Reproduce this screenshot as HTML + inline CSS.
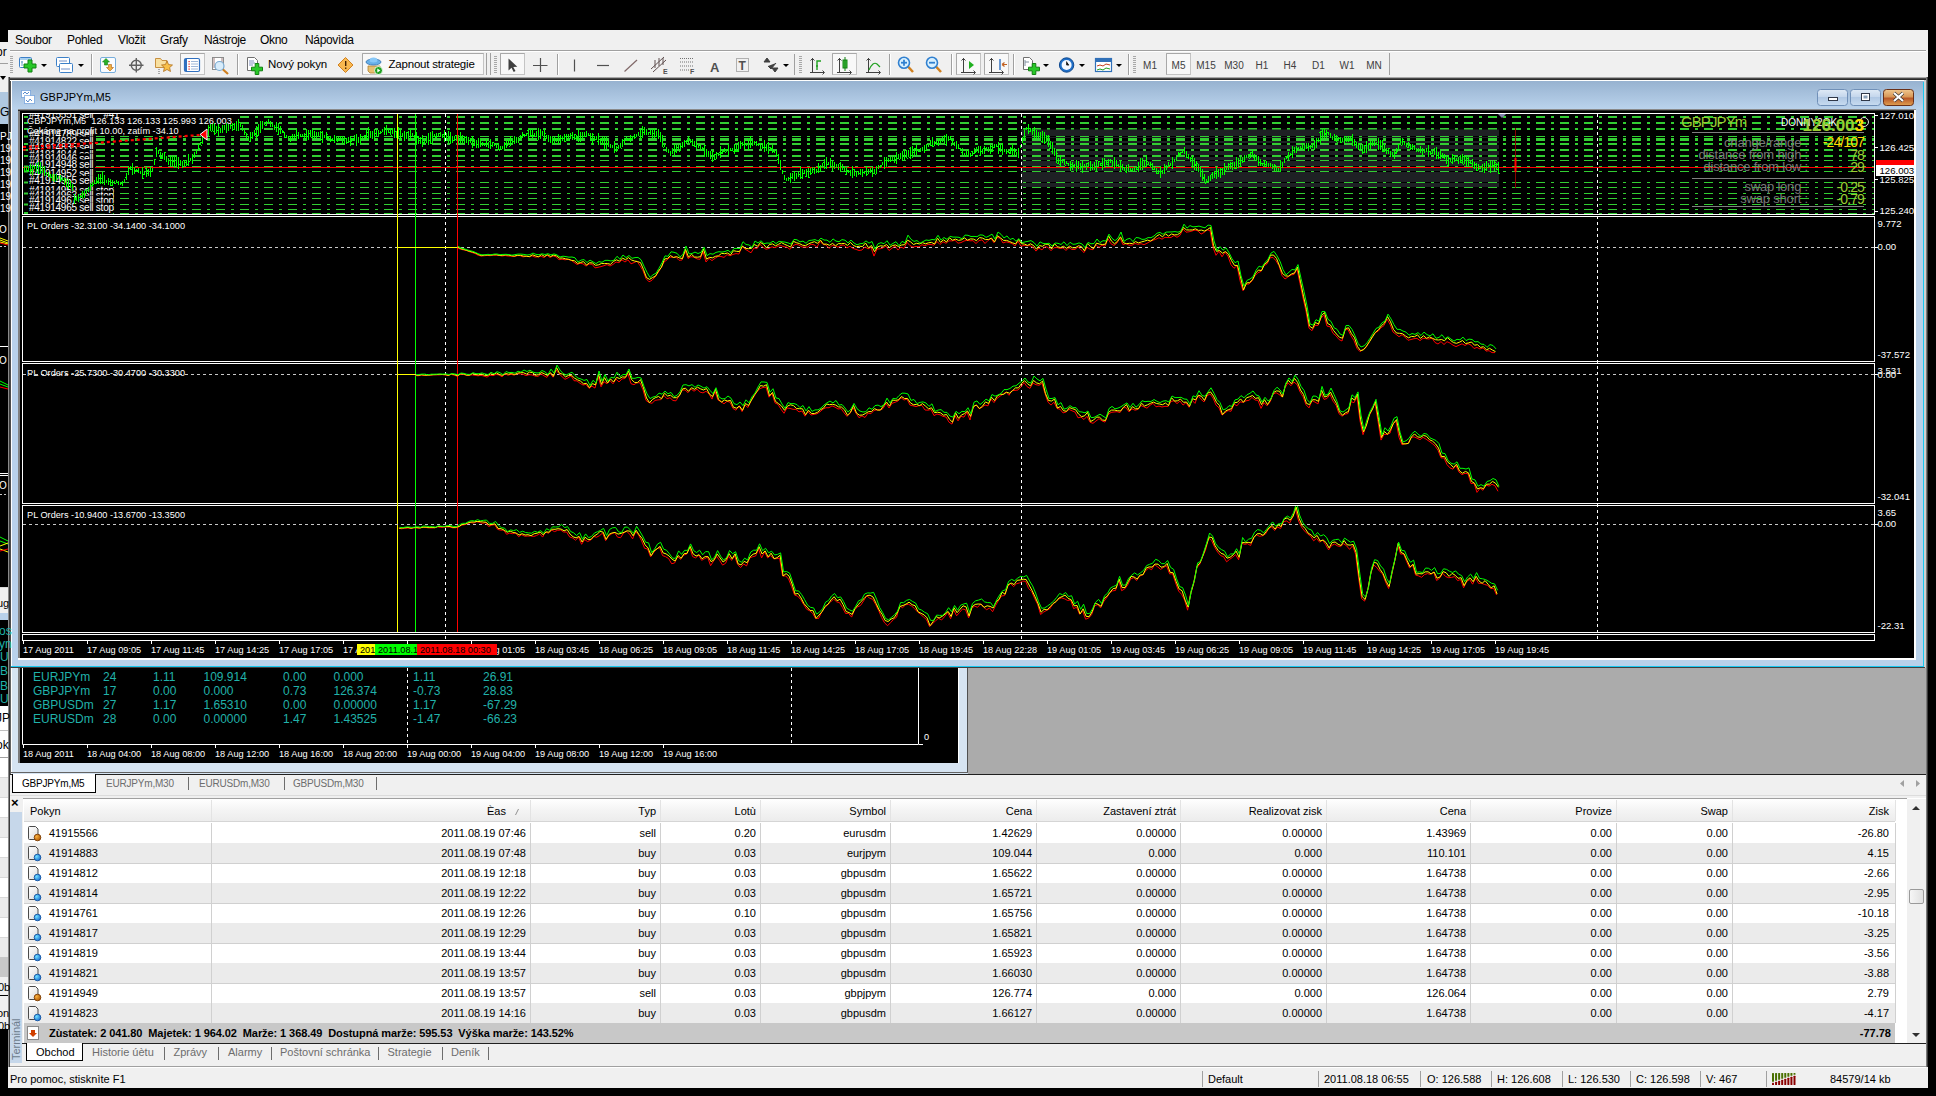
<!DOCTYPE html>
<html><head><meta charset="utf-8">
<style>
*{margin:0;padding:0;box-sizing:border-box}
html,body{width:1936px;height:1096px;overflow:hidden;background:#000;font-family:"Liberation Sans",sans-serif;position:relative}
.a{position:absolute}
.t{z-index:2;position:absolute;white-space:pre;line-height:1;font-family:"Liberation Sans",sans-serif}
svg{position:absolute;left:0;top:0;z-index:1}
</style></head><body>
<div class="a" style="left:0px;top:42px;width:8px;height:50px;background:#f0f0f0;"></div>
<div class="t" style="left:-4px;top:45.84px;font-size:12px;color:#000;font-weight:normal;">or</div>
<div class="a" style="left:0px;top:63px;width:8px;height:1px;background:#a0a0a0;"></div>
<div class="a" style="left:0px;top:92px;width:8px;height:32px;background:#b0c8e0;"></div>
<div class="t" style="left:0px;top:105.84px;font-size:12px;color:#000;font-weight:normal;">G</div>
<div class="t" style="left:0px;top:131.53px;font-size:10px;color:#fff;font-weight:normal;">PJ</div>
<div class="t" style="left:0px;top:143.53px;font-size:10px;color:#fff;font-weight:normal;">19</div>
<div class="t" style="left:0px;top:155.53px;font-size:10px;color:#fff;font-weight:normal;">19</div>
<div class="t" style="left:0px;top:167.53px;font-size:10px;color:#fff;font-weight:normal;">19</div>
<div class="t" style="left:0px;top:179.53px;font-size:10px;color:#fff;font-weight:normal;">19</div>
<div class="t" style="left:0px;top:191.53px;font-size:10px;color:#fff;font-weight:normal;">19</div>
<div class="t" style="left:0px;top:203.53px;font-size:10px;color:#fff;font-weight:normal;">19</div>
<div class="t" style="left:-1px;top:224.53px;font-size:10px;color:#fff;font-weight:normal;">O</div>
<div class="a" style="left:0px;top:346px;width:8px;height:1px;background:#fff;"></div>
<div class="t" style="left:-1px;top:355.54px;font-size:10px;color:#fff;font-weight:normal;">O</div>
<div class="a" style="left:0px;top:473px;width:8px;height:1px;background:#fff;"></div>
<div class="a" style="left:0px;top:475px;width:8px;height:1px;background:#fff;"></div>
<div class="t" style="left:-1px;top:480.54px;font-size:10px;color:#fff;font-weight:normal;">O</div>
<div class="a" style="left:0px;top:587px;width:8px;height:26px;background:#f0f0f0;"></div>
<div class="t" style="left:-3px;top:597.69px;font-size:11px;color:#000;font-weight:normal;">ug</div>
<div class="a" style="left:0px;top:587px;width:8px;height:1px;background:#d8d8d8;"></div>
<div class="a" style="left:0px;top:613px;width:8px;height:7px;background:#b9d1ea;"></div>
<div class="t" style="left:-1px;top:625.34px;font-size:12px;color:#20b2aa;font-weight:normal;">os</div>
<div class="t" style="left:-1px;top:638.34px;font-size:12px;color:#20b2aa;font-weight:normal;">yn</div>
<div class="t" style="left:0px;top:651.34px;font-size:12px;color:#20b2aa;font-weight:normal;">U</div>
<div class="t" style="left:0px;top:665.34px;font-size:12px;color:#20b2aa;font-weight:normal;">B</div>
<div class="t" style="left:0px;top:680.34px;font-size:12px;color:#20b2aa;font-weight:normal;">B</div>
<div class="t" style="left:0px;top:693.34px;font-size:12px;color:#20b2aa;font-weight:normal;">U</div>
<div class="a" style="left:0px;top:706px;width:8px;height:24px;background:#ffffff;"></div>
<div class="t" style="left:-4px;top:711.84px;font-size:12px;color:#000;font-weight:normal;">JP</div>
<div class="a" style="left:0px;top:730px;width:8px;height:1px;background:#c0c0c0;"></div>
<div class="a" style="left:0px;top:731px;width:8px;height:26px;background:#ffffff;"></div>
<div class="t" style="left:-4px;top:738.84px;font-size:12px;color:#000;font-weight:normal;">ok</div>
<div class="a" style="left:0px;top:757px;width:8px;height:1px;background:#a0a0a0;"></div>
<div class="a" style="left:0px;top:758px;width:8px;height:19px;background:#ffffff;"></div>
<div class="a" style="left:0px;top:777px;width:8px;height:1px;background:#d8d8d8;"></div>
<div class="a" style="left:0px;top:778px;width:8px;height:19px;background:#ebebeb;"></div>
<div class="a" style="left:0px;top:797px;width:8px;height:1px;background:#d8d8d8;"></div>
<div class="a" style="left:0px;top:798px;width:8px;height:19px;background:#ffffff;"></div>
<div class="a" style="left:0px;top:817px;width:8px;height:1px;background:#d8d8d8;"></div>
<div class="a" style="left:0px;top:818px;width:8px;height:19px;background:#ebebeb;"></div>
<div class="a" style="left:0px;top:837px;width:8px;height:1px;background:#d8d8d8;"></div>
<div class="a" style="left:0px;top:838px;width:8px;height:19px;background:#ffffff;"></div>
<div class="a" style="left:0px;top:857px;width:8px;height:1px;background:#d8d8d8;"></div>
<div class="a" style="left:0px;top:858px;width:8px;height:19px;background:#ebebeb;"></div>
<div class="a" style="left:0px;top:877px;width:8px;height:1px;background:#d8d8d8;"></div>
<div class="a" style="left:0px;top:878px;width:8px;height:19px;background:#ffffff;"></div>
<div class="a" style="left:0px;top:897px;width:8px;height:1px;background:#d8d8d8;"></div>
<div class="a" style="left:0px;top:898px;width:8px;height:19px;background:#ebebeb;"></div>
<div class="a" style="left:0px;top:917px;width:8px;height:1px;background:#d8d8d8;"></div>
<div class="a" style="left:0px;top:918px;width:8px;height:19px;background:#ffffff;"></div>
<div class="a" style="left:0px;top:937px;width:8px;height:1px;background:#d8d8d8;"></div>
<div class="a" style="left:0px;top:938px;width:8px;height:19px;background:#ebebeb;"></div>
<div class="a" style="left:0px;top:957px;width:8px;height:1px;background:#d8d8d8;"></div>
<div class="a" style="left:0px;top:957px;width:8px;height:20px;background:#c8c8c8;"></div>
<div class="a" style="left:0px;top:977px;width:8px;height:52px;background:#f0f0f0;"></div>
<div class="t" style="left:-2px;top:981.69px;font-size:11px;color:#000;font-weight:normal;">0b</div>
<div class="a" style="left:0px;top:995px;width:8px;height:1px;background:#000;"></div>
<div class="t" style="left:-3px;top:1007.69px;font-size:11px;color:#000;font-weight:normal;">on</div>
<div class="t" style="left:-2px;top:1020.69px;font-size:11px;color:#000;font-weight:normal;">0b</div>
<div class="a" style="left:8px;top:30px;width:1920px;height:1058px;background:#f0f0f0;"></div>
<div class="a" style="left:8px;top:77px;width:1px;height:990px;background:#8a8a8a;"></div>
<div class="a" style="left:9px;top:77px;width:1px;height:990px;background:#3a3a3a;"></div>
<div class="a" style="left:1926px;top:77px;width:1px;height:990px;background:#7a7a7a;"></div>
<div class="a" style="left:1927px;top:77px;width:1px;height:990px;background:#3a3a3a;"></div>
<div class="t" style="left:15px;top:34.34px;font-size:12px;color:#000;font-weight:normal;letter-spacing:-0.35px">Soubor</div>
<div class="t" style="left:67px;top:34.34px;font-size:12px;color:#000;font-weight:normal;letter-spacing:-0.35px">Pohled</div>
<div class="t" style="left:118px;top:34.34px;font-size:12px;color:#000;font-weight:normal;letter-spacing:-0.35px">Vložit</div>
<div class="t" style="left:160px;top:34.34px;font-size:12px;color:#000;font-weight:normal;letter-spacing:-0.35px">Grafy</div>
<div class="t" style="left:204px;top:34.34px;font-size:12px;color:#000;font-weight:normal;letter-spacing:-0.35px">Nástroje</div>
<div class="t" style="left:260px;top:34.34px;font-size:12px;color:#000;font-weight:normal;letter-spacing:-0.35px">Okno</div>
<div class="t" style="left:305px;top:34.34px;font-size:12px;color:#000;font-weight:normal;letter-spacing:-0.35px">Nápovìda</div>
<div class="a" style="left:10px;top:50px;width:1916px;height:1px;background:#a0a0a0;"></div>
<div class="a" style="left:10px;top:51px;width:1916px;height:1px;background:#ffffff;"></div>
<div class="a" style="left:10px;top:77px;width:1916px;height:1px;background:#a8a8a8;"></div>
<div class="a" style="left:10px;top:78px;width:1916px;height:1px;background:#4a4a4a;"></div>
<div class="a" style="left:10px;top:79px;width:1916px;height:1px;background:#2a2a2a;"></div>
<div class="a" style="left:10px;top:80px;width:1916px;height:694px;background:#ababab;"></div>
<div class="a" style="left:10px;top:666px;width:958px;height:108px;background:#d6e4f2;"></div>
<div class="a" style="left:10px;top:666px;width:1px;height:108px;background:#646464;"></div>
<div class="a" style="left:11px;top:666px;width:1px;height:108px;background:#ffffff;"></div>
<div class="a" style="left:18px;top:668px;width:2px;height:95px;background:#7a7a7a;"></div>
<div class="a" style="left:20px;top:667px;width:938px;height:96px;background:#000;"></div>
<div class="a" style="left:958px;top:667px;width:1px;height:96px;background:#ffffff;"></div>
<div class="a" style="left:959px;top:667px;width:8px;height:106px;background:#d6e4f2;"></div>
<div class="a" style="left:967px;top:667px;width:1px;height:106px;background:#505050;"></div>
<div class="a" style="left:10px;top:772px;width:958px;height:1px;background:#646464;"></div>
<div class="a" style="left:10px;top:80px;width:1916px;height:588px;background:#b9d1ea;"></div>
<div class="a" style="left:12px;top:81px;width:1912px;height:28px;background:linear-gradient(#97b2d0,#bad3ec);"></div>
<div class="a" style="left:10px;top:80px;width:1px;height:588px;background:#4c4c4c;"></div>
<div class="a" style="left:11px;top:80px;width:1px;height:587px;background:#ffffff;"></div>
<div class="a" style="left:10px;top:80px;width:1915px;height:1px;background:#ffffff;"></div>
<div class="a" style="left:1923px;top:82px;width:1px;height:585px;background:#18c8f0;"></div>
<div class="a" style="left:1924px;top:80px;width:2px;height:588px;background:#d0d0d0;"></div>
<div class="a" style="left:11px;top:666px;width:1913px;height:1px;background:#18c8f0;"></div>
<div class="a" style="left:10px;top:667px;width:1915px;height:1px;background:#404040;"></div>
<div class="a" style="left:18px;top:110px;width:2px;height:550px;background:#808080;"></div>
<div class="a" style="left:18px;top:109px;width:1898px;height:1px;background:#8a8a8a;"></div>
<div class="a" style="left:18px;top:110px;width:1898px;height:1px;background:#2a2a2a;"></div>
<div class="a" style="left:20px;top:111px;width:1894px;height:547px;background:#000;"></div>
<div class="a" style="left:18px;top:658px;width:1898px;height:2px;background:#ffffff;"></div>
<div class="a" style="left:1914px;top:110px;width:2px;height:550px;background:#ffffff;"></div>
<div class="t" style="left:40px;top:92.19px;font-size:11px;color:#000;font-weight:normal;">GBPJPYm,M5</div>
<div class="a" style="left:10px;top:774px;width:1916px;height:1px;background:#202020;"></div>
<div class="a" style="left:12px;top:774px;width:84px;height:19px;background:#fff;border:1px solid #000;border-top:none"></div>
<div class="t" style="left:22px;top:778.53px;font-size:10px;color:#000;font-weight:normal;letter-spacing:-0.2px">GBPJPYm,M5</div>
<div class="t" style="left:106px;top:778.53px;font-size:10px;color:#6d6d6d;font-weight:normal;letter-spacing:-0.2px">EURJPYm,M30</div>
<div class="t" style="left:199px;top:778.53px;font-size:10px;color:#6d6d6d;font-weight:normal;letter-spacing:-0.2px">EURUSDm,M30</div>
<div class="t" style="left:293px;top:778.53px;font-size:10px;color:#6d6d6d;font-weight:normal;letter-spacing:-0.2px">GBPUSDm,M30</div>
<div class="a" style="left:188px;top:777px;width:1px;height:13px;background:#6d6d6d;"></div>
<div class="a" style="left:284px;top:777px;width:1px;height:13px;background:#6d6d6d;"></div>
<div class="a" style="left:376px;top:777px;width:1px;height:13px;background:#6d6d6d;"></div>
<div class="a" style="left:10px;top:795px;width:1916px;height:1px;background:#dcdcdc;"></div>
<div class="t" style="left:11px;top:796.00px;font-size:13px;color:#000;font-weight:bold;">×</div>
<div class="a" style="left:10px;top:812px;width:12px;height:251px;background:#c6d7ea;"></div>
<div class="t" style="left:-21px;top:1017px;width:75px;transform:rotate(-90deg);font-size:11px;color:#6d7c8c;text-align:left">Terminál</div>
<div class="a" style="left:23px;top:798px;width:1903px;height:245px;background:#fff;"></div>
<div class="a" style="left:23px;top:798px;width:1884px;height:1px;background:#a0a0a0;"></div>
<div class="a" style="left:24px;top:799px;width:1871px;height:22px;background:linear-gradient(#ffffff,#f4f4f4 50%,#ececec);"></div>
<div class="a" style="left:24px;top:821px;width:1871px;height:1px;background:#d5d5d5;"></div>
<div class="a" style="left:211px;top:800px;width:1px;height:21px;background:#e3e3e3;"></div>
<div class="a" style="left:530px;top:800px;width:1px;height:21px;background:#e3e3e3;"></div>
<div class="a" style="left:660px;top:800px;width:1px;height:21px;background:#e3e3e3;"></div>
<div class="a" style="left:760px;top:800px;width:1px;height:21px;background:#e3e3e3;"></div>
<div class="a" style="left:890px;top:800px;width:1px;height:21px;background:#e3e3e3;"></div>
<div class="a" style="left:1036px;top:800px;width:1px;height:21px;background:#e3e3e3;"></div>
<div class="a" style="left:1180px;top:800px;width:1px;height:21px;background:#e3e3e3;"></div>
<div class="a" style="left:1326px;top:800px;width:1px;height:21px;background:#e3e3e3;"></div>
<div class="a" style="left:1470px;top:800px;width:1px;height:21px;background:#e3e3e3;"></div>
<div class="a" style="left:1616px;top:800px;width:1px;height:21px;background:#e3e3e3;"></div>
<div class="a" style="left:1732px;top:800px;width:1px;height:21px;background:#e3e3e3;"></div>
<div class="a" style="left:1895px;top:800px;width:1px;height:21px;background:#e3e3e3;"></div>
<div class="t" style="left:30px;top:805.69px;font-size:11px;color:#000;font-weight:normal;">Pokyn</div>
<div class="t" style="right:1430px;top:805.69px;font-size:11px;color:#000;font-weight:normal;">Èas</div>
<div class="t" style="right:1280px;top:805.69px;font-size:11px;color:#000;font-weight:normal;">Typ</div>
<div class="t" style="right:1180px;top:805.69px;font-size:11px;color:#000;font-weight:normal;">Lotù</div>
<div class="t" style="right:1050px;top:805.69px;font-size:11px;color:#000;font-weight:normal;">Symbol</div>
<div class="t" style="right:904px;top:805.69px;font-size:11px;color:#000;font-weight:normal;">Cena</div>
<div class="t" style="right:760px;top:805.69px;font-size:11px;color:#000;font-weight:normal;">Zastavení ztrát</div>
<div class="t" style="right:614px;top:805.69px;font-size:11px;color:#000;font-weight:normal;">Realizovat zisk</div>
<div class="t" style="right:470px;top:805.69px;font-size:11px;color:#000;font-weight:normal;">Cena</div>
<div class="t" style="right:324px;top:805.69px;font-size:11px;color:#000;font-weight:normal;">Provize</div>
<div class="t" style="right:208px;top:805.69px;font-size:11px;color:#000;font-weight:normal;">Swap</div>
<div class="t" style="right:47px;top:805.69px;font-size:11px;color:#000;font-weight:normal;">Zisk</div>
<div class="a" style="left:24px;top:843px;width:1871px;height:1px;background:#d0d0d0;"></div>
<div class="a" style="left:211px;top:823px;width:1px;height:20px;background:#d0d0d0;"></div>
<div class="a" style="left:530px;top:823px;width:1px;height:20px;background:#d0d0d0;"></div>
<div class="a" style="left:660px;top:823px;width:1px;height:20px;background:#d0d0d0;"></div>
<div class="a" style="left:760px;top:823px;width:1px;height:20px;background:#d0d0d0;"></div>
<div class="a" style="left:890px;top:823px;width:1px;height:20px;background:#d0d0d0;"></div>
<div class="a" style="left:1036px;top:823px;width:1px;height:20px;background:#d0d0d0;"></div>
<div class="a" style="left:1180px;top:823px;width:1px;height:20px;background:#d0d0d0;"></div>
<div class="a" style="left:1326px;top:823px;width:1px;height:20px;background:#d0d0d0;"></div>
<div class="a" style="left:1470px;top:823px;width:1px;height:20px;background:#d0d0d0;"></div>
<div class="a" style="left:1616px;top:823px;width:1px;height:20px;background:#d0d0d0;"></div>
<div class="a" style="left:1732px;top:823px;width:1px;height:20px;background:#d0d0d0;"></div>
<div class="a" style="left:1895px;top:823px;width:1px;height:20px;background:#d0d0d0;"></div>
<div class="t" style="left:49px;top:828.19px;font-size:11px;color:#000;font-weight:normal;">41915566</div>
<div class="t" style="right:1410px;top:828.19px;font-size:11px;color:#000;font-weight:normal;">2011.08.19 07:46</div>
<div class="t" style="right:1280px;top:828.19px;font-size:11px;color:#000;font-weight:normal;">sell</div>
<div class="t" style="right:1180px;top:828.19px;font-size:11px;color:#000;font-weight:normal;">0.20</div>
<div class="t" style="right:1050px;top:828.19px;font-size:11px;color:#000;font-weight:normal;">eurusdm</div>
<div class="t" style="right:904px;top:828.19px;font-size:11px;color:#000;font-weight:normal;">1.42629</div>
<div class="t" style="right:760px;top:828.19px;font-size:11px;color:#000;font-weight:normal;">0.00000</div>
<div class="t" style="right:614px;top:828.19px;font-size:11px;color:#000;font-weight:normal;">0.00000</div>
<div class="t" style="right:470px;top:828.19px;font-size:11px;color:#000;font-weight:normal;">1.43969</div>
<div class="t" style="right:324px;top:828.19px;font-size:11px;color:#000;font-weight:normal;">0.00</div>
<div class="t" style="right:208px;top:828.19px;font-size:11px;color:#000;font-weight:normal;">0.00</div>
<div class="t" style="right:47px;top:828.19px;font-size:11px;color:#000;font-weight:normal;">-26.80</div>
<div class="a" style="left:24px;top:843px;width:1871px;height:20px;background:#ebebeb;"></div>
<div class="a" style="left:24px;top:863px;width:1871px;height:1px;background:#d0d0d0;"></div>
<div class="a" style="left:211px;top:843px;width:1px;height:20px;background:#d0d0d0;"></div>
<div class="a" style="left:530px;top:843px;width:1px;height:20px;background:#d0d0d0;"></div>
<div class="a" style="left:660px;top:843px;width:1px;height:20px;background:#d0d0d0;"></div>
<div class="a" style="left:760px;top:843px;width:1px;height:20px;background:#d0d0d0;"></div>
<div class="a" style="left:890px;top:843px;width:1px;height:20px;background:#d0d0d0;"></div>
<div class="a" style="left:1036px;top:843px;width:1px;height:20px;background:#d0d0d0;"></div>
<div class="a" style="left:1180px;top:843px;width:1px;height:20px;background:#d0d0d0;"></div>
<div class="a" style="left:1326px;top:843px;width:1px;height:20px;background:#d0d0d0;"></div>
<div class="a" style="left:1470px;top:843px;width:1px;height:20px;background:#d0d0d0;"></div>
<div class="a" style="left:1616px;top:843px;width:1px;height:20px;background:#d0d0d0;"></div>
<div class="a" style="left:1732px;top:843px;width:1px;height:20px;background:#d0d0d0;"></div>
<div class="a" style="left:1895px;top:843px;width:1px;height:20px;background:#d0d0d0;"></div>
<div class="t" style="left:49px;top:848.19px;font-size:11px;color:#000;font-weight:normal;">41914883</div>
<div class="t" style="right:1410px;top:848.19px;font-size:11px;color:#000;font-weight:normal;">2011.08.19 07:48</div>
<div class="t" style="right:1280px;top:848.19px;font-size:11px;color:#000;font-weight:normal;">buy</div>
<div class="t" style="right:1180px;top:848.19px;font-size:11px;color:#000;font-weight:normal;">0.03</div>
<div class="t" style="right:1050px;top:848.19px;font-size:11px;color:#000;font-weight:normal;">eurjpym</div>
<div class="t" style="right:904px;top:848.19px;font-size:11px;color:#000;font-weight:normal;">109.044</div>
<div class="t" style="right:760px;top:848.19px;font-size:11px;color:#000;font-weight:normal;">0.000</div>
<div class="t" style="right:614px;top:848.19px;font-size:11px;color:#000;font-weight:normal;">0.000</div>
<div class="t" style="right:470px;top:848.19px;font-size:11px;color:#000;font-weight:normal;">110.101</div>
<div class="t" style="right:324px;top:848.19px;font-size:11px;color:#000;font-weight:normal;">0.00</div>
<div class="t" style="right:208px;top:848.19px;font-size:11px;color:#000;font-weight:normal;">0.00</div>
<div class="t" style="right:47px;top:848.19px;font-size:11px;color:#000;font-weight:normal;">4.15</div>
<div class="a" style="left:24px;top:883px;width:1871px;height:1px;background:#d0d0d0;"></div>
<div class="a" style="left:211px;top:863px;width:1px;height:20px;background:#d0d0d0;"></div>
<div class="a" style="left:530px;top:863px;width:1px;height:20px;background:#d0d0d0;"></div>
<div class="a" style="left:660px;top:863px;width:1px;height:20px;background:#d0d0d0;"></div>
<div class="a" style="left:760px;top:863px;width:1px;height:20px;background:#d0d0d0;"></div>
<div class="a" style="left:890px;top:863px;width:1px;height:20px;background:#d0d0d0;"></div>
<div class="a" style="left:1036px;top:863px;width:1px;height:20px;background:#d0d0d0;"></div>
<div class="a" style="left:1180px;top:863px;width:1px;height:20px;background:#d0d0d0;"></div>
<div class="a" style="left:1326px;top:863px;width:1px;height:20px;background:#d0d0d0;"></div>
<div class="a" style="left:1470px;top:863px;width:1px;height:20px;background:#d0d0d0;"></div>
<div class="a" style="left:1616px;top:863px;width:1px;height:20px;background:#d0d0d0;"></div>
<div class="a" style="left:1732px;top:863px;width:1px;height:20px;background:#d0d0d0;"></div>
<div class="a" style="left:1895px;top:863px;width:1px;height:20px;background:#d0d0d0;"></div>
<div class="t" style="left:49px;top:868.19px;font-size:11px;color:#000;font-weight:normal;">41914812</div>
<div class="t" style="right:1410px;top:868.19px;font-size:11px;color:#000;font-weight:normal;">2011.08.19 12:18</div>
<div class="t" style="right:1280px;top:868.19px;font-size:11px;color:#000;font-weight:normal;">buy</div>
<div class="t" style="right:1180px;top:868.19px;font-size:11px;color:#000;font-weight:normal;">0.03</div>
<div class="t" style="right:1050px;top:868.19px;font-size:11px;color:#000;font-weight:normal;">gbpusdm</div>
<div class="t" style="right:904px;top:868.19px;font-size:11px;color:#000;font-weight:normal;">1.65622</div>
<div class="t" style="right:760px;top:868.19px;font-size:11px;color:#000;font-weight:normal;">0.00000</div>
<div class="t" style="right:614px;top:868.19px;font-size:11px;color:#000;font-weight:normal;">0.00000</div>
<div class="t" style="right:470px;top:868.19px;font-size:11px;color:#000;font-weight:normal;">1.64738</div>
<div class="t" style="right:324px;top:868.19px;font-size:11px;color:#000;font-weight:normal;">0.00</div>
<div class="t" style="right:208px;top:868.19px;font-size:11px;color:#000;font-weight:normal;">0.00</div>
<div class="t" style="right:47px;top:868.19px;font-size:11px;color:#000;font-weight:normal;">-2.66</div>
<div class="a" style="left:24px;top:883px;width:1871px;height:20px;background:#ebebeb;"></div>
<div class="a" style="left:24px;top:903px;width:1871px;height:1px;background:#d0d0d0;"></div>
<div class="a" style="left:211px;top:883px;width:1px;height:20px;background:#d0d0d0;"></div>
<div class="a" style="left:530px;top:883px;width:1px;height:20px;background:#d0d0d0;"></div>
<div class="a" style="left:660px;top:883px;width:1px;height:20px;background:#d0d0d0;"></div>
<div class="a" style="left:760px;top:883px;width:1px;height:20px;background:#d0d0d0;"></div>
<div class="a" style="left:890px;top:883px;width:1px;height:20px;background:#d0d0d0;"></div>
<div class="a" style="left:1036px;top:883px;width:1px;height:20px;background:#d0d0d0;"></div>
<div class="a" style="left:1180px;top:883px;width:1px;height:20px;background:#d0d0d0;"></div>
<div class="a" style="left:1326px;top:883px;width:1px;height:20px;background:#d0d0d0;"></div>
<div class="a" style="left:1470px;top:883px;width:1px;height:20px;background:#d0d0d0;"></div>
<div class="a" style="left:1616px;top:883px;width:1px;height:20px;background:#d0d0d0;"></div>
<div class="a" style="left:1732px;top:883px;width:1px;height:20px;background:#d0d0d0;"></div>
<div class="a" style="left:1895px;top:883px;width:1px;height:20px;background:#d0d0d0;"></div>
<div class="t" style="left:49px;top:888.19px;font-size:11px;color:#000;font-weight:normal;">41914814</div>
<div class="t" style="right:1410px;top:888.19px;font-size:11px;color:#000;font-weight:normal;">2011.08.19 12:22</div>
<div class="t" style="right:1280px;top:888.19px;font-size:11px;color:#000;font-weight:normal;">buy</div>
<div class="t" style="right:1180px;top:888.19px;font-size:11px;color:#000;font-weight:normal;">0.03</div>
<div class="t" style="right:1050px;top:888.19px;font-size:11px;color:#000;font-weight:normal;">gbpusdm</div>
<div class="t" style="right:904px;top:888.19px;font-size:11px;color:#000;font-weight:normal;">1.65721</div>
<div class="t" style="right:760px;top:888.19px;font-size:11px;color:#000;font-weight:normal;">0.00000</div>
<div class="t" style="right:614px;top:888.19px;font-size:11px;color:#000;font-weight:normal;">0.00000</div>
<div class="t" style="right:470px;top:888.19px;font-size:11px;color:#000;font-weight:normal;">1.64738</div>
<div class="t" style="right:324px;top:888.19px;font-size:11px;color:#000;font-weight:normal;">0.00</div>
<div class="t" style="right:208px;top:888.19px;font-size:11px;color:#000;font-weight:normal;">0.00</div>
<div class="t" style="right:47px;top:888.19px;font-size:11px;color:#000;font-weight:normal;">-2.95</div>
<div class="a" style="left:24px;top:923px;width:1871px;height:1px;background:#d0d0d0;"></div>
<div class="a" style="left:211px;top:903px;width:1px;height:20px;background:#d0d0d0;"></div>
<div class="a" style="left:530px;top:903px;width:1px;height:20px;background:#d0d0d0;"></div>
<div class="a" style="left:660px;top:903px;width:1px;height:20px;background:#d0d0d0;"></div>
<div class="a" style="left:760px;top:903px;width:1px;height:20px;background:#d0d0d0;"></div>
<div class="a" style="left:890px;top:903px;width:1px;height:20px;background:#d0d0d0;"></div>
<div class="a" style="left:1036px;top:903px;width:1px;height:20px;background:#d0d0d0;"></div>
<div class="a" style="left:1180px;top:903px;width:1px;height:20px;background:#d0d0d0;"></div>
<div class="a" style="left:1326px;top:903px;width:1px;height:20px;background:#d0d0d0;"></div>
<div class="a" style="left:1470px;top:903px;width:1px;height:20px;background:#d0d0d0;"></div>
<div class="a" style="left:1616px;top:903px;width:1px;height:20px;background:#d0d0d0;"></div>
<div class="a" style="left:1732px;top:903px;width:1px;height:20px;background:#d0d0d0;"></div>
<div class="a" style="left:1895px;top:903px;width:1px;height:20px;background:#d0d0d0;"></div>
<div class="t" style="left:49px;top:908.19px;font-size:11px;color:#000;font-weight:normal;">41914761</div>
<div class="t" style="right:1410px;top:908.19px;font-size:11px;color:#000;font-weight:normal;">2011.08.19 12:26</div>
<div class="t" style="right:1280px;top:908.19px;font-size:11px;color:#000;font-weight:normal;">buy</div>
<div class="t" style="right:1180px;top:908.19px;font-size:11px;color:#000;font-weight:normal;">0.10</div>
<div class="t" style="right:1050px;top:908.19px;font-size:11px;color:#000;font-weight:normal;">gbpusdm</div>
<div class="t" style="right:904px;top:908.19px;font-size:11px;color:#000;font-weight:normal;">1.65756</div>
<div class="t" style="right:760px;top:908.19px;font-size:11px;color:#000;font-weight:normal;">0.00000</div>
<div class="t" style="right:614px;top:908.19px;font-size:11px;color:#000;font-weight:normal;">0.00000</div>
<div class="t" style="right:470px;top:908.19px;font-size:11px;color:#000;font-weight:normal;">1.64738</div>
<div class="t" style="right:324px;top:908.19px;font-size:11px;color:#000;font-weight:normal;">0.00</div>
<div class="t" style="right:208px;top:908.19px;font-size:11px;color:#000;font-weight:normal;">0.00</div>
<div class="t" style="right:47px;top:908.19px;font-size:11px;color:#000;font-weight:normal;">-10.18</div>
<div class="a" style="left:24px;top:923px;width:1871px;height:20px;background:#ebebeb;"></div>
<div class="a" style="left:24px;top:943px;width:1871px;height:1px;background:#d0d0d0;"></div>
<div class="a" style="left:211px;top:923px;width:1px;height:20px;background:#d0d0d0;"></div>
<div class="a" style="left:530px;top:923px;width:1px;height:20px;background:#d0d0d0;"></div>
<div class="a" style="left:660px;top:923px;width:1px;height:20px;background:#d0d0d0;"></div>
<div class="a" style="left:760px;top:923px;width:1px;height:20px;background:#d0d0d0;"></div>
<div class="a" style="left:890px;top:923px;width:1px;height:20px;background:#d0d0d0;"></div>
<div class="a" style="left:1036px;top:923px;width:1px;height:20px;background:#d0d0d0;"></div>
<div class="a" style="left:1180px;top:923px;width:1px;height:20px;background:#d0d0d0;"></div>
<div class="a" style="left:1326px;top:923px;width:1px;height:20px;background:#d0d0d0;"></div>
<div class="a" style="left:1470px;top:923px;width:1px;height:20px;background:#d0d0d0;"></div>
<div class="a" style="left:1616px;top:923px;width:1px;height:20px;background:#d0d0d0;"></div>
<div class="a" style="left:1732px;top:923px;width:1px;height:20px;background:#d0d0d0;"></div>
<div class="a" style="left:1895px;top:923px;width:1px;height:20px;background:#d0d0d0;"></div>
<div class="t" style="left:49px;top:928.19px;font-size:11px;color:#000;font-weight:normal;">41914817</div>
<div class="t" style="right:1410px;top:928.19px;font-size:11px;color:#000;font-weight:normal;">2011.08.19 12:29</div>
<div class="t" style="right:1280px;top:928.19px;font-size:11px;color:#000;font-weight:normal;">buy</div>
<div class="t" style="right:1180px;top:928.19px;font-size:11px;color:#000;font-weight:normal;">0.03</div>
<div class="t" style="right:1050px;top:928.19px;font-size:11px;color:#000;font-weight:normal;">gbpusdm</div>
<div class="t" style="right:904px;top:928.19px;font-size:11px;color:#000;font-weight:normal;">1.65821</div>
<div class="t" style="right:760px;top:928.19px;font-size:11px;color:#000;font-weight:normal;">0.00000</div>
<div class="t" style="right:614px;top:928.19px;font-size:11px;color:#000;font-weight:normal;">0.00000</div>
<div class="t" style="right:470px;top:928.19px;font-size:11px;color:#000;font-weight:normal;">1.64738</div>
<div class="t" style="right:324px;top:928.19px;font-size:11px;color:#000;font-weight:normal;">0.00</div>
<div class="t" style="right:208px;top:928.19px;font-size:11px;color:#000;font-weight:normal;">0.00</div>
<div class="t" style="right:47px;top:928.19px;font-size:11px;color:#000;font-weight:normal;">-3.25</div>
<div class="a" style="left:24px;top:963px;width:1871px;height:1px;background:#d0d0d0;"></div>
<div class="a" style="left:211px;top:943px;width:1px;height:20px;background:#d0d0d0;"></div>
<div class="a" style="left:530px;top:943px;width:1px;height:20px;background:#d0d0d0;"></div>
<div class="a" style="left:660px;top:943px;width:1px;height:20px;background:#d0d0d0;"></div>
<div class="a" style="left:760px;top:943px;width:1px;height:20px;background:#d0d0d0;"></div>
<div class="a" style="left:890px;top:943px;width:1px;height:20px;background:#d0d0d0;"></div>
<div class="a" style="left:1036px;top:943px;width:1px;height:20px;background:#d0d0d0;"></div>
<div class="a" style="left:1180px;top:943px;width:1px;height:20px;background:#d0d0d0;"></div>
<div class="a" style="left:1326px;top:943px;width:1px;height:20px;background:#d0d0d0;"></div>
<div class="a" style="left:1470px;top:943px;width:1px;height:20px;background:#d0d0d0;"></div>
<div class="a" style="left:1616px;top:943px;width:1px;height:20px;background:#d0d0d0;"></div>
<div class="a" style="left:1732px;top:943px;width:1px;height:20px;background:#d0d0d0;"></div>
<div class="a" style="left:1895px;top:943px;width:1px;height:20px;background:#d0d0d0;"></div>
<div class="t" style="left:49px;top:948.19px;font-size:11px;color:#000;font-weight:normal;">41914819</div>
<div class="t" style="right:1410px;top:948.19px;font-size:11px;color:#000;font-weight:normal;">2011.08.19 13:44</div>
<div class="t" style="right:1280px;top:948.19px;font-size:11px;color:#000;font-weight:normal;">buy</div>
<div class="t" style="right:1180px;top:948.19px;font-size:11px;color:#000;font-weight:normal;">0.03</div>
<div class="t" style="right:1050px;top:948.19px;font-size:11px;color:#000;font-weight:normal;">gbpusdm</div>
<div class="t" style="right:904px;top:948.19px;font-size:11px;color:#000;font-weight:normal;">1.65923</div>
<div class="t" style="right:760px;top:948.19px;font-size:11px;color:#000;font-weight:normal;">0.00000</div>
<div class="t" style="right:614px;top:948.19px;font-size:11px;color:#000;font-weight:normal;">0.00000</div>
<div class="t" style="right:470px;top:948.19px;font-size:11px;color:#000;font-weight:normal;">1.64738</div>
<div class="t" style="right:324px;top:948.19px;font-size:11px;color:#000;font-weight:normal;">0.00</div>
<div class="t" style="right:208px;top:948.19px;font-size:11px;color:#000;font-weight:normal;">0.00</div>
<div class="t" style="right:47px;top:948.19px;font-size:11px;color:#000;font-weight:normal;">-3.56</div>
<div class="a" style="left:24px;top:963px;width:1871px;height:20px;background:#ebebeb;"></div>
<div class="a" style="left:24px;top:983px;width:1871px;height:1px;background:#d0d0d0;"></div>
<div class="a" style="left:211px;top:963px;width:1px;height:20px;background:#d0d0d0;"></div>
<div class="a" style="left:530px;top:963px;width:1px;height:20px;background:#d0d0d0;"></div>
<div class="a" style="left:660px;top:963px;width:1px;height:20px;background:#d0d0d0;"></div>
<div class="a" style="left:760px;top:963px;width:1px;height:20px;background:#d0d0d0;"></div>
<div class="a" style="left:890px;top:963px;width:1px;height:20px;background:#d0d0d0;"></div>
<div class="a" style="left:1036px;top:963px;width:1px;height:20px;background:#d0d0d0;"></div>
<div class="a" style="left:1180px;top:963px;width:1px;height:20px;background:#d0d0d0;"></div>
<div class="a" style="left:1326px;top:963px;width:1px;height:20px;background:#d0d0d0;"></div>
<div class="a" style="left:1470px;top:963px;width:1px;height:20px;background:#d0d0d0;"></div>
<div class="a" style="left:1616px;top:963px;width:1px;height:20px;background:#d0d0d0;"></div>
<div class="a" style="left:1732px;top:963px;width:1px;height:20px;background:#d0d0d0;"></div>
<div class="a" style="left:1895px;top:963px;width:1px;height:20px;background:#d0d0d0;"></div>
<div class="t" style="left:49px;top:968.19px;font-size:11px;color:#000;font-weight:normal;">41914821</div>
<div class="t" style="right:1410px;top:968.19px;font-size:11px;color:#000;font-weight:normal;">2011.08.19 13:57</div>
<div class="t" style="right:1280px;top:968.19px;font-size:11px;color:#000;font-weight:normal;">buy</div>
<div class="t" style="right:1180px;top:968.19px;font-size:11px;color:#000;font-weight:normal;">0.03</div>
<div class="t" style="right:1050px;top:968.19px;font-size:11px;color:#000;font-weight:normal;">gbpusdm</div>
<div class="t" style="right:904px;top:968.19px;font-size:11px;color:#000;font-weight:normal;">1.66030</div>
<div class="t" style="right:760px;top:968.19px;font-size:11px;color:#000;font-weight:normal;">0.00000</div>
<div class="t" style="right:614px;top:968.19px;font-size:11px;color:#000;font-weight:normal;">0.00000</div>
<div class="t" style="right:470px;top:968.19px;font-size:11px;color:#000;font-weight:normal;">1.64738</div>
<div class="t" style="right:324px;top:968.19px;font-size:11px;color:#000;font-weight:normal;">0.00</div>
<div class="t" style="right:208px;top:968.19px;font-size:11px;color:#000;font-weight:normal;">0.00</div>
<div class="t" style="right:47px;top:968.19px;font-size:11px;color:#000;font-weight:normal;">-3.88</div>
<div class="a" style="left:24px;top:1003px;width:1871px;height:1px;background:#d0d0d0;"></div>
<div class="a" style="left:211px;top:983px;width:1px;height:20px;background:#d0d0d0;"></div>
<div class="a" style="left:530px;top:983px;width:1px;height:20px;background:#d0d0d0;"></div>
<div class="a" style="left:660px;top:983px;width:1px;height:20px;background:#d0d0d0;"></div>
<div class="a" style="left:760px;top:983px;width:1px;height:20px;background:#d0d0d0;"></div>
<div class="a" style="left:890px;top:983px;width:1px;height:20px;background:#d0d0d0;"></div>
<div class="a" style="left:1036px;top:983px;width:1px;height:20px;background:#d0d0d0;"></div>
<div class="a" style="left:1180px;top:983px;width:1px;height:20px;background:#d0d0d0;"></div>
<div class="a" style="left:1326px;top:983px;width:1px;height:20px;background:#d0d0d0;"></div>
<div class="a" style="left:1470px;top:983px;width:1px;height:20px;background:#d0d0d0;"></div>
<div class="a" style="left:1616px;top:983px;width:1px;height:20px;background:#d0d0d0;"></div>
<div class="a" style="left:1732px;top:983px;width:1px;height:20px;background:#d0d0d0;"></div>
<div class="a" style="left:1895px;top:983px;width:1px;height:20px;background:#d0d0d0;"></div>
<div class="t" style="left:49px;top:988.19px;font-size:11px;color:#000;font-weight:normal;">41914949</div>
<div class="t" style="right:1410px;top:988.19px;font-size:11px;color:#000;font-weight:normal;">2011.08.19 13:57</div>
<div class="t" style="right:1280px;top:988.19px;font-size:11px;color:#000;font-weight:normal;">sell</div>
<div class="t" style="right:1180px;top:988.19px;font-size:11px;color:#000;font-weight:normal;">0.03</div>
<div class="t" style="right:1050px;top:988.19px;font-size:11px;color:#000;font-weight:normal;">gbpjpym</div>
<div class="t" style="right:904px;top:988.19px;font-size:11px;color:#000;font-weight:normal;">126.774</div>
<div class="t" style="right:760px;top:988.19px;font-size:11px;color:#000;font-weight:normal;">0.000</div>
<div class="t" style="right:614px;top:988.19px;font-size:11px;color:#000;font-weight:normal;">0.000</div>
<div class="t" style="right:470px;top:988.19px;font-size:11px;color:#000;font-weight:normal;">126.064</div>
<div class="t" style="right:324px;top:988.19px;font-size:11px;color:#000;font-weight:normal;">0.00</div>
<div class="t" style="right:208px;top:988.19px;font-size:11px;color:#000;font-weight:normal;">0.00</div>
<div class="t" style="right:47px;top:988.19px;font-size:11px;color:#000;font-weight:normal;">2.79</div>
<div class="a" style="left:24px;top:1003px;width:1871px;height:20px;background:#ebebeb;"></div>
<div class="a" style="left:24px;top:1023px;width:1871px;height:1px;background:#d0d0d0;"></div>
<div class="a" style="left:211px;top:1003px;width:1px;height:20px;background:#d0d0d0;"></div>
<div class="a" style="left:530px;top:1003px;width:1px;height:20px;background:#d0d0d0;"></div>
<div class="a" style="left:660px;top:1003px;width:1px;height:20px;background:#d0d0d0;"></div>
<div class="a" style="left:760px;top:1003px;width:1px;height:20px;background:#d0d0d0;"></div>
<div class="a" style="left:890px;top:1003px;width:1px;height:20px;background:#d0d0d0;"></div>
<div class="a" style="left:1036px;top:1003px;width:1px;height:20px;background:#d0d0d0;"></div>
<div class="a" style="left:1180px;top:1003px;width:1px;height:20px;background:#d0d0d0;"></div>
<div class="a" style="left:1326px;top:1003px;width:1px;height:20px;background:#d0d0d0;"></div>
<div class="a" style="left:1470px;top:1003px;width:1px;height:20px;background:#d0d0d0;"></div>
<div class="a" style="left:1616px;top:1003px;width:1px;height:20px;background:#d0d0d0;"></div>
<div class="a" style="left:1732px;top:1003px;width:1px;height:20px;background:#d0d0d0;"></div>
<div class="a" style="left:1895px;top:1003px;width:1px;height:20px;background:#d0d0d0;"></div>
<div class="t" style="left:49px;top:1008.19px;font-size:11px;color:#000;font-weight:normal;">41914823</div>
<div class="t" style="right:1410px;top:1008.19px;font-size:11px;color:#000;font-weight:normal;">2011.08.19 14:16</div>
<div class="t" style="right:1280px;top:1008.19px;font-size:11px;color:#000;font-weight:normal;">buy</div>
<div class="t" style="right:1180px;top:1008.19px;font-size:11px;color:#000;font-weight:normal;">0.03</div>
<div class="t" style="right:1050px;top:1008.19px;font-size:11px;color:#000;font-weight:normal;">gbpusdm</div>
<div class="t" style="right:904px;top:1008.19px;font-size:11px;color:#000;font-weight:normal;">1.66127</div>
<div class="t" style="right:760px;top:1008.19px;font-size:11px;color:#000;font-weight:normal;">0.00000</div>
<div class="t" style="right:614px;top:1008.19px;font-size:11px;color:#000;font-weight:normal;">0.00000</div>
<div class="t" style="right:470px;top:1008.19px;font-size:11px;color:#000;font-weight:normal;">1.64738</div>
<div class="t" style="right:324px;top:1008.19px;font-size:11px;color:#000;font-weight:normal;">0.00</div>
<div class="t" style="right:208px;top:1008.19px;font-size:11px;color:#000;font-weight:normal;">0.00</div>
<div class="t" style="right:47px;top:1008.19px;font-size:11px;color:#000;font-weight:normal;">-4.17</div>
<div class="a" style="left:24px;top:1023px;width:1871px;height:20px;background:#c8c8c8;"></div>
<div class="t" style="left:49px;top:1027.69px;font-size:11px;color:#000;font-weight:bold;letter-spacing:-0.08px">Zùstatek: 2 041.80&nbsp; Majetek: 1 964.02&nbsp; Marže: 1 368.49&nbsp; Dostupná marže: 595.53&nbsp; Výška marže: 143.52%</div>
<div class="t" style="right:45px;top:1027.69px;font-size:11px;color:#000;font-weight:bold;">-77.78</div>
<div class="a" style="left:1907px;top:799px;width:19px;height:244px;background:#f0f0f0;"></div>
<div class="a" style="left:1909px;top:889px;width:15px;height:15px;background:linear-gradient(90deg,#f6f6f6,#e0e0e0);border:1px solid #9a9a9a;border-radius:2px"></div>
<div class="a" style="left:22px;top:1043px;width:1904px;height:1px;background:#202020;"></div>
<div class="a" style="left:26px;top:1043px;width:57px;height:18px;background:#fff;border:1px solid #000;border-top:none"></div>
<div class="t" style="left:36px;top:1046.69px;font-size:11px;color:#000;font-weight:normal;">Obchod</div>
<div class="t" style="left:92px;top:1046.69px;font-size:11px;color:#6d6d6d;font-weight:normal;">Historie úètu</div>
<div class="t" style="left:173.5px;top:1046.69px;font-size:11px;color:#6d6d6d;font-weight:normal;">Zprávy</div>
<div class="t" style="left:228px;top:1046.69px;font-size:11px;color:#6d6d6d;font-weight:normal;">Alarmy</div>
<div class="t" style="left:280px;top:1046.69px;font-size:11px;color:#6d6d6d;font-weight:normal;">Poštovní schránka</div>
<div class="t" style="left:387.5px;top:1046.69px;font-size:11px;color:#6d6d6d;font-weight:normal;">Strategie</div>
<div class="t" style="left:451px;top:1046.69px;font-size:11px;color:#6d6d6d;font-weight:normal;">Deník</div>
<div class="a" style="left:164px;top:1047px;width:1px;height:13px;background:#6d6d6d;"></div>
<div class="a" style="left:218px;top:1047px;width:1px;height:13px;background:#6d6d6d;"></div>
<div class="a" style="left:271px;top:1047px;width:1px;height:13px;background:#6d6d6d;"></div>
<div class="a" style="left:378px;top:1047px;width:1px;height:13px;background:#6d6d6d;"></div>
<div class="a" style="left:442px;top:1047px;width:1px;height:13px;background:#6d6d6d;"></div>
<div class="a" style="left:488px;top:1047px;width:1px;height:13px;background:#6d6d6d;"></div>
<div class="a" style="left:10px;top:1066px;width:1916px;height:1px;background:#a0a0a0;"></div>
<div class="a" style="left:10px;top:1067px;width:1916px;height:1px;background:#ffffff;"></div>
<div class="t" style="left:10px;top:1073.69px;font-size:11px;color:#000;font-weight:normal;">Pro pomoc, stisknìte F1</div>
<div class="a" style="left:1202px;top:1071px;width:1px;height:16px;background:#a0a0a0;"></div>
<div class="a" style="left:1318px;top:1071px;width:1px;height:16px;background:#a0a0a0;"></div>
<div class="a" style="left:1420px;top:1071px;width:1px;height:16px;background:#a0a0a0;"></div>
<div class="a" style="left:1491px;top:1071px;width:1px;height:16px;background:#a0a0a0;"></div>
<div class="a" style="left:1562px;top:1071px;width:1px;height:16px;background:#a0a0a0;"></div>
<div class="a" style="left:1630px;top:1071px;width:1px;height:16px;background:#a0a0a0;"></div>
<div class="a" style="left:1700px;top:1071px;width:1px;height:16px;background:#a0a0a0;"></div>
<div class="a" style="left:1766px;top:1071px;width:1px;height:16px;background:#a0a0a0;"></div>
<div class="t" style="left:1208px;top:1073.69px;font-size:11px;color:#000;font-weight:normal;">Default</div>
<div class="t" style="left:1324px;top:1073.69px;font-size:11px;color:#000;font-weight:normal;">2011.08.18 06:55</div>
<div class="t" style="left:1427px;top:1073.69px;font-size:11px;color:#000;font-weight:normal;">O: 126.588</div>
<div class="t" style="left:1497px;top:1073.69px;font-size:11px;color:#000;font-weight:normal;">H: 126.608</div>
<div class="t" style="left:1568px;top:1073.69px;font-size:11px;color:#000;font-weight:normal;">L: 126.530</div>
<div class="t" style="left:1636px;top:1073.69px;font-size:11px;color:#000;font-weight:normal;">C: 126.598</div>
<div class="t" style="left:1706px;top:1073.69px;font-size:11px;color:#000;font-weight:normal;">V: 467</div>
<div class="t" style="left:1830px;top:1073.69px;font-size:11px;color:#000;font-weight:normal;">84579/14 kb</div>
<div class="t" style="left:27px;top:116.71px;font-size:9.2px;color:#fff;font-weight:normal;">GBPJPYm,M5  126.133 126.133 125.993 126.003</div>
<div class="a" style="left:23px;top:114px;width:200px;height:4px;overflow:hidden;z-index:2"><div style="position:absolute;white-space:pre;line-height:1;font-size:10px;color:#fff;left:6px;top:-4px;letter-spacing:-0.25px">#41915551 sell    #41</div></div>
<div class="t" style="left:27px;top:127.21px;font-size:9.2px;color:#fff;font-weight:normal;">Čekáme na profit 10.00, zatím -34.10</div>
<div class="t" style="left:1681px;top:114.30px;font-size:15px;color:#9acd32;font-weight:normal;letter-spacing:-0.9px">GBPJPYm</div>
<div class="t" style="left:1781px;top:117.53px;font-size:10px;color:#fff;font-weight:normal;">DONNY2OK</div>
<div class="t" style="right:72px;top:116.61px;font-size:17px;color:#9acd32;font-weight:bold;">126.003</div>
<div class="t" style="right:72px;top:116.61px;font-size:17px;color:#ffd700;font-weight:bold;">3</div>
<div class="t" style="right:128px;top:135.80px;font-size:13px;color:#7a7a7a;font-weight:normal;letter-spacing:-0.2px">change/range :</div>
<div class="t" style="right:72px;top:135.45px;font-size:14px;color:#ffd700;font-weight:normal;letter-spacing:-0.9px">-24/107</div>
<div class="t" style="right:128px;top:148.00px;font-size:13px;color:#7a7a7a;font-weight:normal;letter-spacing:-0.2px">distance from high :</div>
<div class="t" style="right:72px;top:147.65px;font-size:14px;color:#9acd32;font-weight:normal;letter-spacing:-0.9px">78</div>
<div class="t" style="right:128px;top:160.10px;font-size:13px;color:#7a7a7a;font-weight:normal;letter-spacing:-0.2px">distance from low :</div>
<div class="t" style="right:72px;top:159.75px;font-size:14px;color:#9acd32;font-weight:normal;letter-spacing:-0.9px">29</div>
<div class="t" style="right:128px;top:180.10px;font-size:13px;color:#7a7a7a;font-weight:normal;letter-spacing:-0.2px">swap long :</div>
<div class="t" style="right:72px;top:179.75px;font-size:14px;color:#9acd32;font-weight:normal;letter-spacing:-0.9px">-0.25</div>
<div class="t" style="right:128px;top:192.20px;font-size:13px;color:#7a7a7a;font-weight:normal;letter-spacing:-0.2px">swap short :</div>
<div class="t" style="right:72px;top:191.85px;font-size:14px;color:#9acd32;font-weight:normal;letter-spacing:-0.9px">-0.79</div>
<div class="a" style="left:1876px;top:160px;width:38px;height:5px;background:#ff0000;"></div>
<div class="a" style="left:1876px;top:165px;width:38px;height:11px;background:#fff;"></div>
<div class="t" style="left:1879.5px;top:111.07px;font-size:9.6px;color:#fff;font-weight:normal;">127.010</div>
<div class="t" style="left:1879.5px;top:142.77px;font-size:9.6px;color:#fff;font-weight:normal;">126.425</div>
<div class="t" style="left:1879.5px;top:174.87px;font-size:9.6px;color:#fff;font-weight:normal;">125.825</div>
<div class="t" style="left:1879.5px;top:206.47px;font-size:9.6px;color:#fff;font-weight:normal;">125.240</div>
<div class="t" style="left:1879.5px;top:166.17px;font-size:9.6px;color:#000;font-weight:normal;">126.003</div>
<div class="t" style="left:1877.5px;top:218.77px;font-size:9.6px;color:#fff;font-weight:normal;">9.772</div>
<div class="t" style="left:1877.5px;top:241.97px;font-size:9.6px;color:#fff;font-weight:normal;">0.00</div>
<div class="t" style="left:1877.5px;top:349.97px;font-size:9.6px;color:#fff;font-weight:normal;">-37.572</div>
<div class="t" style="left:1877.5px;top:365.57px;font-size:9.6px;color:#fff;font-weight:normal;">3.531</div>
<div class="t" style="left:1877.5px;top:370.07px;font-size:9.6px;color:#fff;font-weight:normal;">0.00</div>
<div class="t" style="left:1877.5px;top:491.87px;font-size:9.6px;color:#fff;font-weight:normal;">-32.041</div>
<div class="t" style="left:1877.5px;top:507.67px;font-size:9.6px;color:#fff;font-weight:normal;">3.65</div>
<div class="t" style="left:1877.5px;top:519.27px;font-size:9.6px;color:#fff;font-weight:normal;">0.00</div>
<div class="t" style="left:1877.5px;top:620.57px;font-size:9.6px;color:#fff;font-weight:normal;">-22.31</div>
<div class="t" style="left:27px;top:221.71px;font-size:9.2px;color:#fff;font-weight:normal;">PL Orders -32.3100 -34.1400 -34.1000</div>
<div class="t" style="left:27px;top:368.71px;font-size:9.2px;color:#fff;font-weight:normal;">PL Orders -25.7300 -30.4700 -30.3300</div>
<div class="t" style="left:27px;top:510.71px;font-size:9.2px;color:#fff;font-weight:normal;">PL Orders -10.9400 -13.6700 -13.3500</div>
<div class="t" style="left:23px;top:645.51px;font-size:9.2px;color:#fff;font-weight:normal;">17 Aug 2011</div>
<div class="t" style="left:87px;top:645.51px;font-size:9.2px;color:#fff;font-weight:normal;">17 Aug 09:05</div>
<div class="t" style="left:151px;top:645.51px;font-size:9.2px;color:#fff;font-weight:normal;">17 Aug 11:45</div>
<div class="t" style="left:215px;top:645.51px;font-size:9.2px;color:#fff;font-weight:normal;">17 Aug 14:25</div>
<div class="t" style="left:279px;top:645.51px;font-size:9.2px;color:#fff;font-weight:normal;">17 Aug 17:05</div>
<div class="t" style="left:343px;top:645.51px;font-size:9.2px;color:#fff;font-weight:normal;">17 Aug 19:45</div>
<div class="t" style="left:407px;top:645.51px;font-size:9.2px;color:#fff;font-weight:normal;">17 Aug 22:25</div>
<div class="t" style="left:471px;top:645.51px;font-size:9.2px;color:#fff;font-weight:normal;">18 Aug 01:05</div>
<div class="t" style="left:535px;top:645.51px;font-size:9.2px;color:#fff;font-weight:normal;">18 Aug 03:45</div>
<div class="t" style="left:599px;top:645.51px;font-size:9.2px;color:#fff;font-weight:normal;">18 Aug 06:25</div>
<div class="t" style="left:663px;top:645.51px;font-size:9.2px;color:#fff;font-weight:normal;">18 Aug 09:05</div>
<div class="t" style="left:727px;top:645.51px;font-size:9.2px;color:#fff;font-weight:normal;">18 Aug 11:45</div>
<div class="t" style="left:791px;top:645.51px;font-size:9.2px;color:#fff;font-weight:normal;">18 Aug 14:25</div>
<div class="t" style="left:855px;top:645.51px;font-size:9.2px;color:#fff;font-weight:normal;">18 Aug 17:05</div>
<div class="t" style="left:919px;top:645.51px;font-size:9.2px;color:#fff;font-weight:normal;">18 Aug 19:45</div>
<div class="t" style="left:983px;top:645.51px;font-size:9.2px;color:#fff;font-weight:normal;">18 Aug 22:28</div>
<div class="t" style="left:1047px;top:645.51px;font-size:9.2px;color:#fff;font-weight:normal;">19 Aug 01:05</div>
<div class="t" style="left:1111px;top:645.51px;font-size:9.2px;color:#fff;font-weight:normal;">19 Aug 03:45</div>
<div class="t" style="left:1175px;top:645.51px;font-size:9.2px;color:#fff;font-weight:normal;">19 Aug 06:25</div>
<div class="t" style="left:1239px;top:645.51px;font-size:9.2px;color:#fff;font-weight:normal;">19 Aug 09:05</div>
<div class="t" style="left:1303px;top:645.51px;font-size:9.2px;color:#fff;font-weight:normal;">19 Aug 11:45</div>
<div class="t" style="left:1367px;top:645.51px;font-size:9.2px;color:#fff;font-weight:normal;">19 Aug 14:25</div>
<div class="t" style="left:1431px;top:645.51px;font-size:9.2px;color:#fff;font-weight:normal;">19 Aug 17:05</div>
<div class="t" style="left:1495px;top:645.51px;font-size:9.2px;color:#fff;font-weight:normal;">19 Aug 19:45</div>
<div class="a" style="left:357px;top:644px;width:18px;height:11px;background:#ffff00;"></div>
<div class="a" style="left:375px;top:644px;width:42px;height:11px;background:#00ff00;"></div>
<div class="a" style="left:417px;top:644px;width:80px;height:11px;background:#ff0000;"></div>
<div class="a" style="left:357px;top:644px;width:18px;height:11px;overflow:hidden;z-index:3;background:#ffff00"><div style="position:absolute;white-space:pre;line-height:1;font-size:9.2px;color:#000;top:1.5px;left:3px">2011.08.18 00:30</div></div>
<div class="a" style="left:375px;top:644px;width:42px;height:11px;overflow:hidden;z-index:3;background:#00ff00"><div style="position:absolute;white-space:pre;line-height:1;font-size:9.2px;color:#000;top:1.5px;left:3px">2011.08.18 00:30</div></div>
<div class="a" style="left:417px;top:644px;width:80px;height:11px;overflow:hidden;z-index:3;background:#ff0000"><div style="position:absolute;white-space:pre;line-height:1;font-size:9.2px;color:#000;top:1.5px;left:3px">2011.08.18 00:30</div></div>
<div class="t" style="left:33px;top:670.84px;font-size:12px;color:#20b2aa;font-weight:normal;">EURJPYm</div>
<div class="t" style="left:103px;top:670.84px;font-size:12px;color:#20b2aa;font-weight:normal;">24</div>
<div class="t" style="left:153px;top:670.84px;font-size:12px;color:#20b2aa;font-weight:normal;">1.11</div>
<div class="t" style="left:203.5px;top:670.84px;font-size:12px;color:#20b2aa;font-weight:normal;">109.914</div>
<div class="t" style="left:283px;top:670.84px;font-size:12px;color:#20b2aa;font-weight:normal;">0.00</div>
<div class="t" style="left:333.5px;top:670.84px;font-size:12px;color:#20b2aa;font-weight:normal;">0.000</div>
<div class="t" style="left:413px;top:670.84px;font-size:12px;color:#20b2aa;font-weight:normal;">1.11</div>
<div class="t" style="left:483px;top:670.84px;font-size:12px;color:#20b2aa;font-weight:normal;">26.91</div>
<div class="t" style="left:33px;top:684.84px;font-size:12px;color:#20b2aa;font-weight:normal;">GBPJPYm</div>
<div class="t" style="left:103px;top:684.84px;font-size:12px;color:#20b2aa;font-weight:normal;">17</div>
<div class="t" style="left:153px;top:684.84px;font-size:12px;color:#20b2aa;font-weight:normal;">0.00</div>
<div class="t" style="left:203.5px;top:684.84px;font-size:12px;color:#20b2aa;font-weight:normal;">0.000</div>
<div class="t" style="left:283px;top:684.84px;font-size:12px;color:#20b2aa;font-weight:normal;">0.73</div>
<div class="t" style="left:333.5px;top:684.84px;font-size:12px;color:#20b2aa;font-weight:normal;">126.374</div>
<div class="t" style="left:413px;top:684.84px;font-size:12px;color:#20b2aa;font-weight:normal;">-0.73</div>
<div class="t" style="left:483px;top:684.84px;font-size:12px;color:#20b2aa;font-weight:normal;">28.83</div>
<div class="t" style="left:33px;top:698.84px;font-size:12px;color:#20b2aa;font-weight:normal;">GBPUSDm</div>
<div class="t" style="left:103px;top:698.84px;font-size:12px;color:#20b2aa;font-weight:normal;">27</div>
<div class="t" style="left:153px;top:698.84px;font-size:12px;color:#20b2aa;font-weight:normal;">1.17</div>
<div class="t" style="left:203.5px;top:698.84px;font-size:12px;color:#20b2aa;font-weight:normal;">1.65310</div>
<div class="t" style="left:283px;top:698.84px;font-size:12px;color:#20b2aa;font-weight:normal;">0.00</div>
<div class="t" style="left:333.5px;top:698.84px;font-size:12px;color:#20b2aa;font-weight:normal;">0.00000</div>
<div class="t" style="left:413px;top:698.84px;font-size:12px;color:#20b2aa;font-weight:normal;">1.17</div>
<div class="t" style="left:483px;top:698.84px;font-size:12px;color:#20b2aa;font-weight:normal;">-67.29</div>
<div class="t" style="left:33px;top:712.84px;font-size:12px;color:#20b2aa;font-weight:normal;">EURUSDm</div>
<div class="t" style="left:103px;top:712.84px;font-size:12px;color:#20b2aa;font-weight:normal;">28</div>
<div class="t" style="left:153px;top:712.84px;font-size:12px;color:#20b2aa;font-weight:normal;">0.00</div>
<div class="t" style="left:203.5px;top:712.84px;font-size:12px;color:#20b2aa;font-weight:normal;">0.00000</div>
<div class="t" style="left:283px;top:712.84px;font-size:12px;color:#20b2aa;font-weight:normal;">1.47</div>
<div class="t" style="left:333.5px;top:712.84px;font-size:12px;color:#20b2aa;font-weight:normal;">1.43525</div>
<div class="t" style="left:413px;top:712.84px;font-size:12px;color:#20b2aa;font-weight:normal;">-1.47</div>
<div class="t" style="left:483px;top:712.84px;font-size:12px;color:#20b2aa;font-weight:normal;">-66.23</div>
<div class="t" style="left:23px;top:749.51px;font-size:9.2px;color:#fff;font-weight:normal;">18 Aug 2011</div>
<div class="t" style="left:87px;top:749.51px;font-size:9.2px;color:#fff;font-weight:normal;">18 Aug 04:00</div>
<div class="t" style="left:151px;top:749.51px;font-size:9.2px;color:#fff;font-weight:normal;">18 Aug 08:00</div>
<div class="t" style="left:215px;top:749.51px;font-size:9.2px;color:#fff;font-weight:normal;">18 Aug 12:00</div>
<div class="t" style="left:279px;top:749.51px;font-size:9.2px;color:#fff;font-weight:normal;">18 Aug 16:00</div>
<div class="t" style="left:343px;top:749.51px;font-size:9.2px;color:#fff;font-weight:normal;">18 Aug 20:00</div>
<div class="t" style="left:407px;top:749.51px;font-size:9.2px;color:#fff;font-weight:normal;">19 Aug 00:00</div>
<div class="t" style="left:471px;top:749.51px;font-size:9.2px;color:#fff;font-weight:normal;">19 Aug 04:00</div>
<div class="t" style="left:535px;top:749.51px;font-size:9.2px;color:#fff;font-weight:normal;">19 Aug 08:00</div>
<div class="t" style="left:599px;top:749.51px;font-size:9.2px;color:#fff;font-weight:normal;">19 Aug 12:00</div>
<div class="t" style="left:663px;top:749.51px;font-size:9.2px;color:#fff;font-weight:normal;">19 Aug 16:00</div>
<div class="t" style="left:924px;top:733.21px;font-size:9.2px;color:#fff;font-weight:normal;">0</div>
<div class="t" style="left:268px;top:59.07px;font-size:11.5px;color:#000;font-weight:normal;letter-spacing:-0.1px">Nový pokyn</div>
<div class="t" style="left:388.5px;top:59.07px;font-size:11.5px;color:#000;font-weight:normal;letter-spacing:-0.2px">Zapnout strategie</div>
<svg width="1936" height="1096" viewBox="0 0 1936 1096">
<path d="M0 76 L6 76 L3 80 Z" fill="#000"/>
<path d="M0 238 l8 3 M0 240 l8 3 M0 242 l8 2" stroke-width="1" fill="none" stroke="#ff0"/><path d="M0 243 l8 2" stroke="#f00"/><path d="M0 246.5 h8" stroke="#ccc" stroke-dasharray="2 2"/>
<path d="M0 381 l8 4 M0 384 l8 3" stroke="#0f0" fill="none"/><path d="M0 387 l8 2" stroke="#f00"/>
<path d="M0 494.5 h8" stroke="#ccc" stroke-dasharray="2 2"/><path d="M0 537 l8 4 M0 541 l8 3" stroke="#0f0" fill="none"/><path d="M0 546 l8 -3 M0 549 l8 3" stroke="#ff0" fill="none"/><path d="M0 551 l8 -2" stroke="#f00"/>
<defs><linearGradient id="tg" x1="0" y1="0" x2="0" y2="1"><stop offset="0" stop-color="#99b4d1"/><stop offset="1" stop-color="#bad2ea"/></linearGradient></defs>
<rect x="21.5" y="90.5" width="9" height="7" fill="#fff" stroke="#4080d0" stroke-dasharray="1 1"/><rect x="24.5" y="95.5" width="10" height="8" fill="#fff" stroke="#4080d0" stroke-dasharray="1 1"/><path d="M23 94 l2 -2 l2 2 l2 -2 M26 100 l2 2 l2 -3 l2 2" stroke="#3070c0" fill="none" stroke-width="0.8"/>
<defs><linearGradient id="bt" x1="0" y1="0" x2="0" y2="1"><stop offset="0" stop-color="#dfeaf6"/><stop offset="0.45" stop-color="#c5d7ec"/><stop offset="0.5" stop-color="#b0c8e4"/><stop offset="1" stop-color="#c8dcf0"/></linearGradient><linearGradient id="bc" x1="0" y1="0" x2="0" y2="1"><stop offset="0" stop-color="#f0c890"/><stop offset="0.45" stop-color="#d89858"/><stop offset="0.55" stop-color="#b85828"/><stop offset="1" stop-color="#e0a050"/></linearGradient></defs>
<rect x="1817.5" y="89.5" width="30" height="16" rx="3" fill="url(#bt)" stroke="#7090b8"/><rect x="1850.5" y="89.5" width="30" height="16" rx="3" fill="url(#bt)" stroke="#7090b8"/><rect x="1883.5" y="89.5" width="30" height="16" rx="3" fill="url(#bc)" stroke="#6a3018"/>
<rect x="1828.5" y="97.5" width="9" height="3" fill="#fff" stroke="#303848"/><rect x="1861.5" y="93.5" width="8" height="7" fill="#fff" stroke="#303848" stroke-width="1"/><rect x="1863.5" y="95.5" width="4" height="3" fill="#8aa0b8"/>
<path d="M1894 93 l9 8 M1903 93 l-9 8" stroke="#303030" stroke-width="3.4"/><path d="M1894 93 l9 8 M1903 93 l-9 8" stroke="#ffffff" stroke-width="2.2"/>
<path d="M1904 780 L1900 783.5 L1904 787 Z" fill="#a0a0a0"/><path d="M1916 780 L1920 783.5 L1916 787 Z" fill="#a0a0a0"/>
<path d="M515.5 815 l3 -6" stroke="#909090" stroke-width="1"/>
<path d="M28.5 827.5 q0 -1 1 -1 h6 l2.5 2.5 v9.5 q0 1 -1 1 h-7.5 q-1 0 -1 -1 Z" fill="url(#pg)" stroke="#4a4a4a" stroke-width="1"/><circle cx="37.5" cy="837.5" r="3.3" fill="url(#bo)" stroke="#7a3a00" stroke-width="0.9"/>
<path d="M28.5 847.5 q0 -1 1 -1 h6 l2.5 2.5 v9.5 q0 1 -1 1 h-7.5 q-1 0 -1 -1 Z" fill="url(#pg)" stroke="#4a4a4a" stroke-width="1"/><circle cx="37.5" cy="857.5" r="3.3" fill="url(#bb)" stroke="#1050a0" stroke-width="0.9"/>
<path d="M28.5 867.5 q0 -1 1 -1 h6 l2.5 2.5 v9.5 q0 1 -1 1 h-7.5 q-1 0 -1 -1 Z" fill="url(#pg)" stroke="#4a4a4a" stroke-width="1"/><circle cx="37.5" cy="877.5" r="3.3" fill="url(#bb)" stroke="#1050a0" stroke-width="0.9"/>
<path d="M28.5 887.5 q0 -1 1 -1 h6 l2.5 2.5 v9.5 q0 1 -1 1 h-7.5 q-1 0 -1 -1 Z" fill="url(#pg)" stroke="#4a4a4a" stroke-width="1"/><circle cx="37.5" cy="897.5" r="3.3" fill="url(#bb)" stroke="#1050a0" stroke-width="0.9"/>
<path d="M28.5 907.5 q0 -1 1 -1 h6 l2.5 2.5 v9.5 q0 1 -1 1 h-7.5 q-1 0 -1 -1 Z" fill="url(#pg)" stroke="#4a4a4a" stroke-width="1"/><circle cx="37.5" cy="917.5" r="3.3" fill="url(#bb)" stroke="#1050a0" stroke-width="0.9"/>
<path d="M28.5 927.5 q0 -1 1 -1 h6 l2.5 2.5 v9.5 q0 1 -1 1 h-7.5 q-1 0 -1 -1 Z" fill="url(#pg)" stroke="#4a4a4a" stroke-width="1"/><circle cx="37.5" cy="937.5" r="3.3" fill="url(#bb)" stroke="#1050a0" stroke-width="0.9"/>
<path d="M28.5 947.5 q0 -1 1 -1 h6 l2.5 2.5 v9.5 q0 1 -1 1 h-7.5 q-1 0 -1 -1 Z" fill="url(#pg)" stroke="#4a4a4a" stroke-width="1"/><circle cx="37.5" cy="957.5" r="3.3" fill="url(#bb)" stroke="#1050a0" stroke-width="0.9"/>
<path d="M28.5 967.5 q0 -1 1 -1 h6 l2.5 2.5 v9.5 q0 1 -1 1 h-7.5 q-1 0 -1 -1 Z" fill="url(#pg)" stroke="#4a4a4a" stroke-width="1"/><circle cx="37.5" cy="977.5" r="3.3" fill="url(#bb)" stroke="#1050a0" stroke-width="0.9"/>
<path d="M28.5 987.5 q0 -1 1 -1 h6 l2.5 2.5 v9.5 q0 1 -1 1 h-7.5 q-1 0 -1 -1 Z" fill="url(#pg)" stroke="#4a4a4a" stroke-width="1"/><circle cx="37.5" cy="997.5" r="3.3" fill="url(#bo)" stroke="#7a3a00" stroke-width="0.9"/>
<path d="M28.5 1007.5 q0 -1 1 -1 h6 l2.5 2.5 v9.5 q0 1 -1 1 h-7.5 q-1 0 -1 -1 Z" fill="url(#pg)" stroke="#4a4a4a" stroke-width="1"/><circle cx="37.5" cy="1017.5" r="3.3" fill="url(#bb)" stroke="#1050a0" stroke-width="0.9"/>
<defs><linearGradient id="pg" x1="0" y1="0" x2="1" y2="1"><stop offset="0" stop-color="#ffffff"/><stop offset="1" stop-color="#dcdcdc"/></linearGradient><radialGradient id="bo" cx="0.35" cy="0.35" r="0.7"><stop offset="0" stop-color="#f8b040"/><stop offset="1" stop-color="#b05800"/></radialGradient><radialGradient id="bb" cx="0.35" cy="0.35" r="0.7"><stop offset="0" stop-color="#70e0ff"/><stop offset="1" stop-color="#1a6ed0"/></radialGradient></defs>
<rect x="27.5" y="1026.5" width="11" height="13" fill="#fff" stroke="#888"/><path d="M31 1030 h4 v3 h2 l-4 4 l-4 -4 h2 Z" fill="#d04000"/>
<path d="M1912 810 L1916 806 L1920 810 Z" fill="#303030"/><path d="M1912 1033 L1916 1037 L1920 1033 Z" fill="#303030"/>
<rect x="1772.00" y="1073" width="2" height="8.7" rx="0.5" fill="#4a7000"/><rect x="1772.00" y="1082.8" width="2" height="2.2" rx="0.5" fill="#8b0000"/>
<rect x="1775.07" y="1073" width="2" height="7.7" rx="0.5" fill="#4a7000"/><rect x="1775.07" y="1081.8" width="2" height="3.2" rx="0.5" fill="#8b0000"/>
<rect x="1778.14" y="1073" width="2" height="6.7" rx="0.5" fill="#4a7000"/><rect x="1778.14" y="1080.8" width="2" height="4.2" rx="0.5" fill="#8b0000"/>
<rect x="1781.21" y="1073" width="2" height="5.7" rx="0.5" fill="#4a7000"/><rect x="1781.21" y="1079.8" width="2" height="5.2" rx="0.5" fill="#8b0000"/>
<rect x="1784.28" y="1073" width="2" height="4.7" rx="0.5" fill="#4a7000"/><rect x="1784.28" y="1078.8" width="2" height="6.2" rx="0.5" fill="#8b0000"/>
<rect x="1787.35" y="1073" width="2" height="3.7" rx="0.5" fill="#4a7000"/><rect x="1787.35" y="1077.8" width="2" height="7.2" rx="0.5" fill="#8b0000"/>
<rect x="1790.42" y="1073" width="2" height="2.7" rx="0.5" fill="#4a7000"/><rect x="1790.42" y="1076.8" width="2" height="8.2" rx="0.5" fill="#8b0000"/>
<rect x="1793.49" y="1073" width="2" height="1.7" rx="0.5" fill="#4a7000"/><rect x="1793.49" y="1075.8" width="2" height="9.2" rx="0.5" fill="#8b0000"/>
<line x1="240" y1="117" x2="1874" y2="117" stroke="#32cd32" stroke-width="2" stroke-dasharray="9 6 3 6" stroke-dashoffset="0" shape-rendering="crispEdges"/>
<line x1="240" y1="123" x2="1874" y2="123" stroke="#32cd32" stroke-width="2" stroke-dasharray="9 6 3 6" stroke-dashoffset="0" shape-rendering="crispEdges"/>
<line x1="240" y1="129" x2="1874" y2="129" stroke="#32cd32" stroke-width="2" stroke-dasharray="9 6 3 6" stroke-dashoffset="0" shape-rendering="crispEdges"/>
<line x1="95" y1="136.5" x2="1874" y2="136.5" stroke="#32cd32" stroke-width="1" stroke-dasharray="9 6 3 6" stroke-dashoffset="23" shape-rendering="crispEdges"/>
<line x1="95" y1="139.5" x2="1874" y2="139.5" stroke="#32cd32" stroke-width="3" stroke-dasharray="9 6 3 6" stroke-dashoffset="23" shape-rendering="crispEdges"/>
<line x1="95" y1="144" x2="1874" y2="144" stroke="#32cd32" stroke-width="2" stroke-dasharray="9 6 3 6" stroke-dashoffset="23" shape-rendering="crispEdges"/>
<line x1="95" y1="150" x2="1874" y2="150" stroke="#32cd32" stroke-width="2" stroke-dasharray="9 6 3 6" stroke-dashoffset="23" shape-rendering="crispEdges"/>
<line x1="95" y1="156" x2="1874" y2="156" stroke="#32cd32" stroke-width="2" stroke-dasharray="9 6 3 6" stroke-dashoffset="23" shape-rendering="crispEdges"/>
<line x1="95" y1="160.5" x2="1874" y2="160.5" stroke="#32cd32" stroke-width="1" stroke-dasharray="9 6 3 6" stroke-dashoffset="23" shape-rendering="crispEdges"/>
<line x1="95" y1="166.5" x2="1874" y2="166.5" stroke="#32cd32" stroke-width="1" stroke-dasharray="9 6 3 6" stroke-dashoffset="23" shape-rendering="crispEdges"/>
<line x1="95" y1="171.5" x2="1874" y2="171.5" stroke="#32cd32" stroke-width="1" stroke-dasharray="9 6 3 6" stroke-dashoffset="23" shape-rendering="crispEdges"/>
<line x1="95" y1="182.5" x2="1874" y2="182.5" stroke="#32cd32" stroke-width="1" stroke-dasharray="9 6 3 6" stroke-dashoffset="23" shape-rendering="crispEdges"/>
<line x1="95" y1="187.5" x2="1874" y2="187.5" stroke="#32cd32" stroke-width="1" stroke-dasharray="9 6 3 6" stroke-dashoffset="23" shape-rendering="crispEdges"/>
<line x1="95" y1="193.5" x2="1874" y2="193.5" stroke="#32cd32" stroke-width="1" stroke-dasharray="9 6 3 6" stroke-dashoffset="23" shape-rendering="crispEdges"/>
<line x1="95" y1="198.5" x2="1874" y2="198.5" stroke="#32cd32" stroke-width="1" stroke-dasharray="9 6 3 6" stroke-dashoffset="23" shape-rendering="crispEdges"/>
<line x1="95" y1="204.5" x2="1874" y2="204.5" stroke="#32cd32" stroke-width="1" stroke-dasharray="9 6 3 6" stroke-dashoffset="23" shape-rendering="crispEdges"/>
<line x1="95" y1="209.5" x2="1874" y2="209.5" stroke="#32cd32" stroke-width="1" stroke-dasharray="9 6 3 6" stroke-dashoffset="23" shape-rendering="crispEdges"/>
<line x1="95" y1="213" x2="1874" y2="213" stroke="#32cd32" stroke-width="1" stroke-dasharray="9 6 3 6" stroke-dashoffset="23" shape-rendering="crispEdges"/>
<line x1="24" y1="117" x2="28" y2="117" stroke="#32cd32" stroke-width="2"/>
<line x1="24" y1="123" x2="28" y2="123" stroke="#32cd32" stroke-width="2"/>
<line x1="24" y1="129" x2="28" y2="129" stroke="#32cd32" stroke-width="2"/>
<line x1="24" y1="136.5" x2="28" y2="136.5" stroke="#32cd32" stroke-width="2"/>
<line x1="24" y1="144" x2="28" y2="144" stroke="#32cd32" stroke-width="2"/>
<line x1="24" y1="150" x2="28" y2="150" stroke="#32cd32" stroke-width="2"/>
<line x1="24" y1="156" x2="28" y2="156" stroke="#32cd32" stroke-width="2"/>
<line x1="24" y1="166.5" x2="28" y2="166.5" stroke="#32cd32" stroke-width="2"/>
<line x1="24" y1="171.5" x2="28" y2="171.5" stroke="#32cd32" stroke-width="2"/>
<line x1="24" y1="182.5" x2="28" y2="182.5" stroke="#32cd32" stroke-width="2"/>
<line x1="24" y1="193.5" x2="28" y2="193.5" stroke="#32cd32" stroke-width="2"/>
<line x1="24" y1="204.5" x2="28" y2="204.5" stroke="#32cd32" stroke-width="2"/>
<line x1="24" y1="213" x2="28" y2="213" stroke="#32cd32" stroke-width="2"/>
<rect x="1021" y="129.5" width="478" height="58" fill="#1e2124"/>
<line x1="1021" y1="136.5" x2="1499" y2="136.5" stroke="#000" stroke-width="1" shape-rendering="crispEdges"/>
<line x1="1021" y1="136.5" x2="1499" y2="136.5" stroke="#32cd32" stroke-width="1" stroke-dasharray="9 6 3 6" stroke-dashoffset="13" shape-rendering="crispEdges"/>
<line x1="1021" y1="139.5" x2="1499" y2="139.5" stroke="#000" stroke-width="3" shape-rendering="crispEdges"/>
<line x1="1021" y1="139.5" x2="1499" y2="139.5" stroke="#32cd32" stroke-width="3" stroke-dasharray="9 6 3 6" stroke-dashoffset="13" shape-rendering="crispEdges"/>
<line x1="1021" y1="144" x2="1499" y2="144" stroke="#000" stroke-width="2" shape-rendering="crispEdges"/>
<line x1="1021" y1="144" x2="1499" y2="144" stroke="#32cd32" stroke-width="2" stroke-dasharray="9 6 3 6" stroke-dashoffset="13" shape-rendering="crispEdges"/>
<line x1="1021" y1="150" x2="1499" y2="150" stroke="#000" stroke-width="2" shape-rendering="crispEdges"/>
<line x1="1021" y1="150" x2="1499" y2="150" stroke="#32cd32" stroke-width="2" stroke-dasharray="9 6 3 6" stroke-dashoffset="13" shape-rendering="crispEdges"/>
<line x1="1021" y1="156" x2="1499" y2="156" stroke="#000" stroke-width="2" shape-rendering="crispEdges"/>
<line x1="1021" y1="156" x2="1499" y2="156" stroke="#32cd32" stroke-width="2" stroke-dasharray="9 6 3 6" stroke-dashoffset="13" shape-rendering="crispEdges"/>
<line x1="1021" y1="160.5" x2="1499" y2="160.5" stroke="#000" stroke-width="1" shape-rendering="crispEdges"/>
<line x1="1021" y1="160.5" x2="1499" y2="160.5" stroke="#32cd32" stroke-width="1" stroke-dasharray="9 6 3 6" stroke-dashoffset="13" shape-rendering="crispEdges"/>
<line x1="1021" y1="166.5" x2="1499" y2="166.5" stroke="#000" stroke-width="1" shape-rendering="crispEdges"/>
<line x1="1021" y1="166.5" x2="1499" y2="166.5" stroke="#32cd32" stroke-width="1" stroke-dasharray="9 6 3 6" stroke-dashoffset="13" shape-rendering="crispEdges"/>
<line x1="1021" y1="171.5" x2="1499" y2="171.5" stroke="#000" stroke-width="1" shape-rendering="crispEdges"/>
<line x1="1021" y1="171.5" x2="1499" y2="171.5" stroke="#32cd32" stroke-width="1" stroke-dasharray="9 6 3 6" stroke-dashoffset="13" shape-rendering="crispEdges"/>
<line x1="1021" y1="182.5" x2="1499" y2="182.5" stroke="#000" stroke-width="1" shape-rendering="crispEdges"/>
<line x1="1021" y1="182.5" x2="1499" y2="182.5" stroke="#32cd32" stroke-width="1" stroke-dasharray="9 6 3 6" stroke-dashoffset="13" shape-rendering="crispEdges"/>
<line x1="1021" y1="187.5" x2="1499" y2="187.5" stroke="#000" stroke-width="1" shape-rendering="crispEdges"/>
<line x1="1021" y1="187.5" x2="1499" y2="187.5" stroke="#32cd32" stroke-width="1" stroke-dasharray="9 6 3 6" stroke-dashoffset="13" shape-rendering="crispEdges"/>
<line x1="95" y1="167.5" x2="1874" y2="167.5" stroke="#ff0000" stroke-width="1" shape-rendering="crispEdges"/>
<line x1="22" y1="167.5" x2="40" y2="167.5" stroke="#ff0000" stroke-width="1"/>
<rect x="29" y="129.5" width="66" height="11" fill="#000"/>
<text x="29" y="138" font-size="10" fill="#fff" letter-spacing="-0.25" font-family="Liberation Sans">#41914789 sell</text>
<rect x="29" y="136.5" width="66" height="11" fill="#000"/>
<text x="29" y="145" font-size="10" fill="#fff" letter-spacing="-0.25" font-family="Liberation Sans">#41914822 sell</text>
<rect x="29" y="142.5" width="66" height="11" fill="#000"/>
<text x="29" y="151" font-size="10" fill="#fff" letter-spacing="-0.25" font-family="Liberation Sans">#41914835 sell</text>
<rect x="29" y="149.1" width="66" height="11" fill="#000"/>
<text x="29" y="157.6" font-size="10" fill="#fff" letter-spacing="-0.25" font-family="Liberation Sans">#41914944 sell</text>
<rect x="29" y="153.5" width="66" height="11" fill="#000"/>
<text x="29" y="162" font-size="10" fill="#fff" letter-spacing="-0.25" font-family="Liberation Sans">#41914946 sell</text>
<rect x="29" y="159.5" width="66" height="11" fill="#000"/>
<text x="29" y="168" font-size="10" fill="#fff" letter-spacing="-0.25" font-family="Liberation Sans">#41914948 sell</text>
<rect x="29" y="168.5" width="66" height="11" fill="#000"/>
<text x="29" y="177" font-size="10" fill="#fff" letter-spacing="-0.25" font-family="Liberation Sans">#41914952 sell</text>
<rect x="29" y="175.9" width="66" height="11" fill="#000"/>
<text x="29" y="184.4" font-size="10" fill="#fff" letter-spacing="-0.25" font-family="Liberation Sans">#41914955 sell</text>
<rect x="29" y="185.2" width="84" height="11" fill="#000"/>
<text x="29" y="193.7" font-size="10" fill="#fff" letter-spacing="-0.25" font-family="Liberation Sans">#41914959 sell stop</text>
<rect x="29" y="190.5" width="84" height="11" fill="#000"/>
<text x="29" y="199" font-size="10" fill="#fff" letter-spacing="-0.25" font-family="Liberation Sans">#41914963 sell stop</text>
<rect x="29" y="195.5" width="84" height="11" fill="#000"/>
<text x="29" y="204" font-size="10" fill="#fff" letter-spacing="-0.25" font-family="Liberation Sans">#41914967 sell stop</text>
<rect x="29" y="202.8" width="84" height="11" fill="#000"/>
<text x="29" y="211.3" font-size="10" fill="#fff" letter-spacing="-0.25" font-family="Liberation Sans">#41914965 sell stop</text>
<path d="M24.5 167V172M26.5 167V171M28.5 166V172M27 170.5h1M30.5 164V174M31 170.5h1M32.5 165V175M34.5 166V169M33 166.5h1M36.5 163V173M38.5 162V174M39 166.5h1M40.5 162V174M39 173.5h1M42.5 166V173M44.5 166V176M46.5 172V175M48.5 172V177M49 175.5h1M50.5 174V178M51 177.5h1M52.5 174V181M51 177.5h1M54.5 174V182M56.5 174V181M58.5 176V179M60.5 175V182M62.5 177V181M61 179.5h1M64.5 178V185M65 178.5h1M66.5 179V187M67 186.5h1M68.5 179V189M70.5 181V188M72.5 184V191M73 186.5h1M74.5 194V204M75 198.5h1M76.5 196V201M75 199.5h1M78.5 194V202M79 197.5h1M80.5 195V198M81 196.5h1M82.5 191V199M81 193.5h1M84.5 191V198M83 194.5h1M86.5 189V194M85 190.5h1M88.5 187V192M90.5 183V191M92.5 182V187M91 185.5h1M93 184.5h1M94.5 180V184M93 184.5h1M95 183.5h1M96.5 177V184M95 183.5h1M97 181.5h1M98.5 174V184M97 182.5h1M99 178.5h1M100.5 174V184M101 178.5h1M102.5 172V184M104.5 175V185M106.5 180V183M108.5 178V185M110.5 179V186M109 181.5h1M111 185.5h1M112.5 180V186M114.5 181V184M115 183.5h1M116.5 180V183M118.5 181V185M117 182.5h1M120.5 182V185M121 183.5h1M122.5 181V186M121 183.5h1M124.5 179V182M126.5 173V180M125 177.5h1M128.5 167V175M129 168.5h1M130.5 166V170M129 168.5h1M131 169.5h1M132.5 163V175M131 167.5h1M134.5 167V174M135 170.5h1M136.5 169V172M138.5 168V173M137 170.5h1M140.5 171V174M142.5 167V179M143 178.5h1M144.5 172V175M143 174.5h1M146.5 167V177M145 168.5h1M147 170.5h1M148.5 169V176M147 173.5h1M150.5 167V177M152.5 168V172M154.5 159V165M155 159.5h1M156.5 147V157M155 148.5h1M158.5 150V154M160.5 152V159M161 157.5h1M162.5 153V159M161 158.5h1M164.5 152V160M165 152.5h1M166.5 156V162M168.5 158V165M170.5 156V166M172.5 156V166M174.5 156V168M173 161.5h1M176.5 156V168M178.5 157V169M180.5 160V166M179 164.5h1M182.5 161V168M184.5 160V167M185 162.5h1M186.5 160V166M185 162.5h1M187 164.5h1M188.5 154V166M189 161.5h1M190.5 158V161M192.5 154V164M194.5 152V158M196.5 150V154M198.5 144V150M199 148.5h1M200.5 142V145M201 145.5h1M202.5 134V144M201 142.5h1M203 136.5h1M204.5 136V139M206.5 134V137M205 135.5h1M208.5 125V137M210.5 124V131M209 127.5h1M212.5 124V131M211 131.5h1M214.5 123V135M213 131.5h1M216.5 126V133M215 133.5h1M217 130.5h1M218.5 124V136M219 127.5h1M220.5 128V133M222.5 125V133M224.5 125V130M226.5 123V133M228.5 124V131M230.5 124V129M232.5 123V131M231 125.5h1M233 124.5h1M234.5 123V130M233 129.5h1M236.5 121V131M238.5 119V131M239 122.5h1M240.5 123V127M242.5 125V131M244.5 130V135M245 132.5h1M246.5 133V138M247 134.5h1M248.5 137V140M250.5 132V142M249 141.5h1M251 137.5h1M252.5 132V139M254.5 130V136M255 134.5h1M256.5 126V138M255 133.5h1M257 135.5h1M258.5 124V136M257 127.5h1M260.5 121V133M262.5 121V129M264.5 122V125M265 125.5h1M266.5 121V126M265 125.5h1M268.5 119V123M269 122.5h1M270.5 121V127M272.5 123V127M274.5 125V130M276.5 122V132M275 127.5h1M277 127.5h1M278.5 123V135M277 134.5h1M280.5 126V134M282.5 130V133M283 131.5h1M284.5 132V138M283 132.5h1M286.5 135V138M285 137.5h1M288.5 136V139M289 136.5h1M290.5 136V142M292.5 134V140M291 136.5h1M293 136.5h1M294.5 134V138M296.5 129V141M298.5 132V139M297 135.5h1M300.5 134V137M302.5 134V137M301 136.5h1M303 136.5h1M304.5 133V139M306.5 129V141M305 134.5h1M308.5 130V140M307 136.5h1M310.5 130V137M309 133.5h1M312.5 129V139M311 137.5h1M314.5 131V139M316.5 132V138M318.5 132V137M320.5 131V141M321 132.5h1M322.5 131V143M321 139.5h1M324.5 135V138M326.5 132V140M327 134.5h1M328.5 136V140M327 137.5h1M330.5 136V142M329 136.5h1M331 140.5h1M332.5 138V141M331 139.5h1M333 140.5h1M334.5 135V143M336.5 136V141M337 140.5h1M338.5 137V141M337 141.5h1M339 139.5h1M340.5 136V140M342.5 136V144M344.5 137V144M346.5 138V144M345 138.5h1M347 142.5h1M348.5 137V143M349 141.5h1M350.5 136V146M351 141.5h1M352.5 138V141M351 139.5h1M353 139.5h1M354.5 135V141M356.5 134V146M358.5 137V143M360.5 134V144M362.5 136V139M361 136.5h1M364.5 135V138M365 137.5h1M366.5 130V140M365 135.5h1M367 138.5h1M368.5 127V139M367 132.5h1M369 129.5h1M370.5 131V138M372.5 131V139M374.5 129V141M376.5 130V137M375 133.5h1M378.5 130V137M380.5 131V134M379 133.5h1M382.5 129V132M381 132.5h1M384.5 127V135M385 128.5h1M386.5 125V135M388.5 129V133M389 132.5h1M390.5 128V135M389 128.5h1M391 135.5h1M392.5 128V134M394.5 128V138M396.5 131V138M395 131.5h1M398.5 127V139M400.5 130V140M402.5 133V137M404.5 131V141M406.5 132V139M408.5 131V139M407 132.5h1M410.5 129V141M412.5 133V137M413 136.5h1M414.5 135V139M415 135.5h1M416.5 132V144M415 143.5h1M417 136.5h1M418.5 136V144M417 137.5h1M419 138.5h1M420.5 137V144M419 140.5h1M422.5 135V147M421 138.5h1M423 142.5h1M424.5 140V144M426.5 136V143M428.5 133V145M429 140.5h1M430.5 132V144M431 143.5h1M432.5 131V143M434.5 134V137M433 136.5h1M435 136.5h1M436.5 133V138M435 137.5h1M438.5 133V137M439 133.5h1M440.5 132V136M439 133.5h1M442.5 134V138M443 136.5h1M444.5 130V142M443 134.5h1M446.5 133V141M448.5 131V143M450.5 132V144M449 137.5h1M452.5 136V143M454.5 136V141M453 140.5h1M455 139.5h1M456.5 135V140M455 135.5h1M458.5 135V143M460.5 132V144M459 139.5h1M461 137.5h1M462.5 135V143M464.5 136V144M466.5 136V143M465 137.5h1M468.5 137V145M469 140.5h1M470.5 138V143M472.5 136V148M473 141.5h1M474.5 139V146M473 145.5h1M476.5 140V148M477 144.5h1M478.5 138V148M480.5 139V147M482.5 142V146M483 143.5h1M484.5 143V146M483 143.5h1M485 143.5h1M486.5 139V147M488.5 142V148M490.5 139V149M489 141.5h1M491 145.5h1M492.5 142V147M493 142.5h1M494.5 143V146M496.5 143V148M498.5 143V150M499 150.5h1M500.5 146V150M499 149.5h1M502.5 146V149M501 149.5h1M504.5 142V150M506.5 140V148M505 143.5h1M507 145.5h1M508.5 139V145M509 140.5h1M510.5 136V146M509 146.5h1M512.5 138V144M513 141.5h1M514.5 136V144M516.5 137V143M518.5 137V143M520.5 135V139M521 139.5h1M522.5 132V138M521 137.5h1M523 134.5h1M524.5 134V137M523 135.5h1M525 135.5h1M526.5 133V136M527 133.5h1M528.5 128V140M527 130.5h1M530.5 129V137M531 135.5h1M532.5 129V139M534.5 133V136M533 135.5h1M536.5 131V136M535 136.5h1M538.5 128V140M537 140.5h1M540.5 129V139M539 136.5h1M542.5 131V136M544.5 129V141M545 133.5h1M546.5 135V139M548.5 135V142M550.5 136V143M552.5 137V145M554.5 137V144M556.5 138V142M555 138.5h1M558.5 134V144M560.5 135V143M559 136.5h1M562.5 136V141M561 138.5h1M563 138.5h1M564.5 134V142M565 136.5h1M566.5 134V141M565 141.5h1M568.5 134V141M570.5 133V139M571 135.5h1M572.5 132V140M573 137.5h1M574.5 134V140M575 134.5h1M576.5 135V140M575 138.5h1M577 137.5h1M578.5 130V142M580.5 132V142M582.5 132V139M584.5 132V137M585 136.5h1M586.5 131V137M588.5 133V136M590.5 133V141M589 135.5h1M592.5 133V145M593 134.5h1M594.5 136V141M593 136.5h1M595 139.5h1M596.5 136V140M598.5 133V145M597 141.5h1M599 136.5h1M600.5 138V143M599 139.5h1M602.5 137V145M601 144.5h1M604.5 137V149M606.5 137V149M608.5 141V147M607 143.5h1M610.5 144V148M612.5 145V148M614.5 141V153M615 150.5h1M616.5 146V152M618.5 145V149M617 147.5h1M620.5 143V148M621 148.5h1M622.5 139V147M623 140.5h1M624.5 138V144M626.5 137V140M627 139.5h1M628.5 138V141M627 140.5h1M629 139.5h1M630.5 135V142M631 139.5h1M632.5 136V139M631 138.5h1M633 136.5h1M634.5 134V139M635 137.5h1M636.5 134V137M638.5 132V136M640.5 129V139M641 138.5h1M642.5 126V138M643 132.5h1M644.5 127V135M643 129.5h1M646.5 129V135M648.5 132V135M649 132.5h1M650.5 130V135M652.5 129V139M653 133.5h1M654.5 128V138M656.5 131V137M655 136.5h1M658.5 129V139M659 136.5h1M660.5 132V142M662.5 135V147M664.5 144V147M663 147.5h1M666.5 147V152M668.5 149V153M670.5 151V156M672.5 148V154M674.5 144V156M675 151.5h1M676.5 145V153M675 149.5h1M678.5 145V149M677 147.5h1M680.5 143V151M679 151.5h1M681 146.5h1M682.5 142V148M684.5 140V147M685 141.5h1M686.5 140V144M687 141.5h1M688.5 137V143M690.5 139V143M691 141.5h1M692.5 139V146M694.5 141V147M693 145.5h1M695 146.5h1M696.5 141V149M698.5 144V148M699 145.5h1M700.5 145V150M699 145.5h1M702.5 147V151M703 148.5h1M704.5 145V157M705 145.5h1M706.5 149V157M708.5 151V157M710.5 151V159M712.5 150V162M713 151.5h1M714.5 154V160M715 159.5h1M716.5 152V159M715 154.5h1M717 153.5h1M718.5 153V156M719 154.5h1M720.5 146V158M719 152.5h1M721 152.5h1M722.5 150V154M721 153.5h1M724.5 148V152M723 151.5h1M725 149.5h1M726.5 149V152M725 152.5h1M728.5 144V156M730.5 148V151M732.5 148V151M731 150.5h1M733 151.5h1M734.5 144V154M735 151.5h1M736.5 145V152M735 150.5h1M738.5 142V152M737 151.5h1M740.5 141V149M742.5 142V146M741 143.5h1M743 144.5h1M744.5 140V150M746.5 143V146M748.5 138V150M750.5 136V148M752.5 140V146M754.5 141V145M756.5 141V146M755 142.5h1M757 144.5h1M758.5 143V146M760.5 143V149M762.5 143V149M764.5 140V152M763 147.5h1M766.5 144V151M765 147.5h1M768.5 142V154M767 143.5h1M770.5 147V151M769 147.5h1M771 148.5h1M772.5 145V153M773 151.5h1M774.5 150V153M773 151.5h1M776.5 150V157M777 155.5h1M778.5 154V164M777 159.5h1M780.5 160V170M782.5 170V174M783 171.5h1M784.5 175V180M786.5 178V181M788.5 177V181M789 178.5h1M790.5 173V183M791 177.5h1M792.5 173V179M794.5 171V181M796.5 173V179M798.5 172V177M799 174.5h1M800.5 167V179M801 177.5h1M802.5 169V179M804.5 170V174M803 173.5h1M806.5 169V177M805 176.5h1M808.5 168V178M807 171.5h1M809 177.5h1M810.5 168V175M811 173.5h1M812.5 167V173M813 169.5h1M814.5 167V174M816.5 169V173M818.5 163V173M819 171.5h1M820.5 165V172M819 167.5h1M822.5 163V168M824.5 159V169M823 162.5h1M826.5 157V169M825 167.5h1M827 164.5h1M828.5 162V165M830.5 158V168M829 167.5h1M832.5 161V171M834.5 162V169M836.5 164V168M838.5 164V170M840.5 162V172M839 163.5h1M842.5 164V170M843 167.5h1M844.5 167V171M843 171.5h1M846.5 167V175M845 174.5h1M848.5 170V173M847 170.5h1M850.5 170V176M849 171.5h1M852.5 166V178M853 169.5h1M854.5 169V176M856.5 171V177M858.5 171V175M859 173.5h1M860.5 169V175M862.5 169V177M864.5 171V174M863 172.5h1M866.5 166V176M868.5 169V174M867 174.5h1M870.5 168V173M872.5 167V177M871 170.5h1M874.5 169V174M873 173.5h1M875 174.5h1M876.5 166V174M878.5 165V169M880.5 165V168M881 165.5h1M882.5 162V165M884.5 157V169M886.5 157V167M885 160.5h1M888.5 158V162M887 160.5h1M890.5 157V162M891 160.5h1M892.5 157V161M894.5 155V163M895 159.5h1M896.5 152V164M898.5 154V159M897 158.5h1M900.5 153V159M899 159.5h1M902.5 151V161M904.5 150V160M906.5 150V158M907 158.5h1M908.5 150V157M909 157.5h1M910.5 147V159M909 148.5h1M912.5 146V158M911 155.5h1M914.5 148V155M913 152.5h1M915 148.5h1M916.5 145V155M918.5 149V152M917 149.5h1M920.5 148V152M919 151.5h1M922.5 147V151M924.5 145V153M925 150.5h1M926.5 144V151M928.5 144V147M930.5 140V146M932.5 137V147M931 145.5h1M933 146.5h1M934.5 141V146M935 143.5h1M936.5 141V145M935 142.5h1M938.5 138V146M937 144.5h1M939 140.5h1M940.5 139V143M942.5 137V142M944.5 135V143M945 136.5h1M946.5 134V146M945 144.5h1M948.5 136V141M949 139.5h1M950.5 136V140M951 140.5h1M952.5 139V145M951 145.5h1M953 140.5h1M954.5 142V146M956.5 141V149M958.5 144V149M959 148.5h1M960.5 148V151M962.5 148V155M961 152.5h1M964.5 153V157M966.5 150V157M968.5 150V157M970.5 153V157M971 155.5h1M972.5 151V156M971 151.5h1M974.5 148V154M973 153.5h1M975 151.5h1M976.5 147V152M975 152.5h1M978.5 146V153M980.5 146V156M979 155.5h1M981 151.5h1M982.5 149V154M984.5 146V154M983 148.5h1M986.5 147V150M985 148.5h1M988.5 147V152M990.5 144V154M991 146.5h1M992.5 145V152M991 151.5h1M993 150.5h1M994.5 144V148M993 147.5h1M996.5 144V147M998.5 142V154M997 146.5h1M1000.5 144V152M999 148.5h1M1002.5 143V155M1004.5 149V152M1006.5 149V154M1008.5 150V153M1007 151.5h1M1009 152.5h1M1010.5 147V154M1009 153.5h1M1011 150.5h1M1012.5 144V156M1011 148.5h1M1013 149.5h1M1014.5 148V156M1013 150.5h1M1015 151.5h1M1016.5 152V155M1018.5 148V158M1020.5 145V148M1022.5 137V143M1021 138.5h1M1023 143.5h1M1024.5 129V139M1023 139.5h1M1026.5 127V130M1027 128.5h1M1028.5 124V134M1029 131.5h1M1030.5 128V132M1029 128.5h1M1032.5 129V135M1034.5 127V139M1033 130.5h1M1036.5 130V138M1038.5 132V138M1040.5 132V139M1042.5 131V143M1041 141.5h1M1044.5 132V144M1046.5 135V142M1045 142.5h1M1047 136.5h1M1048.5 135V147M1050.5 141V149M1049 148.5h1M1052.5 142V154M1051 151.5h1M1054.5 148V156M1056.5 151V163M1057 153.5h1M1058.5 158V164M1057 163.5h1M1060.5 155V167M1059 164.5h1M1062.5 159V163M1064.5 159V165M1063 159.5h1M1065 165.5h1M1066.5 161V164M1067 163.5h1M1068.5 163V166M1070.5 161V171M1069 167.5h1M1071 167.5h1M1072.5 162V170M1071 164.5h1M1073 165.5h1M1074.5 164V168M1076.5 160V172M1078.5 161V169M1077 166.5h1M1080.5 163V170M1082.5 161V173M1081 167.5h1M1084.5 164V168M1086.5 163V170M1088.5 162V167M1087 163.5h1M1090.5 161V171M1091 167.5h1M1092.5 164V170M1094.5 162V170M1096.5 161V171M1095 171.5h1M1098.5 161V167M1099 161.5h1M1100.5 163V166M1101 163.5h1M1102.5 158V170M1101 165.5h1M1104.5 158V168M1106.5 160V165M1107 164.5h1M1108.5 159V166M1107 162.5h1M1110.5 159V163M1112.5 160V167M1114.5 157V169M1116.5 160V167M1118.5 164V167M1117 165.5h1M1120.5 160V172M1121 166.5h1M1122.5 164V170M1123 167.5h1M1124.5 167V171M1126.5 165V173M1125 171.5h1M1128.5 164V171M1130.5 168V171M1132.5 168V172M1131 170.5h1M1134.5 167V171M1136.5 166V170M1137 167.5h1M1138.5 162V172M1137 169.5h1M1139 166.5h1M1140.5 158V170M1139 166.5h1M1142.5 158V170M1144.5 160V168M1146.5 155V167M1147 161.5h1M1148.5 162V165M1147 164.5h1M1149 165.5h1M1150.5 162V167M1151 164.5h1M1152.5 163V170M1151 167.5h1M1153 169.5h1M1154.5 167V170M1156.5 168V174M1157 173.5h1M1158.5 170V174M1160.5 166V178M1161 171.5h1M1162.5 170V174M1164.5 164V174M1165 166.5h1M1166.5 165V170M1168.5 162V167M1167 167.5h1M1170.5 163V166M1169 165.5h1M1172.5 157V169M1171 167.5h1M1174.5 159V162M1176.5 157V160M1178.5 152V157M1179 154.5h1M1180.5 152V156M1179 153.5h1M1182.5 150V153M1181 152.5h1M1184.5 147V154M1186.5 151V158M1188.5 154V159M1187 157.5h1M1190.5 157V162M1192.5 156V168M1191 158.5h1M1194.5 158V170M1195 165.5h1M1196.5 161V171M1195 164.5h1M1197 163.5h1M1198.5 164V172M1200.5 167V177M1202.5 169V181M1203 178.5h1M1204.5 174V182M1203 177.5h1M1205 182.5h1M1206.5 179V183M1205 183.5h1M1207 181.5h1M1208.5 176V182M1210.5 175V181M1212.5 172V179M1211 174.5h1M1214.5 171V178M1215 173.5h1M1216.5 167V179M1218.5 169V177M1220.5 168V178M1221 169.5h1M1222.5 168V175M1224.5 163V175M1226.5 166V170M1225 170.5h1M1228.5 163V170M1229 164.5h1M1230.5 162V169M1232.5 162V170M1231 163.5h1M1234.5 162V169M1236.5 157V169M1235 168.5h1M1238.5 158V168M1239 163.5h1M1240.5 157V167M1241 160.5h1M1242.5 157V163M1243 161.5h1M1244.5 155V162M1246.5 155V158M1248.5 154V158M1249 154.5h1M1250.5 152V158M1249 158.5h1M1252.5 150V157M1251 152.5h1M1254.5 154V160M1253 157.5h1M1256.5 156V161M1258.5 156V166M1259 162.5h1M1260.5 159V166M1262.5 163V166M1261 163.5h1M1263 163.5h1M1264.5 160V167M1266.5 161V167M1265 164.5h1M1268.5 163V167M1270.5 163V167M1272.5 164V169M1274.5 164V171M1275 165.5h1M1276.5 166V172M1278.5 168V171M1279 171.5h1M1280.5 160V172M1282.5 162V168M1284.5 158V163M1286.5 156V159M1285 156.5h1M1287 157.5h1M1288.5 152V160M1290.5 153V156M1292.5 146V158M1291 154.5h1M1294.5 147V153M1293 150.5h1M1296.5 146V153M1298.5 147V150M1297 148.5h1M1300.5 146V149M1301 148.5h1M1302.5 143V150M1304.5 145V151M1306.5 143V149M1307 147.5h1M1308.5 143V151M1310.5 145V149M1309 146.5h1M1312.5 143V148M1311 146.5h1M1314.5 140V150M1316.5 138V148M1317 140.5h1M1318.5 138V142M1319 140.5h1M1320.5 131V143M1319 132.5h1M1321 131.5h1M1322.5 129V139M1324.5 128V138M1325 134.5h1M1326.5 130V138M1325 133.5h1M1328.5 132V135M1327 132.5h1M1330.5 133V138M1332.5 136V140M1334.5 134V141M1335 140.5h1M1336.5 135V142M1337 142.5h1M1338.5 137V141M1339 138.5h1M1340.5 137V143M1341 142.5h1M1342.5 138V142M1344.5 136V143M1346.5 137V142M1347 140.5h1M1348.5 136V142M1347 140.5h1M1350.5 137V141M1349 140.5h1M1351 140.5h1M1352.5 134V146M1354.5 139V146M1355 141.5h1M1356.5 142V148M1355 144.5h1M1358.5 143V150M1360.5 145V150M1362.5 144V154M1364.5 145V153M1363 152.5h1M1366.5 141V153M1365 145.5h1M1368.5 143V150M1369 144.5h1M1370.5 141V149M1372.5 140V146M1371 143.5h1M1374.5 141V146M1376.5 142V145M1377 144.5h1M1378.5 138V150M1380.5 140V150M1382.5 140V152M1381 146.5h1M1383 140.5h1M1384.5 144V152M1383 151.5h1M1386.5 148V154M1388.5 148V154M1387 150.5h1M1389 148.5h1M1390.5 151V157M1389 156.5h1M1392.5 152V157M1394.5 151V159M1395 153.5h1M1396.5 148V154M1395 152.5h1M1397 151.5h1M1398.5 144V150M1399 144.5h1M1400.5 138V144M1399 144.5h1M1402.5 138V145M1401 145.5h1M1403 139.5h1M1404.5 141V145M1403 141.5h1M1406.5 143V147M1407 147.5h1M1408.5 142V148M1409 145.5h1M1410.5 144V150M1411 148.5h1M1412.5 144V150M1414.5 145V150M1413 146.5h1M1416.5 148V152M1418.5 148V152M1420.5 146V153M1422.5 148V156M1424.5 149V153M1426.5 148V152M1428.5 145V157M1430.5 151V155M1429 151.5h1M1431 153.5h1M1432.5 149V154M1434.5 148V155M1436.5 147V159M1438.5 152V159M1437 155.5h1M1439 157.5h1M1440.5 151V159M1442.5 153V158M1441 155.5h1M1444.5 154V159M1443 157.5h1M1446.5 156V164M1448.5 156V166M1447 165.5h1M1449 158.5h1M1450.5 158V162M1452.5 154V164M1451 162.5h1M1453 155.5h1M1454.5 155V162M1453 158.5h1M1456.5 158V161M1458.5 157V164M1457 160.5h1M1460.5 155V163M1459 156.5h1M1461 162.5h1M1462.5 154V164M1461 160.5h1M1463 164.5h1M1464.5 156V164M1463 156.5h1M1466.5 156V166M1468.5 157V167M1467 158.5h1M1470.5 161V164M1469 162.5h1M1472.5 159V167M1471 163.5h1M1474.5 162V169M1473 167.5h1M1475 164.5h1M1476.5 163V171M1478.5 164V170M1477 170.5h1M1480.5 166V169M1479 168.5h1M1482.5 164V172M1484.5 163V173M1486.5 161V171M1485 169.5h1M1488.5 163V168M1489 165.5h1M1490.5 161V173M1492.5 161V168M1493 166.5h1M1494.5 161V171M1493 165.5h1M1495 162.5h1M1496.5 163V170M1495 164.5h1M1497 169.5h1M1498.5 162V174M1497 164.5h1M1499 173.5h1" stroke="#00ff00" stroke-width="1" fill="none" shape-rendering="crispEdges"/>
<polyline points="23,147 95,143 200,135" fill="none" stroke="#ff0000" stroke-width="2.2" stroke-dasharray="3 3"/>
<polyline points="23,150 80,146" fill="none" stroke="#ff0000" stroke-width="1.5" stroke-dasharray="3 3"/>
<path d="M200 134.5 L207 129 L207 140 Z" fill="#ff0000" stroke="#fff" stroke-width="1"/>
<line x1="1515.5" y1="128" x2="1515.5" y2="188" stroke="#8b0000" stroke-width="1"/>
<line x1="1515.5" y1="158" x2="1515.5" y2="172" stroke="#ff0000" stroke-width="2"/>
<path d="M1498 114 L1506 114 L1502 118 Z" fill="#8080a8"/>
<rect x="22.5" y="113.5" width="1852" height="101.0" fill="none" stroke="#fff" stroke-width="1"/>
<rect x="22.5" y="216.5" width="1852" height="145.0" fill="none" stroke="#fff" stroke-width="1"/>
<rect x="22.5" y="363.5" width="1852" height="140.0" fill="none" stroke="#fff" stroke-width="1"/>
<rect x="22.5" y="505.5" width="1852" height="127.0" fill="none" stroke="#fff" stroke-width="1"/>
<rect x="22.5" y="634.5" width="1852" height="6" fill="none" stroke="#fff" stroke-width="1"/>
<line x1="397.5" y1="114" x2="397.5" y2="632" stroke="#ffff00" stroke-width="1"/>
<line x1="415.5" y1="114" x2="415.5" y2="632" stroke="#00ff00" stroke-width="1"/>
<line x1="457.5" y1="114" x2="457.5" y2="632" stroke="#ff0000" stroke-width="1"/>
<line x1="445.5" y1="114" x2="445.5" y2="640" stroke="#fff" stroke-width="1" stroke-dasharray="3 3"/>
<line x1="1021.5" y1="114" x2="1021.5" y2="640" stroke="#fff" stroke-width="1" stroke-dasharray="3 3"/>
<line x1="1597.5" y1="114" x2="1597.5" y2="640" stroke="#fff" stroke-width="1" stroke-dasharray="3 3"/>
<line x1="23" y1="247.5" x2="1874" y2="247.5" stroke="#c8c8c8" stroke-width="1" stroke-dasharray="3 3"/>
<line x1="23" y1="374.5" x2="1874" y2="374.5" stroke="#c8c8c8" stroke-width="1" stroke-dasharray="3 3"/>
<line x1="23" y1="524.5" x2="1874" y2="524.5" stroke="#c8c8c8" stroke-width="1" stroke-dasharray="3 3"/>
<line x1="397" y1="247.5" x2="457" y2="247.5" stroke="#ffff00" stroke-width="1" shape-rendering="crispEdges"/>
<line x1="397" y1="374.5" x2="415" y2="374.5" stroke="#ffff00" stroke-width="1" shape-rendering="crispEdges"/>
<defs><clipPath id="c2"><rect x="23" y="217" width="1851" height="144"/></clipPath><clipPath id="c3"><rect x="23" y="364" width="1851" height="139"/></clipPath><clipPath id="c4"><rect x="23" y="506" width="1851" height="126"/></clipPath></defs>
<g clip-path="url(#c2)">
<polyline points="457.0,247.6 460.0,249.0 463.0,249.8 466.0,250.3 469.0,251.6 472.0,252.5 475.0,253.5 478.0,255.2 481.0,256.0 484.0,255.8 487.0,255.4 490.0,255.7 493.0,255.1 496.0,255.2 499.0,255.4 502.0,256.0 505.0,255.5 508.0,256.0 511.0,256.2 514.0,256.6 517.0,255.6 520.0,255.6 523.0,256.9 526.0,256.3 529.0,256.5 532.0,255.8 535.0,257.1 538.0,256.8 541.0,256.1 544.0,257.6 547.0,255.1 550.0,257.5 553.0,255.9 556.0,256.8 559.0,259.7 562.0,259.2 565.0,259.8 568.0,259.3 571.0,260.2 574.0,262.3 577.0,264.5 580.0,263.3 583.0,263.8 586.0,266.1 589.0,264.0 592.0,264.2 595.0,267.9 598.0,267.3 601.0,266.6 604.0,265.7 607.0,264.6 610.0,266.0 613.0,264.4 616.0,262.0 619.0,262.7 622.0,259.9 625.0,262.0 628.0,259.8 631.0,263.8 634.0,262.6 637.0,261.2 640.0,265.7 643.0,270.7 646.0,278.5 649.0,281.8 652.0,280.3 655.0,277.0 658.0,272.8 661.0,267.8 664.0,262.0 667.0,259.9 670.0,257.1 673.0,257.3 676.0,257.2 679.0,260.3 682.0,260.0 685.0,250.4 688.0,258.5 691.0,256.6 694.0,257.2 697.0,258.9 700.0,259.3 703.0,251.7 706.0,262.0 709.0,258.4 712.0,260.6 715.0,258.3 718.0,256.4 721.0,256.5 724.0,257.4 727.0,254.6 730.0,255.8 733.0,254.4 736.0,253.6 739.0,254.0 742.0,246.3 745.0,249.1 748.0,250.9 751.0,252.8 754.0,247.9 757.0,248.7 760.0,244.3 763.0,247.2 766.0,249.3 769.0,248.4 772.0,246.8 775.0,247.7 778.0,246.1 781.0,245.6 784.0,246.7 787.0,247.2 790.0,249.4 793.0,245.7 796.0,244.2 799.0,245.1 802.0,247.0 805.0,247.0 808.0,247.1 811.0,244.2 814.0,244.8 817.0,247.2 820.0,241.3 823.0,244.5 826.0,244.9 829.0,248.4 832.0,245.5 835.0,245.9 838.0,247.2 841.0,245.3 844.0,245.1 847.0,247.9 850.0,246.2 853.0,248.4 856.0,249.4 859.0,250.5 862.0,250.0 865.0,246.8 868.0,248.9 871.0,247.4 874.0,256.1 877.0,249.0 880.0,248.8 883.0,247.9 886.0,246.1 889.0,250.5 892.0,248.2 895.0,245.9 898.0,250.1 901.0,247.1 904.0,248.4 907.0,242.3 910.0,245.6 913.0,247.1 916.0,246.4 919.0,246.8 922.0,244.7 925.0,245.8 928.0,244.4 931.0,244.5 934.0,245.2 937.0,241.5 940.0,244.5 943.0,241.8 946.0,243.3 949.0,240.8 952.0,240.9 955.0,240.3 958.0,243.2 961.0,242.6 964.0,241.0 967.0,240.3 970.0,240.8 973.0,240.7 976.0,243.5 979.0,240.7 982.0,239.8 985.0,243.5 988.0,240.5 991.0,238.4 994.0,242.8 997.0,237.5 1000.0,238.0 1003.0,243.0 1006.0,241.8 1009.0,242.5 1012.0,243.5 1015.0,246.0 1018.0,241.2 1021.0,246.3 1024.0,245.4 1027.0,245.8 1030.0,245.6 1033.0,247.3 1036.0,251.1 1039.0,248.1 1042.0,249.9 1045.0,246.6 1048.0,247.3 1051.0,250.7 1054.0,247.7 1057.0,247.5 1060.0,248.5 1063.0,247.9 1066.0,250.4 1069.0,247.7 1072.0,249.5 1075.0,249.5 1078.0,246.9 1081.0,249.7 1084.0,252.6 1087.0,247.4 1090.0,249.1 1093.0,249.7 1096.0,244.8 1099.0,247.3 1102.0,245.3 1105.0,246.3 1108.0,238.7 1111.0,243.8 1114.0,245.5 1117.0,243.0 1120.0,237.8 1123.0,244.8 1126.0,243.6 1129.0,245.2 1132.0,245.2 1135.0,243.5 1138.0,244.4 1141.0,243.7 1144.0,244.7 1147.0,243.3 1150.0,241.5 1153.0,240.2 1156.0,239.2 1159.0,237.7 1162.0,239.2 1165.0,237.3 1168.0,237.6 1171.0,237.5 1174.0,235.5 1177.0,237.3 1180.0,235.3 1183.0,229.0 1186.0,232.2 1189.0,231.8 1192.0,231.0 1195.0,230.0 1198.0,230.9 1201.0,234.1 1204.0,232.5 1207.0,229.9 1210.0,230.5 1213.0,247.3 1216.0,255.3 1219.0,251.2 1222.0,256.8 1225.0,252.1 1228.0,256.3 1231.0,264.7 1234.0,268.3 1237.0,265.6 1240.0,280.5 1243.0,290.8 1246.0,284.1 1249.0,284.0 1252.0,280.9 1255.0,275.7 1258.0,272.7 1261.0,271.4 1264.0,265.7 1267.0,263.9 1270.0,257.8 1273.0,257.4 1276.0,260.8 1279.0,265.7 1282.0,275.4 1285.0,279.0 1288.0,276.9 1291.0,274.9 1294.0,274.5 1297.0,269.1 1300.0,283.5 1303.0,297.9 1306.0,311.2 1309.0,328.2 1312.0,330.7 1315.0,325.3 1318.0,325.5 1321.0,318.1 1324.0,315.1 1327.0,326.1 1330.0,326.7 1333.0,333.3 1336.0,335.8 1339.0,339.5 1342.0,341.0 1345.0,329.6 1348.0,329.6 1351.0,335.8 1354.0,340.6 1357.0,348.4 1360.0,351.7 1363.0,349.5 1366.0,347.5 1369.0,342.1 1372.0,336.7 1375.0,332.6 1378.0,331.4 1381.0,327.7 1384.0,325.6 1387.0,319.0 1390.0,324.3 1393.0,332.0 1396.0,334.3 1399.0,336.7 1402.0,334.7 1405.0,337.1 1408.0,340.3 1411.0,339.5 1414.0,338.7 1417.0,338.4 1420.0,340.6 1423.0,338.3 1426.0,338.7 1429.0,339.0 1432.0,338.1 1435.0,342.5 1438.0,344.0 1441.0,341.6 1444.0,344.5 1447.0,341.7 1450.0,343.0 1453.0,345.2 1456.0,346.6 1459.0,345.2 1462.0,343.8 1465.0,345.5 1468.0,343.7 1471.0,345.1 1474.0,348.5 1477.0,347.4 1480.0,349.0 1483.0,347.9 1486.0,351.1 1489.0,350.7 1492.0,352.6 1495.0,352.6" fill="none" stroke="#ff0000" stroke-width="1"/>
<polyline points="457.5,247.0 460.5,248.6 463.5,249.4 466.5,250.3 469.5,251.3 472.5,252.0 475.5,253.0 478.5,254.5 481.5,255.6 484.5,255.1 487.5,255.0 490.5,255.1 493.5,254.8 496.5,254.7 499.5,255.4 502.5,255.3 505.5,254.9 508.5,255.1 511.5,255.7 514.5,256.1 517.5,255.3 520.5,255.3 523.5,256.1 526.5,256.2 529.5,256.7 532.5,254.8 535.5,255.9 538.5,256.8 541.5,254.6 544.5,256.4 547.5,254.7 550.5,256.5 553.5,255.1 556.5,255.9 559.5,258.1 562.5,258.0 565.5,258.8 568.5,259.3 571.5,260.3 574.5,260.8 577.5,263.4 580.5,262.5 583.5,261.6 586.5,265.1 589.5,262.7 592.5,263.0 595.5,265.3 598.5,264.8 601.5,263.5 604.5,263.6 607.5,263.5 610.5,264.3 613.5,261.4 616.5,259.8 619.5,261.2 622.5,258.1 625.5,259.7 628.5,257.6 631.5,260.0 634.5,261.0 637.5,261.6 640.5,262.6 643.5,269.5 646.5,277.6 649.5,279.4 652.5,277.6 655.5,276.1 658.5,271.0 661.5,267.2 664.5,259.0 667.5,258.5 670.5,255.5 673.5,257.5 676.5,256.6 679.5,257.9 682.5,258.6 685.5,249.2 688.5,257.1 691.5,254.4 694.5,257.0 697.5,257.2 700.5,256.7 703.5,249.0 706.5,259.1 709.5,257.4 712.5,257.8 715.5,256.3 718.5,255.8 721.5,253.4 724.5,253.7 727.5,253.0 730.5,254.9 733.5,250.7 736.5,251.3 739.5,251.5 742.5,246.0 745.5,248.5 748.5,248.7 751.5,248.4 754.5,244.5 757.5,246.3 760.5,242.5 763.5,244.3 766.5,247.9 769.5,244.5 772.5,243.9 775.5,245.8 778.5,244.3 781.5,242.6 784.5,244.3 787.5,245.5 790.5,247.1 793.5,241.4 796.5,242.7 799.5,243.6 802.5,245.2 805.5,245.6 808.5,243.9 811.5,242.6 814.5,241.7 817.5,243.4 820.5,240.1 823.5,244.2 826.5,244.1 829.5,245.3 832.5,243.4 835.5,245.8 838.5,243.6 841.5,243.7 844.5,243.4 847.5,245.4 850.5,242.4 853.5,245.5 856.5,246.7 859.5,246.2 862.5,246.5 865.5,243.0 868.5,247.8 871.5,245.5 874.5,251.7 877.5,246.9 880.5,245.8 883.5,246.2 886.5,244.6 889.5,247.5 892.5,245.5 895.5,244.9 898.5,246.6 901.5,245.0 904.5,244.7 907.5,240.1 910.5,241.8 913.5,244.5 916.5,243.3 919.5,243.9 922.5,242.7 925.5,243.8 928.5,242.8 931.5,242.4 934.5,244.0 937.5,238.2 940.5,242.3 943.5,239.8 946.5,242.0 949.5,237.8 952.5,240.2 955.5,239.1 958.5,240.4 961.5,239.8 964.5,237.9 967.5,240.2 970.5,238.9 973.5,239.1 976.5,240.7 979.5,237.6 982.5,238.1 985.5,239.6 988.5,239.5 991.5,238.1 994.5,242.0 997.5,235.7 1000.5,237.9 1003.5,240.4 1006.5,240.4 1009.5,241.5 1012.5,242.8 1015.5,243.9 1018.5,239.5 1021.5,243.7 1024.5,244.1 1027.5,245.4 1030.5,243.8 1033.5,245.5 1036.5,249.2 1039.5,245.6 1042.5,246.3 1045.5,244.3 1048.5,244.2 1051.5,249.0 1054.5,243.7 1057.5,246.8 1060.5,247.5 1063.5,246.3 1066.5,248.3 1069.5,246.2 1072.5,247.8 1075.5,247.7 1078.5,245.7 1081.5,246.7 1084.5,250.9 1087.5,243.2 1090.5,246.5 1093.5,248.6 1096.5,243.1 1099.5,244.1 1102.5,244.5 1105.5,244.2 1108.5,235.7 1111.5,241.1 1114.5,243.8 1117.5,241.3 1120.5,236.8 1123.5,242.8 1126.5,243.7 1129.5,243.3 1132.5,243.6 1135.5,241.6 1138.5,242.9 1141.5,241.9 1144.5,241.1 1147.5,240.1 1150.5,241.0 1153.5,239.2 1156.5,236.1 1159.5,234.5 1162.5,236.9 1165.5,233.8 1168.5,236.1 1171.5,234.0 1174.5,234.9 1177.5,234.7 1180.5,232.6 1183.5,227.5 1186.5,229.9 1189.5,230.0 1192.5,229.9 1195.5,228.8 1198.5,230.4 1201.5,230.1 1204.5,231.1 1207.5,229.5 1210.5,227.4 1213.5,245.5 1216.5,251.3 1219.5,250.5 1222.5,253.2 1225.5,251.5 1228.5,254.3 1231.5,260.6 1234.5,265.4 1237.5,265.5 1240.5,276.9 1243.5,290.0 1246.5,282.9 1249.5,282.6 1252.5,279.8 1255.5,273.3 1258.5,270.0 1261.5,270.6 1264.5,264.1 1267.5,262.0 1270.5,255.2 1273.5,255.0 1276.5,258.4 1279.5,265.8 1282.5,273.5 1285.5,275.9 1288.5,276.1 1291.5,274.0 1294.5,272.9 1297.5,267.2 1300.5,281.9 1303.5,296.2 1306.5,309.7 1309.5,326.1 1312.5,328.3 1315.5,322.5 1318.5,324.1 1321.5,315.7 1324.5,312.5 1327.5,323.4 1330.5,325.0 1333.5,330.4 1336.5,334.0 1339.5,337.3 1342.5,338.2 1345.5,328.6 1348.5,327.8 1351.5,333.7 1354.5,337.7 1357.5,346.6 1360.5,350.6 1363.5,349.8 1366.5,346.1 1369.5,341.7 1372.5,336.9 1375.5,332.3 1378.5,329.7 1381.5,325.6 1384.5,323.1 1387.5,316.5 1390.5,321.9 1393.5,329.5 1396.5,333.0 1399.5,333.3 1402.5,333.7 1405.5,336.0 1408.5,337.8 1411.5,336.4 1414.5,336.7 1417.5,334.8 1420.5,338.4 1423.5,335.7 1426.5,338.3 1429.5,336.9 1432.5,338.3 1435.5,339.7 1438.5,340.0 1441.5,339.5 1444.5,340.8 1447.5,337.6 1450.5,340.4 1453.5,342.6 1456.5,343.3 1459.5,342.2 1462.5,340.5 1465.5,343.5 1468.5,342.9 1471.5,342.0 1474.5,345.2 1477.5,344.7 1480.5,347.4 1483.5,346.7 1486.5,349.9 1489.5,348.3 1492.5,350.1 1495.5,351.6" fill="none" stroke="#ffff00" stroke-width="1"/>
<polyline points="458.0,246.4 461.0,248.0 464.0,248.8 467.0,249.8 470.0,250.7 473.0,251.4 476.0,252.7 479.0,254.1 482.0,254.8 485.0,254.8 488.0,254.3 491.0,254.8 494.0,254.1 497.0,254.0 500.0,254.7 503.0,254.4 506.0,254.3 509.0,254.6 512.0,255.2 515.0,254.6 518.0,254.1 521.0,254.1 524.0,254.4 527.0,255.0 530.0,254.6 533.0,253.1 536.0,254.4 539.0,254.7 542.0,253.8 545.0,254.5 548.0,253.7 551.0,254.9 554.0,253.9 557.0,254.9 560.0,257.0 563.0,256.2 566.0,256.6 569.0,257.2 572.0,257.0 575.0,257.8 578.0,262.0 581.0,260.1 584.0,259.6 587.0,262.5 590.0,260.1 593.0,261.9 596.0,263.6 599.0,261.6 602.0,262.3 605.0,260.4 608.0,260.3 611.0,261.0 614.0,260.2 617.0,256.3 620.0,259.2 623.0,255.0 626.0,257.6 629.0,255.5 632.0,258.3 635.0,257.6 638.0,257.4 641.0,259.7 644.0,266.2 647.0,272.4 650.0,277.5 653.0,274.8 656.0,273.2 659.0,268.2 662.0,262.7 665.0,255.9 668.0,256.3 671.0,251.8 674.0,252.3 677.0,253.3 680.0,256.9 683.0,254.4 686.0,246.1 689.0,253.8 692.0,253.5 695.0,252.1 698.0,253.5 701.0,252.3 704.0,247.1 707.0,255.7 710.0,253.6 713.0,254.2 716.0,252.4 719.0,251.7 722.0,252.1 725.0,251.5 728.0,250.3 731.0,252.6 734.0,248.4 737.0,248.4 740.0,248.5 743.0,241.7 746.0,244.5 749.0,244.9 752.0,247.5 755.0,241.0 758.0,243.0 761.0,240.8 764.0,243.7 767.0,243.0 770.0,243.2 773.0,241.1 776.0,243.6 779.0,241.3 782.0,241.8 785.0,242.1 788.0,242.9 791.0,244.1 794.0,239.4 797.0,239.8 800.0,241.8 803.0,241.1 806.0,243.3 809.0,240.5 812.0,240.2 815.0,239.6 818.0,241.0 821.0,238.2 824.0,240.0 827.0,240.1 830.0,242.3 833.0,238.9 836.0,241.1 839.0,241.7 842.0,239.6 845.0,240.2 848.0,242.9 851.0,240.1 854.0,243.0 857.0,244.8 860.0,243.7 863.0,243.4 866.0,240.9 869.0,243.1 872.0,241.5 875.0,249.1 878.0,243.8 881.0,242.7 884.0,243.7 887.0,240.7 890.0,245.3 893.0,243.4 896.0,241.7 899.0,245.7 902.0,241.4 905.0,242.8 908.0,235.1 911.0,239.3 914.0,241.4 917.0,240.6 920.0,243.2 923.0,241.6 926.0,240.0 929.0,240.4 932.0,239.5 935.0,239.8 938.0,235.3 941.0,240.1 944.0,237.5 947.0,239.4 950.0,236.3 953.0,237.1 956.0,237.1 959.0,237.3 962.0,238.8 965.0,235.1 968.0,235.3 971.0,236.5 974.0,236.4 977.0,236.7 980.0,234.9 983.0,235.1 986.0,237.4 989.0,236.0 992.0,234.1 995.0,239.1 998.0,232.0 1001.0,234.3 1004.0,238.0 1007.0,235.9 1010.0,239.5 1013.0,238.3 1016.0,241.2 1019.0,238.6 1022.0,242.7 1025.0,241.9 1028.0,241.3 1031.0,240.6 1034.0,242.6 1037.0,246.2 1040.0,241.9 1043.0,243.4 1046.0,243.7 1049.0,243.2 1052.0,245.9 1055.0,243.0 1058.0,243.3 1061.0,244.5 1064.0,241.8 1067.0,245.6 1070.0,242.3 1073.0,244.3 1076.0,244.0 1079.0,242.9 1082.0,244.0 1085.0,247.6 1088.0,242.4 1091.0,243.8 1094.0,243.5 1097.0,239.0 1100.0,242.6 1103.0,240.7 1106.0,241.0 1109.0,234.1 1112.0,238.3 1115.0,240.7 1118.0,238.1 1121.0,232.0 1124.0,241.4 1127.0,239.2 1130.0,238.3 1133.0,241.7 1136.0,237.5 1139.0,237.9 1142.0,239.4 1145.0,239.2 1148.0,237.6 1151.0,237.7 1154.0,236.0 1157.0,233.2 1160.0,232.4 1163.0,234.3 1166.0,232.1 1169.0,232.0 1172.0,231.9 1175.0,231.6 1178.0,232.2 1181.0,230.9 1184.0,224.2 1187.0,228.1 1190.0,225.6 1193.0,226.9 1196.0,226.6 1199.0,226.1 1202.0,227.0 1205.0,227.8 1208.0,225.1 1211.0,225.5 1214.0,240.7 1217.0,250.6 1220.0,246.6 1223.0,250.3 1226.0,247.7 1229.0,252.7 1232.0,258.7 1235.0,262.7 1238.0,261.0 1241.0,275.7 1244.0,286.1 1247.0,280.4 1250.0,279.0 1253.0,276.8 1256.0,270.4 1259.0,266.2 1262.0,267.1 1265.0,262.6 1268.0,259.2 1271.0,253.1 1274.0,251.4 1277.0,255.8 1280.0,261.3 1283.0,269.5 1286.0,274.9 1289.0,272.2 1292.0,269.5 1295.0,269.9 1298.0,264.6 1301.0,278.3 1304.0,291.3 1307.0,305.8 1310.0,323.9 1313.0,325.1 1316.0,319.7 1319.0,321.2 1322.0,311.5 1325.0,311.6 1328.0,319.3 1331.0,321.4 1334.0,327.7 1337.0,329.3 1340.0,334.0 1343.0,335.3 1346.0,325.5 1349.0,325.5 1352.0,329.4 1355.0,335.8 1358.0,343.3 1361.0,347.0 1364.0,345.9 1367.0,342.8 1370.0,338.3 1373.0,333.5 1376.0,328.5 1379.0,327.1 1382.0,322.7 1385.0,321.1 1388.0,314.1 1391.0,318.9 1394.0,324.7 1397.0,329.3 1400.0,329.4 1403.0,331.1 1406.0,332.1 1409.0,335.2 1412.0,333.5 1415.0,334.4 1418.0,332.6 1421.0,335.5 1424.0,332.1 1427.0,334.6 1430.0,335.9 1433.0,333.8 1436.0,338.3 1439.0,337.4 1442.0,334.7 1445.0,338.7 1448.0,336.8 1451.0,339.1 1454.0,341.1 1457.0,339.3 1460.0,339.8 1463.0,337.1 1466.0,340.6 1469.0,339.1 1472.0,339.5 1475.0,341.9 1478.0,341.6 1481.0,344.1 1484.0,344.4 1487.0,347.4 1490.0,344.6 1493.0,345.5 1496.0,348.9" fill="none" stroke="#00ff00" stroke-width="1"/>
</g>
<g clip-path="url(#c3)">
<polyline points="415.0,375.4 418.0,375.8 421.0,375.1 424.0,375.4 427.0,375.5 430.0,375.3 433.0,374.8 436.0,374.8 439.0,374.9 442.0,374.6 445.0,375.0 448.0,375.5 451.0,374.4 454.0,375.1 457.0,376.2 460.0,374.5 463.0,374.1 466.0,375.3 469.0,375.4 472.0,374.8 475.0,375.3 478.0,375.8 481.0,375.3 484.0,376.1 487.0,377.1 490.0,375.2 493.0,375.6 496.0,374.5 499.0,374.9 502.0,376.8 505.0,373.9 508.0,375.2 511.0,374.3 514.0,375.1 517.0,373.8 520.0,373.8 523.0,374.3 526.0,375.6 529.0,374.7 532.0,374.9 535.0,376.0 538.0,376.4 541.0,373.8 544.0,375.8 547.0,377.4 550.0,373.0 553.0,377.2 556.0,369.9 559.0,373.7 562.0,376.6 565.0,379.3 568.0,377.9 571.0,375.7 574.0,380.7 577.0,380.9 580.0,383.3 583.0,385.0 586.0,384.4 589.0,388.4 592.0,386.1 595.0,388.1 598.0,376.1 601.0,386.8 604.0,381.7 607.0,383.8 610.0,380.6 613.0,383.8 616.0,379.1 619.0,382.0 622.0,378.9 625.0,378.5 628.0,373.9 631.0,383.7 634.0,384.7 637.0,382.7 640.0,382.8 643.0,389.9 646.0,400.4 649.0,402.6 652.0,403.3 655.0,400.4 658.0,399.9 661.0,399.6 664.0,395.5 667.0,398.8 670.0,397.7 673.0,400.5 676.0,400.8 679.0,395.9 682.0,390.1 685.0,389.9 688.0,392.7 691.0,389.0 694.0,391.2 697.0,389.2 700.0,392.1 703.0,392.9 706.0,391.3 709.0,393.9 712.0,399.1 715.0,391.4 718.0,400.1 721.0,401.6 724.0,403.8 727.0,401.3 730.0,402.2 733.0,408.5 736.0,410.2 739.0,405.9 742.0,411.6 745.0,405.1 748.0,407.5 751.0,400.9 754.0,396.6 757.0,391.5 760.0,388.6 763.0,387.5 766.0,387.1 769.0,397.2 772.0,393.6 775.0,402.9 778.0,404.4 781.0,409.2 784.0,413.3 787.0,408.0 790.0,408.4 793.0,409.3 796.0,409.4 799.0,411.9 802.0,411.0 805.0,416.2 808.0,411.5 811.0,415.0 814.0,414.4 817.0,413.8 820.0,411.8 823.0,409.2 826.0,407.7 829.0,407.7 832.0,405.9 835.0,407.1 838.0,409.0 841.0,408.6 844.0,412.7 847.0,416.4 850.0,413.3 853.0,407.6 856.0,413.1 859.0,417.7 862.0,415.9 865.0,417.5 868.0,413.1 871.0,413.7 874.0,410.4 877.0,409.8 880.0,410.1 883.0,408.6 886.0,403.4 889.0,408.0 892.0,403.3 895.0,402.3 898.0,401.0 901.0,397.7 904.0,400.0 907.0,399.1 910.0,405.1 913.0,405.8 916.0,406.6 919.0,405.6 922.0,405.5 925.0,410.0 928.0,410.2 931.0,409.5 934.0,415.6 937.0,414.0 940.0,414.8 943.0,416.4 946.0,417.0 949.0,422.2 952.0,424.1 955.0,415.4 958.0,420.9 961.0,416.4 964.0,417.1 967.0,412.0 970.0,420.0 973.0,408.1 976.0,404.9 979.0,408.6 982.0,407.3 985.0,405.0 988.0,405.8 991.0,399.1 994.0,402.6 997.0,398.4 1000.0,396.2 1003.0,394.1 1006.0,392.2 1009.0,395.3 1012.0,390.5 1015.0,390.4 1018.0,390.0 1021.0,386.9 1024.0,382.5 1027.0,386.6 1030.0,388.4 1033.0,383.1 1036.0,384.7 1039.0,385.3 1042.0,383.3 1045.0,393.5 1048.0,402.2 1051.0,405.1 1054.0,402.2 1057.0,408.5 1060.0,409.2 1063.0,412.9 1066.0,412.0 1069.0,409.4 1072.0,410.8 1075.0,412.0 1078.0,417.8 1081.0,417.1 1084.0,419.5 1087.0,416.3 1090.0,422.3 1093.0,423.3 1096.0,421.0 1099.0,418.7 1102.0,420.9 1105.0,422.1 1108.0,414.8 1111.0,412.4 1114.0,412.0 1117.0,411.7 1120.0,412.6 1123.0,407.8 1126.0,407.6 1129.0,411.9 1132.0,408.9 1135.0,410.2 1138.0,409.4 1141.0,405.5 1144.0,406.9 1147.0,408.2 1150.0,405.3 1153.0,403.3 1156.0,406.8 1159.0,406.1 1162.0,407.0 1165.0,406.3 1168.0,406.5 1171.0,401.4 1174.0,400.8 1177.0,403.6 1180.0,401.0 1183.0,405.1 1186.0,402.6 1189.0,407.3 1192.0,400.2 1195.0,403.4 1198.0,395.4 1201.0,399.3 1204.0,401.9 1207.0,395.8 1210.0,393.9 1213.0,398.0 1216.0,405.1 1219.0,407.8 1222.0,415.1 1225.0,412.8 1228.0,410.6 1231.0,411.3 1234.0,404.2 1237.0,405.8 1240.0,401.9 1243.0,402.4 1246.0,400.8 1249.0,400.3 1252.0,397.4 1255.0,400.0 1258.0,400.4 1261.0,408.4 1264.0,402.6 1267.0,405.8 1270.0,402.0 1273.0,394.3 1276.0,392.7 1279.0,394.4 1282.0,397.0 1285.0,387.8 1288.0,382.9 1291.0,385.7 1294.0,382.1 1297.0,384.5 1300.0,391.8 1303.0,396.6 1306.0,404.7 1309.0,407.9 1312.0,400.6 1315.0,402.1 1318.0,403.9 1321.0,392.9 1324.0,399.4 1327.0,398.5 1330.0,394.5 1333.0,401.2 1336.0,405.1 1339.0,413.7 1342.0,416.2 1345.0,414.2 1348.0,413.5 1351.0,401.7 1354.0,402.7 1357.0,396.9 1360.0,420.8 1363.0,434.7 1366.0,426.5 1369.0,416.0 1372.0,410.2 1375.0,402.6 1378.0,421.3 1381.0,440.1 1384.0,434.3 1387.0,434.4 1390.0,433.2 1393.0,423.7 1396.0,421.2 1399.0,437.3 1402.0,444.8 1405.0,443.6 1408.0,443.6 1411.0,437.5 1414.0,436.8 1417.0,438.2 1420.0,439.7 1423.0,437.3 1426.0,439.1 1429.0,441.2 1432.0,443.4 1435.0,445.9 1438.0,450.3 1441.0,457.9 1444.0,457.9 1447.0,464.6 1450.0,467.9 1453.0,469.2 1456.0,465.5 1459.0,472.1 1462.0,474.6 1465.0,473.3 1468.0,473.8 1471.0,483.6 1474.0,483.2 1477.0,492.4 1480.0,488.3 1483.0,490.3 1486.0,485.0 1489.0,486.1 1492.0,484.3 1495.0,485.8 1498.0,491.3" fill="none" stroke="#ff0000" stroke-width="1"/>
<polyline points="415.5,375.0 418.5,375.4 421.5,374.7 424.5,375.1 427.5,375.1 430.5,374.9 433.5,374.7 436.5,374.6 439.5,374.3 442.5,374.5 445.5,374.6 448.5,375.4 451.5,373.9 454.5,374.6 457.5,375.8 460.5,373.9 463.5,373.8 466.5,375.1 469.5,375.1 472.5,373.5 475.5,374.4 478.5,374.9 481.5,373.9 484.5,375.3 487.5,375.5 490.5,373.8 493.5,374.6 496.5,372.9 499.5,374.6 502.5,375.4 505.5,373.4 508.5,374.2 511.5,373.6 514.5,374.6 517.5,373.2 520.5,372.6 523.5,372.7 526.5,374.1 529.5,372.1 532.5,372.6 535.5,375.2 538.5,374.6 541.5,372.5 544.5,373.9 547.5,375.5 550.5,372.7 553.5,376.3 556.5,367.5 559.5,373.3 562.5,374.2 565.5,376.9 568.5,375.4 571.5,375.3 574.5,378.1 577.5,379.8 580.5,381.1 583.5,383.8 586.5,383.3 589.5,387.7 592.5,383.6 595.5,384.9 598.5,374.2 601.5,384.4 604.5,377.6 607.5,383.0 610.5,378.9 613.5,382.0 616.5,377.4 619.5,378.5 622.5,376.9 625.5,377.2 628.5,371.1 631.5,379.4 634.5,382.4 637.5,382.6 640.5,379.7 643.5,387.9 646.5,398.0 649.5,402.7 652.5,399.4 655.5,397.6 658.5,396.5 661.5,398.7 664.5,393.1 667.5,396.0 670.5,395.2 673.5,397.7 676.5,397.7 679.5,395.6 682.5,388.9 685.5,388.2 688.5,391.3 691.5,387.7 694.5,389.3 697.5,387.2 700.5,388.8 703.5,390.0 706.5,388.5 709.5,394.1 712.5,396.6 715.5,389.2 718.5,399.4 721.5,402.0 724.5,400.0 727.5,401.0 730.5,400.4 733.5,407.3 736.5,408.2 739.5,406.1 742.5,410.3 745.5,403.5 748.5,405.5 751.5,399.9 754.5,394.7 757.5,390.7 760.5,385.5 763.5,386.2 766.5,384.7 769.5,395.8 772.5,392.4 775.5,401.4 778.5,403.6 781.5,406.0 784.5,410.3 787.5,406.0 790.5,404.8 793.5,405.6 796.5,408.6 799.5,408.7 802.5,408.8 805.5,414.8 808.5,410.2 811.5,413.5 814.5,413.5 817.5,412.3 820.5,409.7 823.5,408.1 826.5,404.0 829.5,404.7 832.5,404.3 835.5,405.0 838.5,406.9 841.5,407.1 844.5,409.8 847.5,415.2 850.5,412.3 853.5,405.3 856.5,413.1 859.5,415.2 862.5,415.0 865.5,413.5 868.5,411.6 871.5,411.6 874.5,408.6 877.5,410.1 880.5,410.0 883.5,405.8 886.5,402.0 889.5,406.1 892.5,400.1 895.5,400.4 898.5,399.8 901.5,396.5 904.5,398.5 907.5,398.5 910.5,402.9 913.5,404.8 916.5,404.4 919.5,405.6 922.5,403.6 925.5,406.1 928.5,408.8 931.5,407.8 934.5,412.7 937.5,412.2 940.5,412.8 943.5,415.2 946.5,414.5 949.5,419.3 952.5,422.2 955.5,412.7 958.5,418.3 961.5,414.9 964.5,413.6 967.5,411.0 970.5,416.4 973.5,406.3 976.5,405.0 979.5,408.6 982.5,406.2 985.5,401.9 988.5,403.5 991.5,397.2 994.5,400.6 997.5,395.7 1000.5,394.3 1003.5,394.4 1006.5,392.2 1009.5,393.2 1012.5,390.7 1015.5,387.9 1018.5,387.9 1021.5,383.5 1024.5,380.7 1027.5,383.7 1030.5,385.9 1033.5,380.4 1036.5,382.9 1039.5,383.7 1042.5,381.1 1045.5,393.7 1048.5,400.5 1051.5,401.0 1054.5,399.1 1057.5,408.1 1060.5,406.4 1063.5,410.7 1066.5,411.3 1069.5,407.6 1072.5,408.7 1075.5,409.7 1078.5,414.0 1081.5,416.6 1084.5,415.9 1087.5,412.3 1090.5,421.5 1093.5,420.1 1096.5,417.1 1099.5,417.2 1102.5,420.0 1105.5,420.5 1108.5,412.4 1111.5,410.1 1114.5,410.1 1117.5,410.7 1120.5,411.0 1123.5,407.2 1126.5,404.6 1129.5,410.8 1132.5,406.6 1135.5,408.8 1138.5,408.7 1141.5,403.2 1144.5,406.0 1147.5,404.8 1150.5,403.3 1153.5,402.1 1156.5,403.5 1159.5,404.0 1162.5,404.7 1165.5,403.0 1168.5,405.6 1171.5,397.6 1174.5,401.1 1177.5,400.8 1180.5,399.1 1183.5,402.3 1186.5,402.0 1189.5,406.4 1192.5,398.6 1195.5,399.9 1198.5,395.2 1201.5,396.4 1204.5,400.4 1207.5,393.2 1210.5,391.9 1213.5,396.1 1216.5,402.3 1219.5,405.4 1222.5,414.6 1225.5,411.0 1228.5,409.6 1231.5,408.7 1234.5,402.7 1237.5,402.3 1240.5,398.9 1243.5,402.3 1246.5,397.8 1249.5,396.8 1252.5,395.5 1255.5,398.4 1258.5,397.7 1261.5,404.6 1264.5,399.7 1267.5,404.6 1270.5,399.8 1273.5,392.5 1276.5,390.9 1279.5,391.2 1282.5,397.1 1285.5,384.7 1288.5,380.3 1291.5,383.9 1294.5,378.4 1297.5,382.3 1300.5,390.0 1303.5,394.4 1306.5,403.4 1309.5,404.6 1312.5,399.7 1315.5,399.8 1318.5,401.4 1321.5,390.0 1324.5,397.0 1327.5,396.1 1330.5,392.1 1333.5,398.4 1336.5,403.5 1339.5,411.8 1342.5,415.2 1345.5,412.7 1348.5,411.5 1351.5,397.8 1354.5,400.1 1357.5,394.0 1360.5,419.2 1363.5,431.8 1366.5,424.9 1369.5,414.1 1372.5,408.9 1375.5,401.4 1378.5,419.4 1381.5,437.5 1384.5,431.5 1387.5,434.4 1390.5,429.7 1393.5,423.3 1396.5,419.6 1399.5,433.4 1402.5,443.8 1405.5,443.9 1408.5,443.3 1411.5,436.9 1414.5,433.9 1417.5,436.9 1420.5,437.3 1423.5,435.4 1426.5,436.3 1429.5,439.7 1432.5,441.1 1435.5,443.8 1438.5,448.0 1441.5,456.6 1444.5,456.4 1447.5,461.9 1450.5,464.3 1453.5,467.5 1456.5,464.2 1459.5,470.9 1462.5,473.2 1465.5,471.4 1468.5,472.9 1471.5,481.4 1474.5,483.2 1477.5,489.0 1480.5,487.7 1483.5,488.6 1486.5,484.2 1489.5,484.1 1492.5,481.4 1495.5,483.2 1498.5,487.3" fill="none" stroke="#ffff00" stroke-width="1"/>
<polyline points="416.0,374.8 419.0,374.5 422.0,374.1 425.0,374.1 428.0,374.9 431.0,374.2 434.0,374.2 437.0,374.1 440.0,374.0 443.0,374.1 446.0,373.9 449.0,374.5 452.0,373.6 455.0,374.0 458.0,374.7 461.0,373.0 464.0,373.4 467.0,374.3 470.0,374.4 473.0,372.7 476.0,373.7 479.0,373.7 482.0,372.9 485.0,373.9 488.0,374.6 491.0,372.3 494.0,373.8 497.0,371.7 500.0,372.7 503.0,374.7 506.0,371.5 509.0,372.6 512.0,372.4 515.0,373.2 518.0,371.2 521.0,372.2 524.0,370.0 527.0,371.5 530.0,370.2 533.0,372.1 536.0,372.9 539.0,372.9 542.0,370.5 545.0,371.9 548.0,374.6 551.0,369.1 554.0,373.2 557.0,365.1 560.0,370.1 563.0,373.4 566.0,375.0 569.0,373.7 572.0,372.2 575.0,375.6 578.0,378.1 581.0,379.0 584.0,380.4 587.0,379.5 590.0,385.5 593.0,380.3 596.0,383.0 599.0,371.0 602.0,381.0 605.0,374.5 608.0,381.1 611.0,377.3 614.0,378.0 617.0,372.2 620.0,376.7 623.0,374.5 626.0,374.6 629.0,369.0 632.0,378.3 635.0,378.3 638.0,377.3 641.0,377.9 644.0,386.4 647.0,393.9 650.0,398.6 653.0,397.0 656.0,396.3 659.0,393.1 662.0,394.2 665.0,391.1 668.0,393.8 671.0,392.4 674.0,396.6 677.0,395.4 680.0,391.8 683.0,385.0 686.0,384.7 689.0,385.9 692.0,384.6 695.0,387.3 698.0,385.0 701.0,386.3 704.0,388.1 707.0,386.7 710.0,390.4 713.0,393.7 716.0,387.7 719.0,396.9 722.0,398.9 725.0,398.6 728.0,396.0 731.0,398.2 734.0,403.7 737.0,404.6 740.0,402.0 743.0,405.7 746.0,399.8 749.0,402.9 752.0,396.8 755.0,393.1 758.0,387.0 761.0,381.9 764.0,382.0 767.0,382.4 770.0,392.2 773.0,388.7 776.0,398.0 779.0,398.6 782.0,404.0 785.0,408.3 788.0,402.6 791.0,403.7 794.0,403.6 797.0,404.6 800.0,407.7 803.0,405.5 806.0,410.9 809.0,406.6 812.0,411.4 815.0,409.9 818.0,409.9 821.0,408.1 824.0,405.0 827.0,402.8 830.0,401.1 833.0,402.9 836.0,400.5 839.0,405.2 842.0,404.5 845.0,408.0 848.0,412.1 851.0,409.0 854.0,403.4 857.0,408.7 860.0,411.1 863.0,412.0 866.0,411.7 869.0,407.8 872.0,409.3 875.0,405.6 878.0,405.1 881.0,406.6 884.0,404.7 887.0,398.1 890.0,403.0 893.0,398.3 896.0,398.9 899.0,395.6 902.0,393.1 905.0,393.2 908.0,394.0 911.0,400.4 914.0,399.5 917.0,403.6 920.0,402.4 923.0,401.9 926.0,403.0 929.0,406.4 932.0,403.8 935.0,411.4 938.0,410.1 941.0,409.6 944.0,412.3 947.0,412.4 950.0,416.1 953.0,417.1 956.0,411.3 959.0,413.7 962.0,411.3 965.0,411.7 968.0,407.7 971.0,413.8 974.0,402.2 977.0,400.9 980.0,404.5 983.0,402.2 986.0,399.1 989.0,400.9 992.0,394.5 995.0,396.2 998.0,395.0 1001.0,393.5 1004.0,389.6 1007.0,389.6 1010.0,388.5 1013.0,386.1 1016.0,385.8 1019.0,383.2 1022.0,381.1 1025.0,378.0 1028.0,382.1 1031.0,383.0 1034.0,376.0 1037.0,379.0 1040.0,380.8 1043.0,378.4 1046.0,389.2 1049.0,398.5 1052.0,398.5 1055.0,397.6 1058.0,404.8 1061.0,402.6 1064.0,409.2 1067.0,408.2 1070.0,405.6 1073.0,407.6 1076.0,407.6 1079.0,411.7 1082.0,412.0 1085.0,412.8 1088.0,411.0 1091.0,417.6 1094.0,417.4 1097.0,415.8 1100.0,414.2 1103.0,416.1 1106.0,418.1 1109.0,408.6 1112.0,406.4 1115.0,408.8 1118.0,408.1 1121.0,406.7 1124.0,404.6 1127.0,402.9 1130.0,407.5 1133.0,403.3 1136.0,407.2 1139.0,404.6 1142.0,400.7 1145.0,401.7 1148.0,401.3 1151.0,401.5 1154.0,399.5 1157.0,401.4 1160.0,402.6 1163.0,401.1 1166.0,400.7 1169.0,402.0 1172.0,396.0 1175.0,397.6 1178.0,397.6 1181.0,397.3 1184.0,399.0 1187.0,399.3 1190.0,404.4 1193.0,395.9 1196.0,396.8 1199.0,390.7 1202.0,395.5 1205.0,396.3 1208.0,391.9 1211.0,387.8 1214.0,393.3 1217.0,399.6 1220.0,402.6 1223.0,409.8 1226.0,408.9 1229.0,405.7 1232.0,406.3 1235.0,399.9 1238.0,399.1 1241.0,395.6 1244.0,397.8 1247.0,394.7 1250.0,393.3 1253.0,390.9 1256.0,394.9 1259.0,396.0 1262.0,402.0 1265.0,397.3 1268.0,401.0 1271.0,398.8 1274.0,390.5 1277.0,387.2 1280.0,389.9 1283.0,393.9 1286.0,383.0 1289.0,377.9 1292.0,381.5 1295.0,375.2 1298.0,379.3 1301.0,386.4 1304.0,390.4 1307.0,399.5 1310.0,402.7 1313.0,396.0 1316.0,396.2 1319.0,398.6 1322.0,386.4 1325.0,395.2 1328.0,394.2 1331.0,388.1 1334.0,394.5 1337.0,401.4 1340.0,410.8 1343.0,412.1 1346.0,409.8 1349.0,407.4 1352.0,394.8 1355.0,397.5 1358.0,391.9 1361.0,415.1 1364.0,429.8 1367.0,419.6 1370.0,411.8 1373.0,406.2 1376.0,399.3 1379.0,416.4 1382.0,434.8 1385.0,427.7 1388.0,431.0 1391.0,426.0 1394.0,418.3 1397.0,416.6 1400.0,432.2 1403.0,441.9 1406.0,440.8 1409.0,438.4 1412.0,433.6 1415.0,431.2 1418.0,434.2 1421.0,436.3 1424.0,433.5 1427.0,434.1 1430.0,437.8 1433.0,439.2 1436.0,440.5 1439.0,443.6 1442.0,453.1 1445.0,453.6 1448.0,460.3 1451.0,463.2 1454.0,464.2 1457.0,461.8 1460.0,468.3 1463.0,468.3 1466.0,469.0 1469.0,467.9 1472.0,479.0 1475.0,479.9 1478.0,486.3 1481.0,484.6 1484.0,486.2 1487.0,481.5 1490.0,480.6 1493.0,478.5 1496.0,479.8 1499.0,486.4" fill="none" stroke="#00ff00" stroke-width="1"/>
</g>
<g clip-path="url(#c4)">
<polyline points="398.6,528.1 401.6,528.8 404.6,528.2 407.6,528.2 410.6,528.3 413.6,528.0 416.6,527.9 419.6,528.3 422.6,527.2 425.6,527.4 428.6,527.9 431.6,528.0 434.6,527.8 437.6,526.8 440.6,527.5 443.6,527.2 446.6,526.8 449.6,527.0 452.6,527.8 455.6,527.8 458.6,526.9 461.6,525.2 464.6,524.7 467.6,523.7 470.6,522.5 473.6,523.1 476.6,521.7 479.6,522.4 482.6,523.4 485.6,522.5 488.6,526.5 491.6,525.2 494.6,524.6 497.6,529.4 500.6,530.2 503.6,530.0 506.6,534.3 509.6,533.1 512.6,533.7 515.6,532.9 518.6,536.7 521.6,534.7 524.6,536.2 527.6,536.1 530.6,535.9 533.6,536.5 536.6,535.5 539.6,533.7 542.6,537.1 545.6,532.0 548.6,533.3 551.6,530.1 554.6,531.6 557.6,530.3 560.6,530.0 563.6,532.0 566.6,532.0 569.6,536.9 572.6,538.0 575.6,540.2 578.6,537.3 581.6,544.3 584.6,539.6 587.6,541.6 590.6,540.2 593.6,536.5 596.6,537.2 599.6,535.6 602.6,533.0 605.6,540.7 608.6,536.0 611.6,533.9 614.6,532.5 617.6,537.2 620.6,537.7 623.6,533.0 626.6,531.2 629.6,534.2 632.6,538.9 635.6,531.7 638.6,535.0 641.6,540.9 644.6,548.3 647.6,549.0 650.6,556.9 653.6,552.6 656.6,548.8 659.6,547.7 662.6,555.6 665.6,556.7 668.6,558.5 671.6,563.7 674.6,563.0 677.6,556.5 680.6,559.4 683.6,555.1 686.6,554.2 689.6,547.1 692.6,556.6 695.6,557.9 698.6,555.3 701.6,560.3 704.6,558.7 707.6,557.1 710.6,565.7 713.6,561.0 716.6,556.4 719.6,560.4 722.6,565.1 725.6,563.3 728.6,556.2 731.6,560.4 734.6,555.9 737.6,564.4 740.6,567.6 743.6,564.0 746.6,565.9 749.6,558.0 752.6,556.8 755.6,556.0 758.6,549.2 761.6,557.9 764.6,551.9 767.6,557.9 770.6,555.6 773.6,558.8 776.6,558.7 779.6,558.2 782.6,576.0 785.6,575.9 788.6,579.0 791.6,586.6 794.6,595.1 797.6,596.1 800.6,599.4 803.6,604.4 806.6,609.2 809.6,610.8 812.6,613.3 815.6,618.6 818.6,618.4 821.6,612.3 824.6,607.8 827.6,604.9 830.6,602.0 833.6,599.0 836.6,601.8 839.6,602.7 842.6,607.7 845.6,613.5 848.6,613.4 851.6,617.1 854.6,609.7 857.6,606.9 860.6,605.4 863.6,600.9 866.6,595.6 869.6,598.1 872.6,599.2 875.6,604.3 878.6,610.4 881.6,617.5 884.6,622.9 887.6,625.7 890.6,622.6 893.6,619.4 896.6,617.2 899.6,606.1 902.6,607.7 905.6,604.8 908.6,604.3 911.6,606.0 914.6,608.7 917.6,612.0 920.6,614.4 923.6,617.0 926.6,619.8 929.6,626.7 932.6,623.7 935.6,620.7 938.6,618.4 941.6,620.0 944.6,616.6 947.6,612.3 950.6,618.8 953.6,609.5 956.6,615.8 959.6,612.4 962.6,608.9 965.6,609.8 968.6,617.9 971.6,608.4 974.6,606.2 977.6,607.3 980.6,603.9 983.6,607.2 986.6,609.7 989.6,608.0 992.6,611.7 995.6,605.5 998.6,600.3 1001.6,595.9 1004.6,595.6 1007.6,586.5 1010.6,583.6 1013.6,586.6 1016.6,583.7 1019.6,582.9 1022.6,581.1 1025.6,581.2 1028.6,588.5 1031.6,591.5 1034.6,598.3 1037.6,604.2 1040.6,614.5 1043.6,612.1 1046.6,610.4 1049.6,609.0 1052.6,604.6 1055.6,601.7 1058.6,599.0 1061.6,597.9 1064.6,598.8 1067.6,600.5 1070.6,599.9 1073.6,608.7 1076.6,607.2 1079.6,614.3 1082.6,610.8 1085.6,619.2 1088.6,618.1 1091.6,614.7 1094.6,605.9 1097.6,604.7 1100.6,607.9 1103.6,601.8 1106.6,597.8 1109.6,592.9 1112.6,590.9 1115.6,590.4 1118.6,579.7 1121.6,590.7 1124.6,589.0 1127.6,585.1 1130.6,578.9 1133.6,577.8 1136.6,580.6 1139.6,576.1 1142.6,575.0 1145.6,570.7 1148.6,568.2 1151.6,569.7 1154.6,564.6 1157.6,566.8 1160.6,569.4 1163.6,567.4 1166.6,565.8 1169.6,573.9 1172.6,573.8 1175.6,583.0 1178.6,591.0 1181.6,594.3 1184.6,600.0 1187.6,610.2 1190.6,592.8 1193.6,584.2 1196.6,567.9 1199.6,564.5 1202.6,556.8 1205.6,549.9 1208.6,538.0 1211.6,540.5 1214.6,547.2 1217.6,552.0 1220.6,555.6 1223.6,556.7 1226.6,561.8 1229.6,559.4 1232.6,557.3 1235.6,554.6 1238.6,559.8 1241.6,543.1 1244.6,544.4 1247.6,543.7 1250.6,545.6 1253.6,537.2 1256.6,534.9 1259.6,536.3 1262.6,535.7 1265.6,533.9 1268.6,528.6 1271.6,526.8 1274.6,530.5 1277.6,527.1 1280.6,528.5 1283.6,521.5 1286.6,521.0 1289.6,523.1 1292.6,517.1 1295.6,509.6 1298.6,521.1 1301.6,527.2 1304.6,531.0 1307.6,534.0 1310.6,536.0 1313.6,540.8 1316.6,538.4 1319.6,542.2 1322.6,540.0 1325.6,544.6 1328.6,549.9 1331.6,545.5 1334.6,544.1 1337.6,545.9 1340.6,546.6 1343.6,543.7 1346.6,545.8 1349.6,549.4 1352.6,545.7 1355.6,554.2 1358.6,577.8 1361.6,598.6 1364.6,601.1 1367.6,591.1 1370.6,574.2 1373.6,564.9 1376.6,567.3 1379.6,571.3 1382.6,573.9 1385.6,582.1 1388.6,588.5 1391.6,575.6 1394.6,561.4 1397.6,545.2 1400.6,554.1 1403.6,553.9 1406.6,561.4 1409.6,568.1 1412.6,565.0 1415.6,575.1 1418.6,575.9 1421.6,577.3 1424.6,574.5 1427.6,573.6 1430.6,574.5 1433.6,572.1 1436.6,580.5 1439.6,578.3 1442.6,573.2 1445.6,576.5 1448.6,577.7 1451.6,577.4 1454.6,576.6 1457.6,580.6 1460.6,579.4 1463.6,587.8 1466.6,581.6 1469.6,579.5 1472.6,584.2 1475.6,578.1 1478.6,583.4 1481.6,583.3 1484.6,584.5 1487.6,585.3 1490.6,588.6 1493.6,588.4 1496.6,595.0" fill="none" stroke="#ff0000" stroke-width="1"/>
<polyline points="399.1,528.2 402.1,528.0 405.1,527.8 408.1,527.4 411.1,528.3 414.1,527.5 417.1,527.6 420.1,527.9 423.1,527.1 426.1,527.2 429.1,527.4 432.1,527.4 435.1,527.7 438.1,526.4 441.1,526.6 444.1,526.7 447.1,526.6 450.1,526.5 453.1,527.4 456.1,527.2 459.1,526.5 462.1,524.4 465.1,524.0 468.1,522.8 471.1,522.0 474.1,522.0 477.1,521.4 480.1,521.6 483.1,522.0 486.1,522.2 489.1,525.0 492.1,524.2 495.1,523.9 498.1,528.5 501.1,528.7 504.1,530.1 507.1,532.2 510.1,531.1 513.1,532.4 516.1,533.0 519.1,535.0 522.1,533.7 525.1,535.0 528.1,534.7 531.1,535.7 534.1,533.7 537.1,533.2 540.1,532.0 543.1,534.7 546.1,531.9 549.1,532.2 552.1,529.2 555.1,529.3 558.1,528.7 561.1,529.1 564.1,530.8 567.1,529.5 570.1,534.1 573.1,536.8 576.1,537.9 579.1,536.4 582.1,542.0 585.1,537.2 588.1,539.6 591.1,539.3 594.1,536.0 597.1,534.2 600.1,531.4 603.1,532.1 606.1,539.4 609.1,534.3 612.1,532.9 615.1,532.4 618.1,534.1 621.1,533.4 624.1,532.3 627.1,530.8 630.1,531.2 633.1,535.8 636.1,530.2 639.1,534.8 642.1,538.5 645.1,544.9 648.1,548.0 651.1,555.7 654.1,550.8 657.1,548.8 660.1,546.4 663.1,552.9 666.1,553.9 669.1,556.0 672.1,559.3 675.1,561.0 678.1,555.5 681.1,558.3 684.1,553.7 687.1,553.3 690.1,546.3 693.1,553.9 696.1,556.0 699.1,554.7 702.1,558.8 705.1,556.6 708.1,556.7 711.1,561.7 714.1,559.8 717.1,553.9 720.1,557.9 723.1,562.0 726.1,559.7 729.1,553.6 732.1,558.8 735.1,553.8 738.1,563.8 741.1,564.9 744.1,561.4 747.1,562.7 750.1,556.8 753.1,554.2 756.1,553.3 759.1,546.7 762.1,554.0 765.1,550.9 768.1,556.9 771.1,553.2 774.1,558.7 777.1,557.7 780.1,555.2 783.1,575.9 786.1,573.6 789.1,576.1 792.1,584.0 795.1,594.1 798.1,593.4 801.1,598.0 804.1,603.8 807.1,607.1 810.1,610.5 813.1,610.7 816.1,618.3 819.1,615.0 822.1,611.6 825.1,606.3 828.1,604.1 831.1,599.8 834.1,596.7 837.1,600.8 840.1,599.2 843.1,604.6 846.1,611.5 849.1,612.6 852.1,614.4 855.1,608.4 858.1,604.9 861.1,601.4 864.1,598.5 867.1,595.5 870.1,595.2 873.1,597.1 876.1,603.4 879.1,609.9 882.1,614.3 885.1,620.5 888.1,621.5 891.1,619.1 894.1,617.8 897.1,613.0 900.1,606.3 903.1,605.5 906.1,604.0 909.1,602.2 912.1,604.7 915.1,605.7 918.1,611.8 921.1,613.3 924.1,614.9 927.1,617.9 930.1,625.7 933.1,621.6 936.1,616.6 939.1,618.0 942.1,616.4 945.1,614.0 948.1,611.4 951.1,616.5 954.1,607.8 957.1,612.7 960.1,609.2 963.1,605.8 966.1,606.9 969.1,616.1 972.1,606.8 975.1,604.4 978.1,604.0 981.1,604.2 984.1,607.4 987.1,605.8 990.1,606.4 993.1,608.0 996.1,601.9 999.1,599.3 1002.1,592.2 1005.1,594.2 1008.1,584.8 1011.1,583.0 1014.1,584.6 1017.1,580.3 1020.1,580.0 1023.1,579.2 1026.1,579.5 1029.1,585.0 1032.1,590.5 1035.1,596.9 1038.1,603.7 1041.1,612.2 1044.1,609.3 1047.1,609.9 1050.1,606.8 1053.1,603.5 1056.1,601.6 1059.1,597.9 1062.1,596.6 1065.1,595.1 1068.1,598.4 1071.1,599.6 1074.1,605.8 1077.1,605.5 1080.1,614.0 1083.1,608.8 1086.1,616.3 1089.1,616.7 1092.1,611.8 1095.1,603.2 1098.1,604.3 1101.1,606.3 1104.1,598.5 1107.1,596.2 1110.1,592.2 1113.1,588.6 1116.1,588.1 1119.1,579.1 1122.1,587.6 1125.1,587.5 1128.1,581.8 1131.1,576.4 1134.1,577.0 1137.1,579.1 1140.1,575.0 1143.1,574.6 1146.1,568.1 1149.1,566.9 1152.1,567.1 1155.1,564.0 1158.1,564.2 1161.1,567.2 1164.1,566.6 1167.1,563.4 1170.1,572.3 1173.1,572.8 1176.1,581.4 1179.1,588.9 1182.1,590.8 1185.1,600.1 1188.1,607.1 1191.1,592.4 1194.1,581.1 1197.1,566.0 1200.1,562.7 1203.1,555.0 1206.1,546.1 1209.1,537.0 1212.1,537.6 1215.1,545.8 1218.1,550.3 1221.1,553.3 1224.1,554.4 1227.1,558.2 1230.1,557.2 1233.1,554.9 1236.1,551.1 1239.1,557.3 1242.1,542.4 1245.1,542.8 1248.1,542.3 1251.1,543.0 1254.1,537.2 1257.1,533.8 1260.1,533.6 1263.1,535.4 1266.1,531.7 1269.1,527.9 1272.1,525.4 1275.1,529.1 1278.1,524.9 1281.1,526.5 1284.1,519.0 1287.1,517.9 1290.1,520.2 1293.1,516.2 1296.1,507.0 1299.1,518.5 1302.1,525.4 1305.1,528.4 1308.1,533.1 1311.1,535.0 1314.1,537.8 1317.1,535.4 1320.1,541.0 1323.1,540.0 1326.1,542.6 1329.1,547.9 1332.1,542.5 1335.1,542.0 1338.1,544.3 1341.1,545.5 1344.1,540.5 1347.1,544.8 1350.1,545.1 1353.1,544.4 1356.1,552.5 1359.1,576.7 1362.1,596.5 1365.1,599.4 1368.1,588.3 1371.1,571.8 1374.1,562.2 1377.1,563.3 1380.1,569.4 1383.1,573.7 1386.1,581.2 1389.1,586.5 1392.1,571.7 1395.1,559.1 1398.1,543.4 1401.1,552.4 1404.1,553.9 1407.1,560.5 1410.1,566.9 1413.1,564.2 1416.1,574.1 1419.1,573.6 1422.1,573.9 1425.1,571.9 1428.1,571.8 1431.1,573.9 1434.1,572.0 1437.1,578.2 1440.1,576.9 1443.1,571.6 1446.1,572.7 1449.1,576.4 1452.1,573.4 1455.1,575.2 1458.1,578.3 1461.1,577.7 1464.1,585.7 1467.1,580.1 1470.1,577.8 1473.1,581.7 1476.1,576.2 1479.1,581.1 1482.1,583.3 1485.1,580.6 1488.1,584.2 1491.1,587.9 1494.1,585.8 1497.1,594.1" fill="none" stroke="#ffff00" stroke-width="1"/>
<polyline points="399.6,527.3 402.6,527.7 405.6,527.0 408.6,526.9 411.6,527.4 414.6,527.2 417.6,526.7 420.6,527.3 423.6,526.0 426.6,526.2 429.6,526.8 432.6,526.7 435.6,527.1 438.6,525.8 441.6,526.3 444.6,526.4 447.6,525.4 450.6,525.6 453.6,526.5 456.6,526.6 459.6,524.7 462.6,523.3 465.6,523.3 468.6,521.5 471.6,520.6 474.6,521.0 477.6,519.7 480.6,520.8 483.6,520.3 486.6,520.1 489.6,523.5 492.6,523.3 495.6,521.5 498.6,525.5 501.6,527.7 504.6,528.2 507.6,531.6 510.6,529.9 513.6,530.6 516.6,529.7 519.6,532.4 522.6,531.2 525.6,532.5 528.6,532.9 531.6,533.2 534.6,531.3 537.6,532.3 540.6,530.6 543.6,533.3 546.6,528.7 549.6,530.3 552.6,526.8 555.6,527.0 558.6,526.8 561.6,524.3 564.6,527.6 567.6,526.7 570.6,531.5 573.6,532.8 576.6,535.5 579.6,532.7 582.6,539.2 585.6,533.9 588.6,537.7 591.6,536.4 594.6,532.9 597.6,531.7 600.6,530.3 603.6,528.4 606.6,535.6 609.6,529.4 612.6,527.8 615.6,527.5 618.6,531.9 621.6,532.6 624.6,527.2 627.6,527.1 630.6,530.2 633.6,533.4 636.6,526.4 639.6,530.9 642.6,536.0 645.6,542.2 648.6,542.9 651.6,552.6 654.6,549.0 657.6,544.0 660.6,542.3 663.6,549.1 666.6,550.3 669.6,554.0 672.6,558.2 675.6,558.3 678.6,550.9 681.6,554.4 684.6,550.3 687.6,550.4 690.6,543.9 693.6,550.6 696.6,552.5 699.6,550.2 702.6,554.8 705.6,551.6 708.6,551.7 711.6,559.8 714.6,557.2 717.6,550.6 720.6,556.2 723.6,560.0 726.6,557.5 729.6,550.5 732.6,553.7 735.6,551.7 738.6,560.6 741.6,562.3 744.6,558.2 747.6,560.0 750.6,552.2 753.6,550.2 756.6,550.2 759.6,543.8 762.6,550.7 765.6,548.3 768.6,552.8 771.6,551.2 774.6,554.9 777.6,554.4 780.6,552.9 783.6,571.9 786.6,571.5 789.6,573.1 792.6,581.8 795.6,590.9 798.6,590.9 801.6,594.5 804.6,599.7 807.6,605.2 810.6,607.4 813.6,607.9 816.6,614.1 819.6,612.0 822.6,608.8 825.6,602.1 828.6,600.4 831.6,595.9 834.6,593.5 837.6,597.7 840.6,596.9 843.6,601.6 846.6,608.1 849.6,609.9 852.6,611.2 855.6,606.4 858.6,600.8 861.6,599.6 864.6,594.0 867.6,592.9 870.6,593.1 873.6,592.4 876.6,599.2 879.6,607.4 882.6,612.4 885.6,618.5 888.6,619.8 891.6,617.3 894.6,614.6 897.6,611.1 900.6,602.5 903.6,602.7 906.6,600.3 909.6,599.5 912.6,601.5 915.6,603.0 918.6,608.9 921.6,610.1 924.6,612.3 927.6,613.7 930.6,620.4 933.6,620.4 936.6,615.1 939.6,615.4 942.6,615.3 945.6,612.4 948.6,607.7 951.6,611.7 954.6,605.5 957.6,610.2 960.6,605.2 963.6,604.0 966.6,603.2 969.6,612.4 972.6,603.4 975.6,600.8 978.6,600.1 981.6,599.0 984.6,601.9 987.6,602.6 990.6,602.7 993.6,606.9 996.6,600.0 999.6,595.0 1002.6,590.7 1005.6,589.8 1008.6,581.4 1011.6,579.4 1014.6,580.8 1017.6,578.2 1020.6,576.3 1023.6,576.9 1026.6,575.4 1029.6,581.0 1032.6,585.9 1035.6,593.0 1038.6,601.6 1041.6,608.3 1044.6,607.9 1047.6,606.0 1050.6,603.7 1053.6,601.2 1056.6,597.5 1059.6,593.5 1062.6,594.8 1065.6,592.5 1068.6,596.6 1071.6,595.7 1074.6,604.0 1077.6,601.2 1080.6,609.3 1083.6,604.2 1086.6,613.5 1089.6,613.6 1092.6,608.8 1095.6,602.2 1098.6,599.4 1101.6,603.5 1104.6,595.7 1107.6,593.2 1110.6,587.9 1113.6,586.4 1116.6,585.2 1119.6,576.3 1122.6,585.2 1125.6,585.0 1128.6,578.3 1131.6,575.3 1134.6,572.9 1137.6,574.9 1140.6,572.8 1143.6,570.4 1146.6,565.6 1149.6,564.3 1152.6,563.3 1155.6,559.3 1158.6,560.5 1161.6,563.7 1164.6,563.6 1167.6,560.5 1170.6,567.4 1173.6,569.3 1176.6,578.8 1179.6,586.6 1182.6,587.6 1185.6,595.3 1188.6,605.6 1191.6,588.9 1194.6,579.8 1197.6,562.9 1200.6,561.3 1203.6,552.6 1206.6,543.2 1209.6,533.0 1212.6,536.1 1215.6,543.5 1218.6,547.5 1221.6,549.7 1224.6,551.1 1227.6,556.9 1230.6,554.0 1233.6,553.9 1236.6,548.7 1239.6,554.3 1242.6,537.5 1245.6,541.9 1248.6,539.2 1251.6,538.3 1254.6,532.2 1257.6,529.6 1260.6,530.3 1263.6,532.9 1266.6,529.2 1269.6,525.4 1272.6,521.9 1275.6,526.0 1278.6,523.8 1281.6,523.7 1284.6,517.9 1287.6,516.1 1290.6,518.1 1293.6,512.7 1296.6,502.9 1299.6,515.1 1302.6,522.4 1305.6,526.4 1308.6,528.9 1311.6,530.1 1314.6,535.8 1317.6,532.5 1320.6,536.0 1323.6,534.7 1326.6,537.4 1329.6,543.6 1332.6,540.3 1335.6,539.6 1338.6,539.2 1341.6,542.7 1344.6,538.1 1347.6,540.2 1350.6,542.2 1353.6,541.1 1356.6,549.0 1359.6,571.9 1362.6,593.7 1365.6,597.2 1368.6,586.8 1371.6,568.2 1374.6,559.7 1377.6,560.5 1380.6,565.9 1383.6,569.2 1386.6,578.4 1389.6,583.5 1392.6,568.9 1395.6,556.4 1398.6,542.1 1401.6,550.3 1404.6,550.8 1407.6,557.9 1410.6,562.3 1413.6,560.1 1416.6,572.3 1419.6,571.9 1422.6,572.6 1425.6,568.0 1428.6,568.3 1431.6,570.4 1434.6,567.6 1437.6,573.8 1440.6,573.4 1443.6,568.8 1446.6,569.4 1449.6,571.3 1452.6,572.5 1455.6,570.9 1458.6,574.2 1461.6,575.5 1464.6,581.7 1467.6,577.0 1470.6,574.1 1473.6,578.5 1476.6,572.6 1479.6,578.4 1482.6,578.8 1485.6,579.6 1488.6,581.3 1491.6,583.3 1494.6,583.9 1497.6,590.3" fill="none" stroke="#00ff00" stroke-width="1"/>
</g>
<line x1="1874" y1="115.5" x2="1878" y2="115.5" stroke="#fff"/>
<line x1="1874" y1="147.5" x2="1878" y2="147.5" stroke="#fff"/>
<line x1="1874" y1="179.5" x2="1878" y2="179.5" stroke="#fff"/>
<line x1="1874" y1="211.5" x2="1878" y2="211.5" stroke="#fff"/>
<line x1="1874" y1="247.5" x2="1878" y2="247.5" stroke="#fff"/>
<line x1="1874" y1="374.5" x2="1878" y2="374.5" stroke="#fff"/>
<line x1="1874" y1="524.5" x2="1878" y2="524.5" stroke="#fff"/>
<line x1="23.5" y1="640" x2="23.5" y2="644" stroke="#fff"/>
<line x1="87.5" y1="640" x2="87.5" y2="644" stroke="#fff"/>
<line x1="151.5" y1="640" x2="151.5" y2="644" stroke="#fff"/>
<line x1="215.5" y1="640" x2="215.5" y2="644" stroke="#fff"/>
<line x1="279.5" y1="640" x2="279.5" y2="644" stroke="#fff"/>
<line x1="343.5" y1="640" x2="343.5" y2="644" stroke="#fff"/>
<line x1="407.5" y1="640" x2="407.5" y2="644" stroke="#fff"/>
<line x1="471.5" y1="640" x2="471.5" y2="644" stroke="#fff"/>
<line x1="535.5" y1="640" x2="535.5" y2="644" stroke="#fff"/>
<line x1="599.5" y1="640" x2="599.5" y2="644" stroke="#fff"/>
<line x1="663.5" y1="640" x2="663.5" y2="644" stroke="#fff"/>
<line x1="727.5" y1="640" x2="727.5" y2="644" stroke="#fff"/>
<line x1="791.5" y1="640" x2="791.5" y2="644" stroke="#fff"/>
<line x1="855.5" y1="640" x2="855.5" y2="644" stroke="#fff"/>
<line x1="919.5" y1="640" x2="919.5" y2="644" stroke="#fff"/>
<line x1="983.5" y1="640" x2="983.5" y2="644" stroke="#fff"/>
<line x1="1047.5" y1="640" x2="1047.5" y2="644" stroke="#fff"/>
<line x1="1111.5" y1="640" x2="1111.5" y2="644" stroke="#fff"/>
<line x1="1175.5" y1="640" x2="1175.5" y2="644" stroke="#fff"/>
<line x1="1239.5" y1="640" x2="1239.5" y2="644" stroke="#fff"/>
<line x1="1303.5" y1="640" x2="1303.5" y2="644" stroke="#fff"/>
<line x1="1367.5" y1="640" x2="1367.5" y2="644" stroke="#fff"/>
<line x1="1431.5" y1="640" x2="1431.5" y2="644" stroke="#fff"/>
<line x1="1495.5" y1="640" x2="1495.5" y2="644" stroke="#fff"/>
<line x1="22.5" y1="668" x2="22.5" y2="744.5" stroke="#fff"/>
<line x1="22.5" y1="744.5" x2="918.5" y2="744.5" stroke="#fff"/>
<line x1="918.5" y1="668" x2="918.5" y2="744.5" stroke="#fff"/>
<line x1="407.5" y1="668" x2="407.5" y2="744" stroke="#fff" stroke-dasharray="3 3"/>
<line x1="791.5" y1="668" x2="791.5" y2="744" stroke="#fff" stroke-dasharray="3 3"/>
<line x1="23.5" y1="744" x2="23.5" y2="748" stroke="#fff"/>
<line x1="87.5" y1="744" x2="87.5" y2="748" stroke="#fff"/>
<line x1="151.5" y1="744" x2="151.5" y2="748" stroke="#fff"/>
<line x1="215.5" y1="744" x2="215.5" y2="748" stroke="#fff"/>
<line x1="279.5" y1="744" x2="279.5" y2="748" stroke="#fff"/>
<line x1="343.5" y1="744" x2="343.5" y2="748" stroke="#fff"/>
<line x1="407.5" y1="744" x2="407.5" y2="748" stroke="#fff"/>
<line x1="471.5" y1="744" x2="471.5" y2="748" stroke="#fff"/>
<line x1="535.5" y1="744" x2="535.5" y2="748" stroke="#fff"/>
<line x1="599.5" y1="744" x2="599.5" y2="748" stroke="#fff"/>
<line x1="663.5" y1="744" x2="663.5" y2="748" stroke="#fff"/>
<line x1="919" y1="744.5" x2="923" y2="744.5" stroke="#fff"/>
<circle cx="1864" cy="122" r="4.5" fill="none" stroke="#ddd" stroke-width="1"/>
<line x1="1692" y1="132.5" x2="1864" y2="132.5" stroke="#808080" stroke-width="1"/>
<line x1="1692" y1="178.5" x2="1864" y2="178.5" stroke="#808080" stroke-width="1"/>
<line x1="1692" y1="206.5" x2="1864" y2="206.5" stroke="#808080" stroke-width="1"/>
<rect x="10" y="56" width="3" height="1" fill="#a8a8a8"/>
<rect x="10" y="58" width="3" height="1" fill="#a8a8a8"/>
<rect x="10" y="60" width="3" height="1" fill="#a8a8a8"/>
<rect x="10" y="62" width="3" height="1" fill="#a8a8a8"/>
<rect x="10" y="64" width="3" height="1" fill="#a8a8a8"/>
<rect x="10" y="66" width="3" height="1" fill="#a8a8a8"/>
<rect x="10" y="68" width="3" height="1" fill="#a8a8a8"/>
<rect x="10" y="70" width="3" height="1" fill="#a8a8a8"/>
<rect x="10" y="72" width="3" height="1" fill="#a8a8a8"/>
<rect x="19.5" y="57.5" width="12" height="10" rx="1" fill="#fff" stroke="#3c80c8"/><rect x="20" y="58" width="11" height="2" fill="#a8d0f0"/>
<path d="M22 61 v5 M21 62 h2" stroke="#6aa0c8"/>
<path d="M28.0 60.0 h4 v4.0 h4.0 v4 h-4.0 v4.0 h-4 v-4.0 h-4.0 v-4 h4.0 Z" fill="#28c828" stroke="#108010" stroke-width="1"/>
<path d="M41 64 h6 l-3 3 Z" fill="#000"/>
<rect x="56.5" y="57.5" width="13" height="9" rx="1" fill="#fff" stroke="#3c80c8"/><rect x="59.5" y="63.5" width="13" height="9" rx="1" fill="#fff" stroke="#3c80c8"/>
<path d="M59 61 h8 M61 69 h9" stroke="#7090c8"/>
<path d="M78 64 h6 l-3 3 Z" fill="#000"/>
<rect x="91" y="54" width="1" height="21" fill="#a0a0a0"/><rect x="92" y="54" width="1" height="21" fill="#ffffff"/>
<rect x="100.5" y="57.5" width="15" height="15" rx="1.5" fill="#fafcff" stroke="#78aedc"/>
<path d="M106 58.5 l3.5 3.5 h-2 v3 h-3 v-3 h-2 Z" fill="#28b028" stroke="#108010" stroke-width="0.6"/>
<path d="M110 71 l-3.5 -3.5 h2 v-3 h3 v3 h2 Z" fill="#f0b040" stroke="#b06010" stroke-width="0.6"/>
<circle cx="136.3" cy="65.2" r="5" fill="none" stroke="#606060" stroke-width="1.4"/><path d="M136.3 58 v14.5 M129 65.2 h14.5" stroke="#606060" stroke-width="1.4"/>
<path d="M155.5 58.5 h5 l1.5 2 h5 v7 h-11.5 Z" fill="#f8e0a0" stroke="#c89040"/>
<path d="M167 61 l1.6 3.6 l3.9 0.4 l-2.9 2.6 l0.9 3.9 l-3.5 -2 l-3.5 2 l0.9 -3.9 l-2.9 -2.6 l3.9 -0.4 Z" fill="#f8c048" stroke="#b07020" stroke-width="0.8"/>
<path d="M159 69 v5" stroke="#606060" stroke-dasharray="1 1"/>
<rect x="180.5" y="53.5" width="24" height="21" fill="#f8f8f8" stroke="#c4c4c4" stroke-width="1"/>
<line x1="180.5" y1="53.5" x2="180.5" y2="74.5" stroke="#a8a8a8"/><line x1="180.5" y1="53.5" x2="204.5" y2="53.5" stroke="#a8a8a8"/>
<rect x="184.5" y="58.5" width="15" height="13" rx="1.5" fill="#fff" stroke="#3070c0" stroke-width="1.2"/><rect x="185" y="59" width="2" height="12" fill="#3070c0"/>
<rect x="188.5" y="61" width="1.2" height="1.2" fill="#e02020"/><line x1="191" y1="61.5" x2="198" y2="61.5" stroke="#a0b8d8"/>
<rect x="188.5" y="63.5" width="1.2" height="1.2" fill="#e02020"/><line x1="191" y1="64.0" x2="198" y2="64.0" stroke="#a0b8d8"/>
<rect x="188.5" y="66" width="1.2" height="1.2" fill="#e02020"/><line x1="191" y1="66.5" x2="198" y2="66.5" stroke="#a0b8d8"/>
<rect x="188.5" y="68.5" width="1.2" height="1.2" fill="#e02020"/><line x1="191" y1="69.0" x2="198" y2="69.0" stroke="#a0b8d8"/>
<rect x="212.5" y="57.5" width="11" height="12" fill="#fff" stroke="#8c8c8c"/><path d="M214 58 v10 M222 58 v4" stroke="#a08080"/>
<circle cx="219.5" cy="66" r="4.5" fill="#d8ecfa" stroke="#78a8d0" stroke-width="1.2"/><path d="M223 69.5 l5 4.5" stroke="#d08020" stroke-width="2.2"/>
<rect x="237" y="54" width="1" height="21" fill="#a0a0a0"/><rect x="238" y="54" width="1" height="21" fill="#ffffff"/>
<path d="M247.5 57.5 h7 l3 3 v10 h-10 Z" fill="#fff" stroke="#707070"/><path d="M249 61 h5 M249 63 h6 M249 65 h4" stroke="#8090c0"/>
<path d="M255.2 63.5 h3.6 v3.7 h3.7 v3.6 h-3.7 v3.7 h-3.6 v-3.7 h-3.7 v-3.6 h3.7 Z" fill="#28c828" stroke="#108010" stroke-width="1"/>
<path d="M345.5 57.5 l7.5 7.5 l-7.5 7.5 l-7.5 -7.5 Z" fill="#f8b850" stroke="#d08020"/><rect x="345" y="61" width="1.4" height="5" fill="#402000"/><rect x="345" y="67.5" width="1.4" height="1.4" fill="#402000"/>
<rect x="362.5" y="53.5" width="121" height="21" fill="#f8f8f8" stroke="#c4c4c4" stroke-width="1"/>
<line x1="362.5" y1="53.5" x2="362.5" y2="74.5" stroke="#a8a8a8"/><line x1="362.5" y1="53.5" x2="483.5" y2="53.5" stroke="#a8a8a8"/>
<path d="M368 66 h12 v5 l-3 2 h-7 l-2 -2 Z" fill="#e8c070" stroke="#b08030" stroke-width="0.8"/><ellipse cx="373.5" cy="62" rx="7.5" ry="3" fill="#68b0e8" stroke="#3070b0" stroke-width="0.8"/><ellipse cx="373.5" cy="60" rx="4" ry="2.5" fill="#88c8f8"/>
<circle cx="378.5" cy="70.5" r="4" fill="#20a020" stroke="#fff" stroke-width="0.8"/><path d="M377.3 68.5 l3 2 l-3 2 Z" fill="#fff"/>
<rect x="486" y="53" width="1" height="22" fill="#a0a0a0"/><rect x="490" y="53" width="1" height="22" fill="#a0a0a0"/>
<rect x="494" y="56" width="3" height="1" fill="#a8a8a8"/>
<rect x="494" y="58" width="3" height="1" fill="#a8a8a8"/>
<rect x="494" y="60" width="3" height="1" fill="#a8a8a8"/>
<rect x="494" y="62" width="3" height="1" fill="#a8a8a8"/>
<rect x="494" y="64" width="3" height="1" fill="#a8a8a8"/>
<rect x="494" y="66" width="3" height="1" fill="#a8a8a8"/>
<rect x="494" y="68" width="3" height="1" fill="#a8a8a8"/>
<rect x="494" y="70" width="3" height="1" fill="#a8a8a8"/>
<rect x="494" y="72" width="3" height="1" fill="#a8a8a8"/>
<rect x="500.5" y="53.5" width="24" height="21" fill="#f8f8f8" stroke="#c4c4c4" stroke-width="1"/>
<line x1="500.5" y1="53.5" x2="500.5" y2="74.5" stroke="#a8a8a8"/><line x1="500.5" y1="53.5" x2="524.5" y2="53.5" stroke="#a8a8a8"/>
<path d="M508.5 58.5 v12 l3 -2.8 l2.2 4.3 l1.8 -0.9 l-2.2 -4.1 l4 -0.3 Z" fill="#404040"/>
<path d="M540.5 58 v14 M533 65.5 h14.5" stroke="#505050" stroke-width="1.2"/>
<rect x="557" y="54" width="1" height="21" fill="#a0a0a0"/><rect x="558" y="54" width="1" height="21" fill="#ffffff"/>
<path d="M574.5 59.5 v12" stroke="#505050" stroke-width="1.2"/>
<path d="M597 65.5 h12" stroke="#505050" stroke-width="1.2"/>
<path d="M624.5 71.5 L637 60" stroke="#806868" stroke-width="1.2"/>
<path d="M651 69 L664 57 M653 72 L666 60 M655 60 v8 M659 58 v8 M663 58 v7" stroke="#605050" stroke-width="1"/><text x="663" y="74" font-size="7" font-weight="bold" fill="#505050" font-family="Liberation Sans">E</text>
<path d="M680 58.5 h13 M680 62 h13 M680 66 h13 M680 70 h10" stroke="#707070" stroke-dasharray="1 1"/><text x="690" y="74" font-size="7" font-weight="bold" fill="#505050" font-family="Liberation Sans">F</text>
<text x="710" y="71.5" font-size="13" font-weight="bold" fill="#505050" font-family="Liberation Sans">A</text>
<rect x="736.5" y="58.5" width="12" height="13" fill="none" stroke="#707070" stroke-dasharray="1 1"/><text x="738.5" y="70" font-size="12" font-weight="bold" fill="#505050" font-family="Liberation Sans">T</text>
<path d="M764 62 l3 -4 l3 4 Z M772 68 l3 4 l3 -4 Z M768 66 l3 3 l5 -6" fill="#404040" stroke="#404040" stroke-width="1"/>
<path d="M783 64 h6 l-3 3 Z" fill="#000"/>
<rect x="794" y="54" width="1" height="21" fill="#a0a0a0"/>
<rect x="799" y="56" width="3" height="1" fill="#a8a8a8"/>
<rect x="799" y="58" width="3" height="1" fill="#a8a8a8"/>
<rect x="799" y="60" width="3" height="1" fill="#a8a8a8"/>
<rect x="799" y="62" width="3" height="1" fill="#a8a8a8"/>
<rect x="799" y="64" width="3" height="1" fill="#a8a8a8"/>
<rect x="799" y="66" width="3" height="1" fill="#a8a8a8"/>
<rect x="799" y="68" width="3" height="1" fill="#a8a8a8"/>
<rect x="799" y="70" width="3" height="1" fill="#a8a8a8"/>
<rect x="799" y="72" width="3" height="1" fill="#a8a8a8"/>
<path d="M812.5 58 v14 M810 72.5 h14 M810.5 60.5 l2 -2 l2 2 M822.5 70.5 l2 2 l-2 2" stroke="#404040" fill="none" stroke-width="1"/>
<path d="M817 70 v-9 h4 M818 66 h-2" stroke="#20a020" stroke-width="1.4" fill="none"/>
<rect x="832.5" y="53.5" width="24" height="21" fill="#f8f8f8" stroke="#c4c4c4" stroke-width="1"/>
<line x1="832.5" y1="53.5" x2="832.5" y2="74.5" stroke="#a8a8a8"/><line x1="832.5" y1="53.5" x2="856.5" y2="53.5" stroke="#a8a8a8"/>
<path d="M839.5 58 v14 M837 72.5 h14 M837.5 60.5 l2 -2 l2 2 M849.5 70.5 l2 2 l-2 2" stroke="#404040" fill="none" stroke-width="1"/>
<rect x="843" y="60" width="4" height="8" fill="#40c040" stroke="#108010"/><path d="M845 57 v14" stroke="#108010"/>
<path d="M868.5 58 v14 M866 72.5 h14 M866.5 60.5 l2 -2 l2 2 M878.5 70.5 l2 2 l-2 2" stroke="#404040" fill="none" stroke-width="1"/>
<path d="M869 70 q4 -9 8 -6 l3 3" stroke="#20a020" stroke-width="1.2" fill="none"/>
<rect x="889" y="54" width="1" height="21" fill="#a0a0a0"/><rect x="890" y="54" width="1" height="21" fill="#ffffff"/>
<path d="M907.5 66 l5.5 6" stroke="#d08020" stroke-width="2.5"/><circle cx="904" cy="62.7" r="5.5" fill="#d8f0ff" stroke="#3080d0" stroke-width="1.6"/>
<path d="M901 62.7 h6" stroke="#3080d0" stroke-width="1.8"/>
<path d="M904 59.7 v6" stroke="#3080d0" stroke-width="1.8"/>
<path d="M935.5 66 l5.5 6" stroke="#d08020" stroke-width="2.5"/><circle cx="932" cy="62.7" r="5.5" fill="#d8f0ff" stroke="#3080d0" stroke-width="1.6"/>
<path d="M929 62.7 h6" stroke="#3080d0" stroke-width="1.8"/>
<rect x="951" y="54" width="1" height="21" fill="#a0a0a0"/><rect x="952" y="54" width="1" height="21" fill="#ffffff"/>
<rect x="956.5" y="53.5" width="24" height="21" fill="#f8f8f8" stroke="#c4c4c4" stroke-width="1"/>
<line x1="956.5" y1="53.5" x2="956.5" y2="74.5" stroke="#a8a8a8"/><line x1="956.5" y1="53.5" x2="980.5" y2="53.5" stroke="#a8a8a8"/>
<path d="M963.5 58 v14 M961 72.5 h14 M961.5 60.5 l2 -2 l2 2 M973.5 70.5 l2 2 l-2 2" stroke="#404040" fill="none" stroke-width="1"/>
<path d="M969 61 l5 4 l-5 4 Z" fill="#20b020"/>
<rect x="984.5" y="53.5" width="24" height="21" fill="#f8f8f8" stroke="#c4c4c4" stroke-width="1"/>
<line x1="984.5" y1="53.5" x2="984.5" y2="74.5" stroke="#a8a8a8"/><line x1="984.5" y1="53.5" x2="1008.5" y2="53.5" stroke="#a8a8a8"/>
<path d="M991.5 58 v14 M989 72.5 h14 M989.5 60.5 l2 -2 l2 2 M1001.5 70.5 l2 2 l-2 2" stroke="#404040" fill="none" stroke-width="1"/>
<path d="M1000 59 v11" stroke="#3070c0" stroke-width="1.4"/><path d="M1002 64.5 h5 M1002 64.5 l2.5 -2 M1002 64.5 l2.5 2" stroke="#c06020" stroke-width="1.2"/>
<rect x="1013" y="54" width="1" height="21" fill="#a0a0a0"/><rect x="1014" y="54" width="1" height="21" fill="#ffffff"/>
<path d="M1023.5 57.5 h6 l3 3 v9 h-9 Z" fill="#fff" stroke="#707070"/><path d="M1025 62 h4 M1025 60 v6" stroke="#8090a0"/>
<path d="M1032.2 63.5 h3.6 v3.7 h3.7 v3.6 h-3.7 v3.7 h-3.6 v-3.7 h-3.7 v-3.6 h3.7 Z" fill="#28c828" stroke="#108010" stroke-width="1"/>
<path d="M1043 64 h6 l-3 3 Z" fill="#000"/>
<circle cx="1066.6" cy="65" r="7.2" fill="#1e6ec8" stroke="#104a90"/><circle cx="1066.6" cy="65" r="5" fill="#f4f8ff"/><path d="M1066.6 61.5 v3.5 h2.5" stroke="#303030" stroke-width="1"/>
<path d="M1079 64 h6 l-3 3 Z" fill="#000"/>
<rect x="1095.5" y="58.5" width="16" height="13" fill="#fff" stroke="#3070b8" stroke-width="1.2"/><rect x="1096" y="59" width="15" height="3" fill="#3070b8"/><path d="M1097 66 l3 -1 l3 1 l3 -2 l4 1" stroke="#c04020" fill="none"/><path d="M1097 70 l3 -1 l3 1 l3 -2 l4 1" stroke="#20a020" fill="none"/>
<path d="M1116 64 h6 l-3 3 Z" fill="#000"/>
<rect x="1128" y="54" width="1" height="21" fill="#a0a0a0"/><rect x="1129" y="54" width="1" height="21" fill="#ffffff"/>
<rect x="1133" y="56" width="3" height="1" fill="#a8a8a8"/>
<rect x="1133" y="58" width="3" height="1" fill="#a8a8a8"/>
<rect x="1133" y="60" width="3" height="1" fill="#a8a8a8"/>
<rect x="1133" y="62" width="3" height="1" fill="#a8a8a8"/>
<rect x="1133" y="64" width="3" height="1" fill="#a8a8a8"/>
<rect x="1133" y="66" width="3" height="1" fill="#a8a8a8"/>
<rect x="1133" y="68" width="3" height="1" fill="#a8a8a8"/>
<rect x="1133" y="70" width="3" height="1" fill="#a8a8a8"/>
<rect x="1133" y="72" width="3" height="1" fill="#a8a8a8"/>
<rect x="1166.5" y="53.5" width="24" height="21" fill="#f8f8f8" stroke="#c4c4c4" stroke-width="1"/>
<line x1="1166.5" y1="53.5" x2="1166.5" y2="74.5" stroke="#a8a8a8"/><line x1="1166.5" y1="53.5" x2="1190.5" y2="53.5" stroke="#a8a8a8"/>
<text x="1150" y="68.5" font-size="10" fill="#404040" text-anchor="middle" font-family="Liberation Sans">M1</text>
<text x="1178.5" y="68.5" font-size="10" fill="#404040" text-anchor="middle" font-family="Liberation Sans">M5</text>
<text x="1206" y="68.5" font-size="10" fill="#404040" text-anchor="middle" font-family="Liberation Sans">M15</text>
<text x="1234" y="68.5" font-size="10" fill="#404040" text-anchor="middle" font-family="Liberation Sans">M30</text>
<text x="1262" y="68.5" font-size="10" fill="#404040" text-anchor="middle" font-family="Liberation Sans">H1</text>
<text x="1290" y="68.5" font-size="10" fill="#404040" text-anchor="middle" font-family="Liberation Sans">H4</text>
<text x="1318.5" y="68.5" font-size="10" fill="#404040" text-anchor="middle" font-family="Liberation Sans">D1</text>
<text x="1347" y="68.5" font-size="10" fill="#404040" text-anchor="middle" font-family="Liberation Sans">W1</text>
<text x="1374" y="68.5" font-size="10" fill="#404040" text-anchor="middle" font-family="Liberation Sans">MN</text>
<rect x="1389" y="53" width="1" height="22" fill="#a0a0a0"/>
</svg>
</body></html>
